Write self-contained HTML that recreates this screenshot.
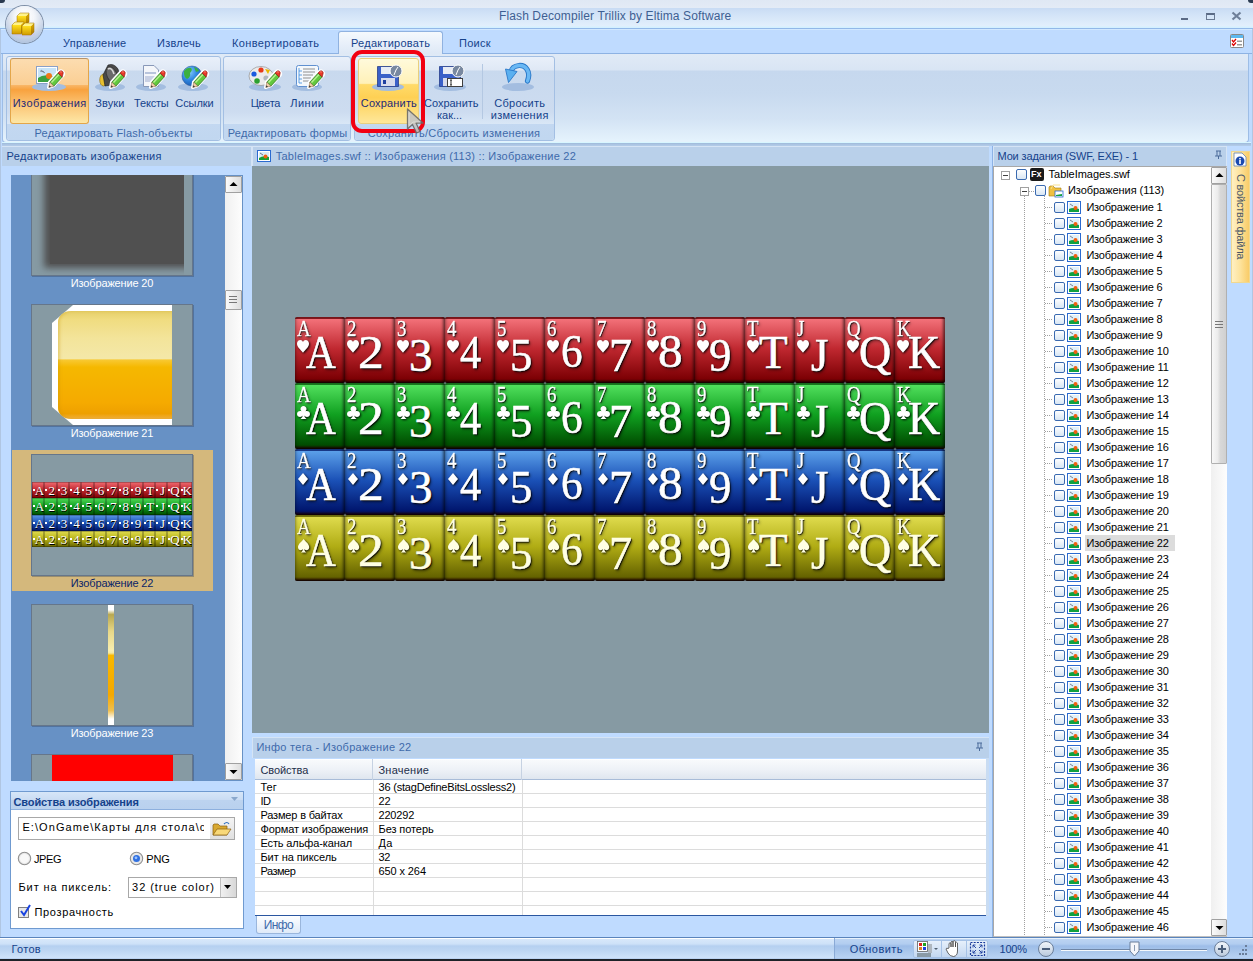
<!DOCTYPE html>
<html><head><meta charset="utf-8">
<style>
*{margin:0;padding:0;box-sizing:border-box}
html,body{width:1253px;height:961px;overflow:hidden;background:#bfdbff;font-family:"Liberation Sans",sans-serif;font-size:11px;color:#000}
.a{position:absolute}
.t{position:absolute;white-space:nowrap;line-height:13px}
.grp{position:absolute;top:56px;height:85px;border:1px solid #a3bfe3;border-radius:3px;background:linear-gradient(#e9f0fa 0,#dfe8f5 13px,#c8d9ee 14px,#cddcf0 55px,#dae8f7 68px)}
.glab{position:absolute;left:0;bottom:0;width:100%;height:16px;background:linear-gradient(#c3d8f1,#c1d7f0);color:#3e6aaa;text-align:center;line-height:15px;font-size:11px;border-radius:0 0 3px 3px}
.btxt{position:absolute;color:#15428b;text-align:center;white-space:nowrap;font-size:11px;line-height:13px}
.phead{position:absolute;height:20px;background:#bad1ec;color:#15428b;font-size:11.5px;line-height:20px;padding-left:6px;white-space:nowrap}
</style></head><body>


<div class="a" style="left:0;top:0;width:1253px;height:29px;background:linear-gradient(#dfe8f4 0,#e3ebf6 8px,#c9dcf4 8.5px,#d2e3f7 14px,#e2effc 26px,#d4f0ff 27px);border-bottom:1px solid #92b8e8"></div>
<div class="a" style="left:0;top:0;width:5px;height:3px;background:#2a3a50;border-radius:0 0 4px 0"></div>
<div class="a" style="left:1248px;top:0;width:5px;height:3px;background:#2a3a50;border-radius:0 0 0 4px"></div>
<div class="t" style="left:499px;top:10px;color:#3e5f92;font-size:12px;font-weight:normal;letter-spacing:0.116px;">Flash Decompiler Trillix by Eltima Software</div>
<!-- window controls -->
<div class="a" style="left:1181px;top:18px;width:7px;height:2px;background:#5b6b85"></div>
<div class="a" style="left:1206px;top:13px;width:9px;height:7px;border:1px solid #6a7a92;border-top:2px solid #5b6b85"></div>
<svg class="a" style="left:1231px;top:11px" width="11" height="10"><path d="M1.5 1.5 L9.5 8.5 M9.5 1.5 L1.5 8.5" stroke="#6e7f99" stroke-width="2.2"/></svg>
<!-- tabs row -->
<div class="a" style="left:0;top:29px;width:1253px;height:25px;background:#bfdbff;border-bottom:1px solid #8db2e3"></div><div class="a" style="left:0;top:29px;width:1253px;height:1px;background:#d2e8ff"></div>
<div class="a" style="left:0;top:29px;width:1px;height:932px;background:#b0c6e2"></div>
<div class="a" style="left:1252px;top:29px;width:1px;height:932px;background:#b0c6e2"></div>
<div class="t" style="left:63px;top:37px;color:#15428b;font-size:11px;font-weight:normal;letter-spacing:0.224px;">Управление</div>
<div class="t" style="left:157px;top:37px;color:#15428b;font-size:11px;font-weight:normal;letter-spacing:0.259px;">Извлечь</div>
<div class="t" style="left:232px;top:37px;color:#15428b;font-size:11px;font-weight:normal;letter-spacing:0.385px;">Конвертировать</div>
<div class="a" style="left:338px;top:31px;width:105px;height:24px;background:linear-gradient(#f5f9fd 0,#e6eef9 60%,#dde8f5 100%);border:1px solid #90b2e0;border-bottom:none;border-radius:3px 3px 0 0"></div>
<div class="t" style="left:351px;top:37px;color:#15428b;font-size:11px;font-weight:normal;letter-spacing:0.246px;">Редактировать</div>
<div class="t" style="left:459px;top:37px;color:#15428b;font-size:11px;font-weight:normal;letter-spacing:0.283px;">Поиск</div>
<!-- top right icon -->
<svg class="a" style="left:1230px;top:34px" width="14" height="14">
<rect x="0.5" y="0.5" width="13" height="13" rx="1" fill="#fff" stroke="#888"/>
<rect x="1" y="1" width="12" height="3" fill="#5cb8f0"/>
<path d="M2 6 L3.5 8 L6 5 M2 9.5 L3.5 11.5 L6 8.5" stroke="#d00" stroke-width="1.3" fill="none"/>
<rect x="7" y="6.5" width="5" height="1.5" fill="#999"/><rect x="7" y="10" width="5" height="1.5" fill="#999"/>
</svg>
<!-- orb -->
<div class="a" style="left:6px;top:6px;width:37px;height:37px;border-radius:50%;background:radial-gradient(circle at 50% 28%,#ffffff 0,#f4f6fa 30%,#dde3ec 55%,#c3cedd 80%,#a9b8cc 100%);box-shadow:0 0 0 1px #7d8ea6,inset 0 -6px 8px rgba(150,180,230,0.35)"></div>
<svg class="a" style="left:0;top:0" width="48" height="48">
<defs><linearGradient id="cf" x1="0" y1="0" x2="0" y2="1"><stop offset="0" stop-color="#ffe020"/><stop offset="1" stop-color="#d09a00"/></linearGradient>
<linearGradient id="cs" x1="0" y1="0" x2="0" y2="1"><stop offset="0" stop-color="#e0b000"/><stop offset="1" stop-color="#a87400"/></linearGradient></defs>
<ellipse cx="24" cy="34" rx="11" ry="3" fill="#c8c0e8" opacity="0.6"/>
<path d="M17 16 L26 16 L26 25 L17 25 Z" fill="url(#cf)"/><path d="M26 16 L29 13 L29 22 L26 25 Z" fill="url(#cs)"/><path d="M17 16 L20 13 L29 13 L26 16 Z" fill="#fff38a"/><path d="M17 16 L20 13 L29 13 L29 22 L26 25 L17 25 Z" fill="none" stroke="#a07000" stroke-width="0.5"/><path d="M12 25 L21 25 L21 34 L12 34 Z" fill="url(#cf)"/><path d="M21 25 L24 22 L24 31 L21 34 Z" fill="url(#cs)"/><path d="M12 25 L15 22 L24 22 L21 25 Z" fill="#fff38a"/><path d="M12 25 L15 22 L24 22 L24 31 L21 34 L12 34 Z" fill="none" stroke="#a07000" stroke-width="0.5"/><path d="M22 26 L31 26 L31 35 L22 35 Z" fill="url(#cf)"/><path d="M31 26 L34 23 L34 32 L31 35 Z" fill="url(#cs)"/><path d="M22 26 L25 23 L34 23 L31 26 Z" fill="#fff38a"/><path d="M22 26 L25 23 L34 23 L34 32 L31 35 L22 35 Z" fill="none" stroke="#a07000" stroke-width="0.5"/>
</svg>


<div class="a" style="left:2px;top:54px;width:1247px;height:89px;background:linear-gradient(#e0eaf6 0,#d9e5f4 16px,#c6d8ee 17px,#c8daef 40px,#d3e3f4 65px,#e4f2fc 86px);border:1px solid #9dbde6;border-top:none;border-radius:0 0 4px 4px"></div>
<div class="a" style="left:2px;top:142px;width:1249px;height:4px;background:linear-gradient(#d8f6ff 0,#d8f6ff 1px,#9cb8da 1px,#a8c2e0 2px,#b4cdea 4px)"></div>
<div class="grp" style="left:6px;width:215px"><div class="glab"></div></div>
<div class="grp" style="left:223px;width:128px"><div class="glab"></div></div>
<div class="grp" style="left:354px;width:201px"><div class="glab"></div></div>
<div class="t" style="left:34.5px;top:127px;color:#3e6aaa;font-size:11px;font-weight:normal;letter-spacing:0.203px;">Редактировать Flash-объекты</div><div class="t" style="left:227.8px;top:127px;color:#3e6aaa;font-size:11px;font-weight:normal;letter-spacing:0.200px;">Редактировать формы</div><div class="t" style="left:367.8px;top:127px;color:#3e6aaa;font-size:11px;font-weight:normal;letter-spacing:0.271px;">Сохранить/Сбросить изменения</div>
<!-- active button -->
<div class="a" style="left:10px;top:58px;width:79px;height:66px;border:1px solid #e3a64a;border-top-color:#b8946a;border-radius:3px;background:linear-gradient(#fcdcb0 0,#fbcf94 40%,#f9b86a 40.5%,#f8a23e 48%,#fbc373 70%,#fde7a6 100%)"></div>
<!-- save button hover -->
<div class="a" style="left:358px;top:58px;width:61px;height:66px;border:1px solid #e8cf7e;border-radius:3px;background:linear-gradient(#fffadc 0,#fff1b8 38%,#ffdb6a 40%,#fed054 60%,#fee79a 100%)"></div>
<div class="a" style="left:482px;top:64px;width:1px;height:55px;background:#b4c8e2"></div>
<div class="t" style="left:12.7px;top:97px;color:#1e2a78;font-size:11px;font-weight:normal;letter-spacing:0.451px;">Изображения</div>
<div class="t" style="left:95.2px;top:97px;color:#15428b;font-size:11px;font-weight:normal;letter-spacing:0.119px;">Звуки</div>
<div class="t" style="left:134px;top:97px;color:#15428b;font-size:11px;font-weight:normal;letter-spacing:-0.168px;">Тексты</div>
<div class="t" style="left:175.3px;top:97px;color:#15428b;font-size:11px;font-weight:normal;letter-spacing:-0.072px;">Ссылки</div>
<div class="t" style="left:250.7px;top:97px;color:#15428b;font-size:11px;font-weight:normal;letter-spacing:-0.211px;">Цвета</div>
<div class="t" style="left:290.2px;top:97px;color:#15428b;font-size:11px;font-weight:normal;letter-spacing:0.513px;">Линии</div>
<div class="t" style="left:360.8px;top:97px;color:#1e2a78;font-size:11px;font-weight:normal;letter-spacing:0.170px;">Сохранить</div>
<div class="t" style="left:424px;top:97px;color:#15428b;font-size:11px;font-weight:normal;letter-spacing:-0.019px;">Сохранить</div>
<div class="t" style="left:437px;top:109px;color:#15428b;font-size:11px;font-weight:normal;letter-spacing:0.000px;">как...</div>
<div class="t" style="left:494.3px;top:97px;color:#15428b;font-size:11px;font-weight:normal;letter-spacing:0.249px;">Сбросить</div>
<div class="t" style="left:490.7px;top:109px;color:#15428b;font-size:11px;font-weight:normal;letter-spacing:0.306px;">изменения</div>
<svg class="a" style="left:0;top:50px" width="560" height="80">
<ellipse cx="49" cy="37" rx="17" ry="4" fill="#a3bde0"/>
<rect x="36.5" y="16.5" width="21" height="17" fill="#fff" stroke="#8aa0c8"/><rect x="38" y="18" width="18" height="14" fill="#c8e4f8"/><path d="M38 28 Q44 23 56 27 L56 32 L38 32 Z" fill="#3aa040"/><circle cx="49" cy="26" r="3" fill="#f07818"/><path d="M40 21 L44 22 M41 20 L45 23" stroke="#556" stroke-width="0.6"/>
<g transform="translate(48,20)">
<path d="M0.5 17.5 L1.5 12 L10.5 2 Q12.5 0 14.5 1.5 Q16.5 3.5 15 5.5 L6 15.5 Z" fill="#fff" stroke="#fff" stroke-width="3" stroke-linejoin="round"/>
<path d="M1.8 12.2 L10.2 3 L14.2 7 L5.8 16.2 Z" fill="#62c83e" stroke="#2a6e1a" stroke-width="0.7"/>
<path d="M3.5 12.5 L11 4.5" stroke="#b8f090" stroke-width="1.3"/>
<path d="M10 3 L11.8 1.2 Q13 0.2 14.4 1.2 Q15.8 2.6 15 4 L14.2 7 Z" fill="#e83a28" stroke="#8a1010" stroke-width="0.6"/>
<path d="M12 2 Q13 1.5 13.8 2.2" stroke="#ff9a8a" stroke-width="0.8" fill="none"/>
<path d="M1.8 12.2 L5.8 16.2 L0.8 17.4 Z" fill="#f4d0a8" stroke="#806040" stroke-width="0.5"/>
<path d="M0.8 17.4 L1.4 15.2 L3 16.7 Z" fill="#333"/>
</g>
<ellipse cx="110" cy="37" rx="15" ry="4" fill="#a3bde0"/>
<ellipse cx="103.5" cy="30" rx="3.8" ry="6" fill="#e8c030" stroke="#8a6a10" stroke-width="0.6"/>
<path d="M103 25 L108 15 Q114 13 118 19 Q121 27 117 34 L105 36 Z" fill="#4a4a4a" stroke="#1a1a1a" stroke-width="0.6"/>
<ellipse cx="112" cy="25" rx="5" ry="9" transform="rotate(-25 112 25)" fill="#6a6a6a" stroke="#2a2a2a" stroke-width="0.6"/>
<path d="M108 19 Q112 17 114 24" stroke="#d8d8d8" stroke-width="1.6" fill="none"/>
<g transform="translate(110,20)">
<path d="M0.5 17.5 L1.5 12 L10.5 2 Q12.5 0 14.5 1.5 Q16.5 3.5 15 5.5 L6 15.5 Z" fill="#fff" stroke="#fff" stroke-width="3" stroke-linejoin="round"/>
<path d="M1.8 12.2 L10.2 3 L14.2 7 L5.8 16.2 Z" fill="#62c83e" stroke="#2a6e1a" stroke-width="0.7"/>
<path d="M3.5 12.5 L11 4.5" stroke="#b8f090" stroke-width="1.3"/>
<path d="M10 3 L11.8 1.2 Q13 0.2 14.4 1.2 Q15.8 2.6 15 4 L14.2 7 Z" fill="#e83a28" stroke="#8a1010" stroke-width="0.6"/>
<path d="M12 2 Q13 1.5 13.8 2.2" stroke="#ff9a8a" stroke-width="0.8" fill="none"/>
<path d="M1.8 12.2 L5.8 16.2 L0.8 17.4 Z" fill="#f4d0a8" stroke="#806040" stroke-width="0.5"/>
<path d="M0.8 17.4 L1.4 15.2 L3 16.7 Z" fill="#333"/>
</g>
<ellipse cx="151" cy="37" rx="15" ry="4" fill="#a3bde0"/>
<path d="M143.5 15.5 L154 15.5 L158.5 20 L158.5 36.5 L143.5 36.5 Z" fill="#f4f6fa" stroke="#8898b8"/><rect x="145" y="22" width="11" height="2" fill="#b8c4dc"/><rect x="145" y="26" width="11" height="6" fill="#c8d0e4"/>
<g transform="translate(150,20)">
<path d="M0.5 17.5 L1.5 12 L10.5 2 Q12.5 0 14.5 1.5 Q16.5 3.5 15 5.5 L6 15.5 Z" fill="#fff" stroke="#fff" stroke-width="3" stroke-linejoin="round"/>
<path d="M1.8 12.2 L10.2 3 L14.2 7 L5.8 16.2 Z" fill="#62c83e" stroke="#2a6e1a" stroke-width="0.7"/>
<path d="M3.5 12.5 L11 4.5" stroke="#b8f090" stroke-width="1.3"/>
<path d="M10 3 L11.8 1.2 Q13 0.2 14.4 1.2 Q15.8 2.6 15 4 L14.2 7 Z" fill="#e83a28" stroke="#8a1010" stroke-width="0.6"/>
<path d="M12 2 Q13 1.5 13.8 2.2" stroke="#ff9a8a" stroke-width="0.8" fill="none"/>
<path d="M1.8 12.2 L5.8 16.2 L0.8 17.4 Z" fill="#f4d0a8" stroke="#806040" stroke-width="0.5"/>
<path d="M0.8 17.4 L1.4 15.2 L3 16.7 Z" fill="#333"/>
</g>
<ellipse cx="193" cy="37" rx="15" ry="4" fill="#a3bde0"/>
<defs><radialGradient id="gl" cx="0.35" cy="0.3" r="0.8"><stop offset="0" stop-color="#8ad0ff"/><stop offset="0.5" stop-color="#2f86e0"/><stop offset="1" stop-color="#1450a8"/></radialGradient></defs>
<circle cx="192" cy="26" r="10" fill="url(#gl)" stroke="#1a4a90" stroke-width="0.5"/>
<path d="M184 21 Q187 17 191 18 Q193 20 190 23 Q191 27 187 29 Q184 27 184 24Z" fill="#3cb040"/><path d="M194 17 Q198 18 199 21 L196 22Z" fill="#3cb040"/><path d="M195 27 Q200 26 200 30 Q197 34 194 33Z" fill="#3cb040"/>
<g transform="translate(192,20)">
<path d="M0.5 17.5 L1.5 12 L10.5 2 Q12.5 0 14.5 1.5 Q16.5 3.5 15 5.5 L6 15.5 Z" fill="#fff" stroke="#fff" stroke-width="3" stroke-linejoin="round"/>
<path d="M1.8 12.2 L10.2 3 L14.2 7 L5.8 16.2 Z" fill="#62c83e" stroke="#2a6e1a" stroke-width="0.7"/>
<path d="M3.5 12.5 L11 4.5" stroke="#b8f090" stroke-width="1.3"/>
<path d="M10 3 L11.8 1.2 Q13 0.2 14.4 1.2 Q15.8 2.6 15 4 L14.2 7 Z" fill="#e83a28" stroke="#8a1010" stroke-width="0.6"/>
<path d="M12 2 Q13 1.5 13.8 2.2" stroke="#ff9a8a" stroke-width="0.8" fill="none"/>
<path d="M1.8 12.2 L5.8 16.2 L0.8 17.4 Z" fill="#f4d0a8" stroke="#806040" stroke-width="0.5"/>
<path d="M0.8 17.4 L1.4 15.2 L3 16.7 Z" fill="#333"/>
</g>
<ellipse cx="265" cy="37" rx="16" ry="4" fill="#a3bde0"/>
<ellipse cx="261" cy="26" rx="12" ry="9.5" fill="#ececec" stroke="#909090" stroke-width="0.7"/><circle cx="261" cy="20" r="2.6" fill="#e83a1a"/><circle cx="254" cy="24" r="2.6" fill="#1a5ae0"/><circle cx="257" cy="31" r="2.8" fill="#2ca030"/><path d="M265 19 L270 20 L268 24 Z" fill="#e8b800"/><circle cx="266" cy="28" r="2.6" fill="#b0b8c0"/>
<g transform="translate(265,20)">
<path d="M0.5 17.5 L1.5 12 L10.5 2 Q12.5 0 14.5 1.5 Q16.5 3.5 15 5.5 L6 15.5 Z" fill="#fff" stroke="#fff" stroke-width="3" stroke-linejoin="round"/>
<path d="M1.8 12.2 L10.2 3 L14.2 7 L5.8 16.2 Z" fill="#62c83e" stroke="#2a6e1a" stroke-width="0.7"/>
<path d="M3.5 12.5 L11 4.5" stroke="#b8f090" stroke-width="1.3"/>
<path d="M10 3 L11.8 1.2 Q13 0.2 14.4 1.2 Q15.8 2.6 15 4 L14.2 7 Z" fill="#e83a28" stroke="#8a1010" stroke-width="0.6"/>
<path d="M12 2 Q13 1.5 13.8 2.2" stroke="#ff9a8a" stroke-width="0.8" fill="none"/>
<path d="M1.8 12.2 L5.8 16.2 L0.8 17.4 Z" fill="#f4d0a8" stroke="#806040" stroke-width="0.5"/>
<path d="M0.8 17.4 L1.4 15.2 L3 16.7 Z" fill="#333"/>
</g>
<ellipse cx="307" cy="37" rx="15" ry="4" fill="#a3bde0"/>
<rect x="296.5" y="15.5" width="22" height="21" rx="2" fill="#f4f8fc" stroke="#6090d0"/><path d="M299 18 L299 33 M299 21 L302 21 M299 25 L302 25 M299 29 L302 29 M299 33 L302 33" stroke="#3a8ae0" stroke-width="0.8" fill="none"/><path d="M303 19 H315 M303 22 H315 M303 25 H313 M303 28 H311 M303 31 H310" stroke="#909090" stroke-width="1"/>
<g transform="translate(308,20)">
<path d="M0.5 17.5 L1.5 12 L10.5 2 Q12.5 0 14.5 1.5 Q16.5 3.5 15 5.5 L6 15.5 Z" fill="#fff" stroke="#fff" stroke-width="3" stroke-linejoin="round"/>
<path d="M1.8 12.2 L10.2 3 L14.2 7 L5.8 16.2 Z" fill="#62c83e" stroke="#2a6e1a" stroke-width="0.7"/>
<path d="M3.5 12.5 L11 4.5" stroke="#b8f090" stroke-width="1.3"/>
<path d="M10 3 L11.8 1.2 Q13 0.2 14.4 1.2 Q15.8 2.6 15 4 L14.2 7 Z" fill="#e83a28" stroke="#8a1010" stroke-width="0.6"/>
<path d="M12 2 Q13 1.5 13.8 2.2" stroke="#ff9a8a" stroke-width="0.8" fill="none"/>
<path d="M1.8 12.2 L5.8 16.2 L0.8 17.4 Z" fill="#f4d0a8" stroke="#806040" stroke-width="0.5"/>
<path d="M0.8 17.4 L1.4 15.2 L3 16.7 Z" fill="#333"/>
</g>
<ellipse cx="388" cy="37" rx="16" ry="4" fill="#a3bde0"/>
<path d="M377.5 16.5 L395.5 16.5 L398.5 19.5 L398.5 36.5 L377.5 36.5 Z" fill="#3a60c8" stroke="#1a3080" stroke-width="0.7"/><rect x="381" y="17" width="12" height="7" fill="#e8ecf4"/><rect x="381" y="28" width="14" height="8" fill="#d8dcec"/><rect x="383" y="30" width="3" height="4" fill="#2040a0"/>
<circle cx="396" cy="21" r="6" fill="#7888a0" stroke="#fff" stroke-width="1"/><path d="M394 25 Q396 19 398 17" stroke="#fff" stroke-width="1" fill="none"/>
<ellipse cx="450" cy="37" rx="16" ry="4" fill="#a3bde0"/>
<path d="M439.5 16.5 L457.5 16.5 L460.5 19.5 L460.5 36.5 L439.5 36.5 Z" fill="#3a60c8" stroke="#1a3080" stroke-width="0.7"/><rect x="443" y="17" width="12" height="7" fill="#e8ecf4"/><rect x="443" y="28" width="14" height="8" fill="#d8dcec"/>
<circle cx="458" cy="21" r="6" fill="#7888a0" stroke="#fff" stroke-width="1"/><path d="M456 25 Q458 19 460 17" stroke="#fff" stroke-width="1" fill="none"/>
<rect x="447.5" y="28.5" width="15" height="8" fill="#fff" stroke="#404040"/><path d="M450 30 H452 M451 30 V35 M450 35 H452" stroke="#000" stroke-width="0.8"/>
<ellipse cx="518" cy="37" rx="16" ry="4" fill="#a3bde0"/>
<path d="M527.5 31 C531 22 526 15 519 15.5 C514 16 511.5 19 511 22" fill="none" stroke="#2a78c8" stroke-width="5.2" stroke-linecap="round"/>
<path d="M527.5 31 C531 22 526 15 519 15.5 C514 16 511.5 19 511 22" fill="none" stroke="#6ab8f4" stroke-width="3.4" stroke-linecap="round"/>
<path d="M505.5 19 L517 21.5 L508.5 32.5 Z" fill="#5ab0f0" stroke="#2a78c8" stroke-width="0.9" stroke-linejoin="round"/>
</svg>
<div class="a" style="left:351px;top:50px;width:74px;height:83px;border:4px solid #f20012;border-radius:11px"></div>
<svg class="a" style="left:404px;top:107px" width="24" height="28"><path d="M3.5 2 L3.5 22 L8.5 17.5 L12.5 26 L16 24.5 L12 16 L19 16 Z" fill="#c4c4c4" stroke="#6a6a6a" stroke-width="1.3" stroke-linejoin="round" opacity="0.9"/><path d="M5 5.5 L5 18.5 L9 15 L16 15" fill="none" stroke="#e8e8e8" stroke-width="0.8" opacity="0.8"/></svg>


<div class="a" style="left:2px;top:146px;width:250px;height:20px;background:#b9d0ea;border-top:1px solid #d5e4f5;border-right:1px solid #d5e4f5"></div>
<div class="t" style="left:6.5px;top:150px;color:#15428b;font-size:11px;font-weight:normal;letter-spacing:0.359px;">Редактировать изображения</div>

<!-- thumbnails list -->
<div class="a" style="left:11px;top:175px;width:232px;height:606px;background:#6791c5;overflow:hidden">
<div class="a" style="left:20px;top:-21px;width:162px;height:122px;background:#869aa3;border:1px solid #66768a;overflow:hidden;box-shadow:1px 1px 0 rgba(40,60,90,0.35)"><div class="a" style="left:0;top:0;width:152px;height:120px;overflow:hidden"><div class="a" style="left:12px;top:-20px;width:150px;height:133px;background:#505050;filter:blur(3.5px)"></div><div class="a" style="left:18px;top:-10px;width:140px;height:119px;background:#505050"></div></div></div><div class="t" style="left:59.8px;top:102px;color:#ffffff;font-size:11px;font-weight:normal;letter-spacing:-0.150px;">Изображение 20</div><div class="a" style="left:20px;top:129px;width:162px;height:122px;background:#869aa3;border:1px solid #66768a;overflow:hidden;box-shadow:1px 1px 0 rgba(40,60,90,0.35)"><div class="a" style="left:20px;top:0;width:120px;height:120px;background:#fff;clip-path:polygon(21px 0,100% 0,100% 100%,21px 100%,0 calc(100% - 18px),0 18px);filter:blur(0.3px)"></div><div class="a" style="left:26px;top:6px;width:114px;height:108px;border-radius:13px 0 0 13px/11px 0 0 11px;box-shadow:inset 2px 0 3px rgba(200,150,0,0.3);background:linear-gradient(#e6cf6a 0,#f0dc80 8%,#f3e49a 25%,#f4e8a8 44%,#f8c830 45.5%,#f5b800 52%,#f5aa00 85%,#eea000 95%,#f0b040 100%)"></div></div><div class="t" style="left:59.8px;top:252px;color:#ffffff;font-size:11px;font-weight:normal;letter-spacing:-0.150px;">Изображение 21</div><div class="a" style="left:1px;top:275px;width:201px;height:141px;background:#d4b87c"></div><div class="a" style="left:20px;top:279px;width:162px;height:122px;background:#869aa3;border:1px solid #66768a;overflow:hidden;box-shadow:1px 1px 0 rgba(40,60,90,0.35)"><div class="a" style="left:0;top:27px;width:160px;height:65px"><div class="a" style="left:0.0px;top:0.0px;width:12.4px;height:16.25px;background:linear-gradient(#f06a70,#c02830 50%,#7a0000);box-shadow:inset 0 0 0 0.5px rgba(0,0,0,0.5)"></div><div class="a" style="left:2.5px;top:1.0px;width:10px;text-align:center;color:#fff;font-family:'Liberation Serif',serif;font-size:13px;line-height:16px;text-shadow:0.5px 0.5px 0.5px #000">A</div><div class="a" style="left:1.0px;top:7.0px;width:2px;height:2px;background:#fff"></div><div class="a" style="left:12.31px;top:0.0px;width:12.4px;height:16.25px;background:linear-gradient(#f06a70,#c02830 50%,#7a0000);box-shadow:inset 0 0 0 0.5px rgba(0,0,0,0.5)"></div><div class="a" style="left:14.81px;top:1.0px;width:10px;text-align:center;color:#fff;font-family:'Liberation Serif',serif;font-size:13px;line-height:16px;text-shadow:0.5px 0.5px 0.5px #000">2</div><div class="a" style="left:13.31px;top:7.0px;width:2px;height:2px;background:#fff"></div><div class="a" style="left:24.62px;top:0.0px;width:12.4px;height:16.25px;background:linear-gradient(#f06a70,#c02830 50%,#7a0000);box-shadow:inset 0 0 0 0.5px rgba(0,0,0,0.5)"></div><div class="a" style="left:27.12px;top:1.0px;width:10px;text-align:center;color:#fff;font-family:'Liberation Serif',serif;font-size:13px;line-height:16px;text-shadow:0.5px 0.5px 0.5px #000">3</div><div class="a" style="left:25.62px;top:7.0px;width:2px;height:2px;background:#fff"></div><div class="a" style="left:36.92px;top:0.0px;width:12.4px;height:16.25px;background:linear-gradient(#f06a70,#c02830 50%,#7a0000);box-shadow:inset 0 0 0 0.5px rgba(0,0,0,0.5)"></div><div class="a" style="left:39.42px;top:1.0px;width:10px;text-align:center;color:#fff;font-family:'Liberation Serif',serif;font-size:13px;line-height:16px;text-shadow:0.5px 0.5px 0.5px #000">4</div><div class="a" style="left:37.92px;top:7.0px;width:2px;height:2px;background:#fff"></div><div class="a" style="left:49.23px;top:0.0px;width:12.4px;height:16.25px;background:linear-gradient(#f06a70,#c02830 50%,#7a0000);box-shadow:inset 0 0 0 0.5px rgba(0,0,0,0.5)"></div><div class="a" style="left:51.73px;top:1.0px;width:10px;text-align:center;color:#fff;font-family:'Liberation Serif',serif;font-size:13px;line-height:16px;text-shadow:0.5px 0.5px 0.5px #000">5</div><div class="a" style="left:50.23px;top:7.0px;width:2px;height:2px;background:#fff"></div><div class="a" style="left:61.54px;top:0.0px;width:12.4px;height:16.25px;background:linear-gradient(#f06a70,#c02830 50%,#7a0000);box-shadow:inset 0 0 0 0.5px rgba(0,0,0,0.5)"></div><div class="a" style="left:64.03999999999999px;top:1.0px;width:10px;text-align:center;color:#fff;font-family:'Liberation Serif',serif;font-size:13px;line-height:16px;text-shadow:0.5px 0.5px 0.5px #000">6</div><div class="a" style="left:62.54px;top:7.0px;width:2px;height:2px;background:#fff"></div><div class="a" style="left:73.85px;top:0.0px;width:12.4px;height:16.25px;background:linear-gradient(#f06a70,#c02830 50%,#7a0000);box-shadow:inset 0 0 0 0.5px rgba(0,0,0,0.5)"></div><div class="a" style="left:76.35px;top:1.0px;width:10px;text-align:center;color:#fff;font-family:'Liberation Serif',serif;font-size:13px;line-height:16px;text-shadow:0.5px 0.5px 0.5px #000">7</div><div class="a" style="left:74.85px;top:7.0px;width:2px;height:2px;background:#fff"></div><div class="a" style="left:86.15px;top:0.0px;width:12.4px;height:16.25px;background:linear-gradient(#f06a70,#c02830 50%,#7a0000);box-shadow:inset 0 0 0 0.5px rgba(0,0,0,0.5)"></div><div class="a" style="left:88.65px;top:1.0px;width:10px;text-align:center;color:#fff;font-family:'Liberation Serif',serif;font-size:13px;line-height:16px;text-shadow:0.5px 0.5px 0.5px #000">8</div><div class="a" style="left:87.15px;top:7.0px;width:2px;height:2px;background:#fff"></div><div class="a" style="left:98.46px;top:0.0px;width:12.4px;height:16.25px;background:linear-gradient(#f06a70,#c02830 50%,#7a0000);box-shadow:inset 0 0 0 0.5px rgba(0,0,0,0.5)"></div><div class="a" style="left:100.96px;top:1.0px;width:10px;text-align:center;color:#fff;font-family:'Liberation Serif',serif;font-size:13px;line-height:16px;text-shadow:0.5px 0.5px 0.5px #000">9</div><div class="a" style="left:99.46px;top:7.0px;width:2px;height:2px;background:#fff"></div><div class="a" style="left:110.77px;top:0.0px;width:12.4px;height:16.25px;background:linear-gradient(#f06a70,#c02830 50%,#7a0000);box-shadow:inset 0 0 0 0.5px rgba(0,0,0,0.5)"></div><div class="a" style="left:113.27px;top:1.0px;width:10px;text-align:center;color:#fff;font-family:'Liberation Serif',serif;font-size:13px;line-height:16px;text-shadow:0.5px 0.5px 0.5px #000">T</div><div class="a" style="left:111.77px;top:7.0px;width:2px;height:2px;background:#fff"></div><div class="a" style="left:123.08px;top:0.0px;width:12.4px;height:16.25px;background:linear-gradient(#f06a70,#c02830 50%,#7a0000);box-shadow:inset 0 0 0 0.5px rgba(0,0,0,0.5)"></div><div class="a" style="left:125.58px;top:1.0px;width:10px;text-align:center;color:#fff;font-family:'Liberation Serif',serif;font-size:13px;line-height:16px;text-shadow:0.5px 0.5px 0.5px #000">J</div><div class="a" style="left:124.08px;top:7.0px;width:2px;height:2px;background:#fff"></div><div class="a" style="left:135.38px;top:0.0px;width:12.4px;height:16.25px;background:linear-gradient(#f06a70,#c02830 50%,#7a0000);box-shadow:inset 0 0 0 0.5px rgba(0,0,0,0.5)"></div><div class="a" style="left:137.88px;top:1.0px;width:10px;text-align:center;color:#fff;font-family:'Liberation Serif',serif;font-size:13px;line-height:16px;text-shadow:0.5px 0.5px 0.5px #000">Q</div><div class="a" style="left:136.38px;top:7.0px;width:2px;height:2px;background:#fff"></div><div class="a" style="left:147.69px;top:0.0px;width:12.4px;height:16.25px;background:linear-gradient(#f06a70,#c02830 50%,#7a0000);box-shadow:inset 0 0 0 0.5px rgba(0,0,0,0.5)"></div><div class="a" style="left:150.19px;top:1.0px;width:10px;text-align:center;color:#fff;font-family:'Liberation Serif',serif;font-size:13px;line-height:16px;text-shadow:0.5px 0.5px 0.5px #000">K</div><div class="a" style="left:148.69px;top:7.0px;width:2px;height:2px;background:#fff"></div><div class="a" style="left:0.0px;top:16.25px;width:12.4px;height:16.25px;background:linear-gradient(#50d858,#10a020 50%,#004c00);box-shadow:inset 0 0 0 0.5px rgba(0,0,0,0.5)"></div><div class="a" style="left:2.5px;top:17.25px;width:10px;text-align:center;color:#fff;font-family:'Liberation Serif',serif;font-size:13px;line-height:16px;text-shadow:0.5px 0.5px 0.5px #000">A</div><div class="a" style="left:1.0px;top:23.25px;width:2px;height:2px;background:#fff"></div><div class="a" style="left:12.31px;top:16.25px;width:12.4px;height:16.25px;background:linear-gradient(#50d858,#10a020 50%,#004c00);box-shadow:inset 0 0 0 0.5px rgba(0,0,0,0.5)"></div><div class="a" style="left:14.81px;top:17.25px;width:10px;text-align:center;color:#fff;font-family:'Liberation Serif',serif;font-size:13px;line-height:16px;text-shadow:0.5px 0.5px 0.5px #000">2</div><div class="a" style="left:13.31px;top:23.25px;width:2px;height:2px;background:#fff"></div><div class="a" style="left:24.62px;top:16.25px;width:12.4px;height:16.25px;background:linear-gradient(#50d858,#10a020 50%,#004c00);box-shadow:inset 0 0 0 0.5px rgba(0,0,0,0.5)"></div><div class="a" style="left:27.12px;top:17.25px;width:10px;text-align:center;color:#fff;font-family:'Liberation Serif',serif;font-size:13px;line-height:16px;text-shadow:0.5px 0.5px 0.5px #000">3</div><div class="a" style="left:25.62px;top:23.25px;width:2px;height:2px;background:#fff"></div><div class="a" style="left:36.92px;top:16.25px;width:12.4px;height:16.25px;background:linear-gradient(#50d858,#10a020 50%,#004c00);box-shadow:inset 0 0 0 0.5px rgba(0,0,0,0.5)"></div><div class="a" style="left:39.42px;top:17.25px;width:10px;text-align:center;color:#fff;font-family:'Liberation Serif',serif;font-size:13px;line-height:16px;text-shadow:0.5px 0.5px 0.5px #000">4</div><div class="a" style="left:37.92px;top:23.25px;width:2px;height:2px;background:#fff"></div><div class="a" style="left:49.23px;top:16.25px;width:12.4px;height:16.25px;background:linear-gradient(#50d858,#10a020 50%,#004c00);box-shadow:inset 0 0 0 0.5px rgba(0,0,0,0.5)"></div><div class="a" style="left:51.73px;top:17.25px;width:10px;text-align:center;color:#fff;font-family:'Liberation Serif',serif;font-size:13px;line-height:16px;text-shadow:0.5px 0.5px 0.5px #000">5</div><div class="a" style="left:50.23px;top:23.25px;width:2px;height:2px;background:#fff"></div><div class="a" style="left:61.54px;top:16.25px;width:12.4px;height:16.25px;background:linear-gradient(#50d858,#10a020 50%,#004c00);box-shadow:inset 0 0 0 0.5px rgba(0,0,0,0.5)"></div><div class="a" style="left:64.03999999999999px;top:17.25px;width:10px;text-align:center;color:#fff;font-family:'Liberation Serif',serif;font-size:13px;line-height:16px;text-shadow:0.5px 0.5px 0.5px #000">6</div><div class="a" style="left:62.54px;top:23.25px;width:2px;height:2px;background:#fff"></div><div class="a" style="left:73.85px;top:16.25px;width:12.4px;height:16.25px;background:linear-gradient(#50d858,#10a020 50%,#004c00);box-shadow:inset 0 0 0 0.5px rgba(0,0,0,0.5)"></div><div class="a" style="left:76.35px;top:17.25px;width:10px;text-align:center;color:#fff;font-family:'Liberation Serif',serif;font-size:13px;line-height:16px;text-shadow:0.5px 0.5px 0.5px #000">7</div><div class="a" style="left:74.85px;top:23.25px;width:2px;height:2px;background:#fff"></div><div class="a" style="left:86.15px;top:16.25px;width:12.4px;height:16.25px;background:linear-gradient(#50d858,#10a020 50%,#004c00);box-shadow:inset 0 0 0 0.5px rgba(0,0,0,0.5)"></div><div class="a" style="left:88.65px;top:17.25px;width:10px;text-align:center;color:#fff;font-family:'Liberation Serif',serif;font-size:13px;line-height:16px;text-shadow:0.5px 0.5px 0.5px #000">8</div><div class="a" style="left:87.15px;top:23.25px;width:2px;height:2px;background:#fff"></div><div class="a" style="left:98.46px;top:16.25px;width:12.4px;height:16.25px;background:linear-gradient(#50d858,#10a020 50%,#004c00);box-shadow:inset 0 0 0 0.5px rgba(0,0,0,0.5)"></div><div class="a" style="left:100.96px;top:17.25px;width:10px;text-align:center;color:#fff;font-family:'Liberation Serif',serif;font-size:13px;line-height:16px;text-shadow:0.5px 0.5px 0.5px #000">9</div><div class="a" style="left:99.46px;top:23.25px;width:2px;height:2px;background:#fff"></div><div class="a" style="left:110.77px;top:16.25px;width:12.4px;height:16.25px;background:linear-gradient(#50d858,#10a020 50%,#004c00);box-shadow:inset 0 0 0 0.5px rgba(0,0,0,0.5)"></div><div class="a" style="left:113.27px;top:17.25px;width:10px;text-align:center;color:#fff;font-family:'Liberation Serif',serif;font-size:13px;line-height:16px;text-shadow:0.5px 0.5px 0.5px #000">T</div><div class="a" style="left:111.77px;top:23.25px;width:2px;height:2px;background:#fff"></div><div class="a" style="left:123.08px;top:16.25px;width:12.4px;height:16.25px;background:linear-gradient(#50d858,#10a020 50%,#004c00);box-shadow:inset 0 0 0 0.5px rgba(0,0,0,0.5)"></div><div class="a" style="left:125.58px;top:17.25px;width:10px;text-align:center;color:#fff;font-family:'Liberation Serif',serif;font-size:13px;line-height:16px;text-shadow:0.5px 0.5px 0.5px #000">J</div><div class="a" style="left:124.08px;top:23.25px;width:2px;height:2px;background:#fff"></div><div class="a" style="left:135.38px;top:16.25px;width:12.4px;height:16.25px;background:linear-gradient(#50d858,#10a020 50%,#004c00);box-shadow:inset 0 0 0 0.5px rgba(0,0,0,0.5)"></div><div class="a" style="left:137.88px;top:17.25px;width:10px;text-align:center;color:#fff;font-family:'Liberation Serif',serif;font-size:13px;line-height:16px;text-shadow:0.5px 0.5px 0.5px #000">Q</div><div class="a" style="left:136.38px;top:23.25px;width:2px;height:2px;background:#fff"></div><div class="a" style="left:147.69px;top:16.25px;width:12.4px;height:16.25px;background:linear-gradient(#50d858,#10a020 50%,#004c00);box-shadow:inset 0 0 0 0.5px rgba(0,0,0,0.5)"></div><div class="a" style="left:150.19px;top:17.25px;width:10px;text-align:center;color:#fff;font-family:'Liberation Serif',serif;font-size:13px;line-height:16px;text-shadow:0.5px 0.5px 0.5px #000">K</div><div class="a" style="left:148.69px;top:23.25px;width:2px;height:2px;background:#fff"></div><div class="a" style="left:0.0px;top:32.5px;width:12.4px;height:16.25px;background:linear-gradient(#5a9ae8,#1a4eb4 50%,#001468);box-shadow:inset 0 0 0 0.5px rgba(0,0,0,0.5)"></div><div class="a" style="left:2.5px;top:33.5px;width:10px;text-align:center;color:#fff;font-family:'Liberation Serif',serif;font-size:13px;line-height:16px;text-shadow:0.5px 0.5px 0.5px #000">A</div><div class="a" style="left:1.0px;top:39.5px;width:2px;height:2px;background:#fff"></div><div class="a" style="left:12.31px;top:32.5px;width:12.4px;height:16.25px;background:linear-gradient(#5a9ae8,#1a4eb4 50%,#001468);box-shadow:inset 0 0 0 0.5px rgba(0,0,0,0.5)"></div><div class="a" style="left:14.81px;top:33.5px;width:10px;text-align:center;color:#fff;font-family:'Liberation Serif',serif;font-size:13px;line-height:16px;text-shadow:0.5px 0.5px 0.5px #000">2</div><div class="a" style="left:13.31px;top:39.5px;width:2px;height:2px;background:#fff"></div><div class="a" style="left:24.62px;top:32.5px;width:12.4px;height:16.25px;background:linear-gradient(#5a9ae8,#1a4eb4 50%,#001468);box-shadow:inset 0 0 0 0.5px rgba(0,0,0,0.5)"></div><div class="a" style="left:27.12px;top:33.5px;width:10px;text-align:center;color:#fff;font-family:'Liberation Serif',serif;font-size:13px;line-height:16px;text-shadow:0.5px 0.5px 0.5px #000">3</div><div class="a" style="left:25.62px;top:39.5px;width:2px;height:2px;background:#fff"></div><div class="a" style="left:36.92px;top:32.5px;width:12.4px;height:16.25px;background:linear-gradient(#5a9ae8,#1a4eb4 50%,#001468);box-shadow:inset 0 0 0 0.5px rgba(0,0,0,0.5)"></div><div class="a" style="left:39.42px;top:33.5px;width:10px;text-align:center;color:#fff;font-family:'Liberation Serif',serif;font-size:13px;line-height:16px;text-shadow:0.5px 0.5px 0.5px #000">4</div><div class="a" style="left:37.92px;top:39.5px;width:2px;height:2px;background:#fff"></div><div class="a" style="left:49.23px;top:32.5px;width:12.4px;height:16.25px;background:linear-gradient(#5a9ae8,#1a4eb4 50%,#001468);box-shadow:inset 0 0 0 0.5px rgba(0,0,0,0.5)"></div><div class="a" style="left:51.73px;top:33.5px;width:10px;text-align:center;color:#fff;font-family:'Liberation Serif',serif;font-size:13px;line-height:16px;text-shadow:0.5px 0.5px 0.5px #000">5</div><div class="a" style="left:50.23px;top:39.5px;width:2px;height:2px;background:#fff"></div><div class="a" style="left:61.54px;top:32.5px;width:12.4px;height:16.25px;background:linear-gradient(#5a9ae8,#1a4eb4 50%,#001468);box-shadow:inset 0 0 0 0.5px rgba(0,0,0,0.5)"></div><div class="a" style="left:64.03999999999999px;top:33.5px;width:10px;text-align:center;color:#fff;font-family:'Liberation Serif',serif;font-size:13px;line-height:16px;text-shadow:0.5px 0.5px 0.5px #000">6</div><div class="a" style="left:62.54px;top:39.5px;width:2px;height:2px;background:#fff"></div><div class="a" style="left:73.85px;top:32.5px;width:12.4px;height:16.25px;background:linear-gradient(#5a9ae8,#1a4eb4 50%,#001468);box-shadow:inset 0 0 0 0.5px rgba(0,0,0,0.5)"></div><div class="a" style="left:76.35px;top:33.5px;width:10px;text-align:center;color:#fff;font-family:'Liberation Serif',serif;font-size:13px;line-height:16px;text-shadow:0.5px 0.5px 0.5px #000">7</div><div class="a" style="left:74.85px;top:39.5px;width:2px;height:2px;background:#fff"></div><div class="a" style="left:86.15px;top:32.5px;width:12.4px;height:16.25px;background:linear-gradient(#5a9ae8,#1a4eb4 50%,#001468);box-shadow:inset 0 0 0 0.5px rgba(0,0,0,0.5)"></div><div class="a" style="left:88.65px;top:33.5px;width:10px;text-align:center;color:#fff;font-family:'Liberation Serif',serif;font-size:13px;line-height:16px;text-shadow:0.5px 0.5px 0.5px #000">8</div><div class="a" style="left:87.15px;top:39.5px;width:2px;height:2px;background:#fff"></div><div class="a" style="left:98.46px;top:32.5px;width:12.4px;height:16.25px;background:linear-gradient(#5a9ae8,#1a4eb4 50%,#001468);box-shadow:inset 0 0 0 0.5px rgba(0,0,0,0.5)"></div><div class="a" style="left:100.96px;top:33.5px;width:10px;text-align:center;color:#fff;font-family:'Liberation Serif',serif;font-size:13px;line-height:16px;text-shadow:0.5px 0.5px 0.5px #000">9</div><div class="a" style="left:99.46px;top:39.5px;width:2px;height:2px;background:#fff"></div><div class="a" style="left:110.77px;top:32.5px;width:12.4px;height:16.25px;background:linear-gradient(#5a9ae8,#1a4eb4 50%,#001468);box-shadow:inset 0 0 0 0.5px rgba(0,0,0,0.5)"></div><div class="a" style="left:113.27px;top:33.5px;width:10px;text-align:center;color:#fff;font-family:'Liberation Serif',serif;font-size:13px;line-height:16px;text-shadow:0.5px 0.5px 0.5px #000">T</div><div class="a" style="left:111.77px;top:39.5px;width:2px;height:2px;background:#fff"></div><div class="a" style="left:123.08px;top:32.5px;width:12.4px;height:16.25px;background:linear-gradient(#5a9ae8,#1a4eb4 50%,#001468);box-shadow:inset 0 0 0 0.5px rgba(0,0,0,0.5)"></div><div class="a" style="left:125.58px;top:33.5px;width:10px;text-align:center;color:#fff;font-family:'Liberation Serif',serif;font-size:13px;line-height:16px;text-shadow:0.5px 0.5px 0.5px #000">J</div><div class="a" style="left:124.08px;top:39.5px;width:2px;height:2px;background:#fff"></div><div class="a" style="left:135.38px;top:32.5px;width:12.4px;height:16.25px;background:linear-gradient(#5a9ae8,#1a4eb4 50%,#001468);box-shadow:inset 0 0 0 0.5px rgba(0,0,0,0.5)"></div><div class="a" style="left:137.88px;top:33.5px;width:10px;text-align:center;color:#fff;font-family:'Liberation Serif',serif;font-size:13px;line-height:16px;text-shadow:0.5px 0.5px 0.5px #000">Q</div><div class="a" style="left:136.38px;top:39.5px;width:2px;height:2px;background:#fff"></div><div class="a" style="left:147.69px;top:32.5px;width:12.4px;height:16.25px;background:linear-gradient(#5a9ae8,#1a4eb4 50%,#001468);box-shadow:inset 0 0 0 0.5px rgba(0,0,0,0.5)"></div><div class="a" style="left:150.19px;top:33.5px;width:10px;text-align:center;color:#fff;font-family:'Liberation Serif',serif;font-size:13px;line-height:16px;text-shadow:0.5px 0.5px 0.5px #000">K</div><div class="a" style="left:148.69px;top:39.5px;width:2px;height:2px;background:#fff"></div><div class="a" style="left:0.0px;top:48.75px;width:12.4px;height:16.25px;background:linear-gradient(#e0dc50,#b8b418 50%,#646200);box-shadow:inset 0 0 0 0.5px rgba(0,0,0,0.5)"></div><div class="a" style="left:2.5px;top:49.75px;width:10px;text-align:center;color:#fff;font-family:'Liberation Serif',serif;font-size:13px;line-height:16px;text-shadow:0.5px 0.5px 0.5px #000">A</div><div class="a" style="left:1.0px;top:55.75px;width:2px;height:2px;background:#fff"></div><div class="a" style="left:12.31px;top:48.75px;width:12.4px;height:16.25px;background:linear-gradient(#e0dc50,#b8b418 50%,#646200);box-shadow:inset 0 0 0 0.5px rgba(0,0,0,0.5)"></div><div class="a" style="left:14.81px;top:49.75px;width:10px;text-align:center;color:#fff;font-family:'Liberation Serif',serif;font-size:13px;line-height:16px;text-shadow:0.5px 0.5px 0.5px #000">2</div><div class="a" style="left:13.31px;top:55.75px;width:2px;height:2px;background:#fff"></div><div class="a" style="left:24.62px;top:48.75px;width:12.4px;height:16.25px;background:linear-gradient(#e0dc50,#b8b418 50%,#646200);box-shadow:inset 0 0 0 0.5px rgba(0,0,0,0.5)"></div><div class="a" style="left:27.12px;top:49.75px;width:10px;text-align:center;color:#fff;font-family:'Liberation Serif',serif;font-size:13px;line-height:16px;text-shadow:0.5px 0.5px 0.5px #000">3</div><div class="a" style="left:25.62px;top:55.75px;width:2px;height:2px;background:#fff"></div><div class="a" style="left:36.92px;top:48.75px;width:12.4px;height:16.25px;background:linear-gradient(#e0dc50,#b8b418 50%,#646200);box-shadow:inset 0 0 0 0.5px rgba(0,0,0,0.5)"></div><div class="a" style="left:39.42px;top:49.75px;width:10px;text-align:center;color:#fff;font-family:'Liberation Serif',serif;font-size:13px;line-height:16px;text-shadow:0.5px 0.5px 0.5px #000">4</div><div class="a" style="left:37.92px;top:55.75px;width:2px;height:2px;background:#fff"></div><div class="a" style="left:49.23px;top:48.75px;width:12.4px;height:16.25px;background:linear-gradient(#e0dc50,#b8b418 50%,#646200);box-shadow:inset 0 0 0 0.5px rgba(0,0,0,0.5)"></div><div class="a" style="left:51.73px;top:49.75px;width:10px;text-align:center;color:#fff;font-family:'Liberation Serif',serif;font-size:13px;line-height:16px;text-shadow:0.5px 0.5px 0.5px #000">5</div><div class="a" style="left:50.23px;top:55.75px;width:2px;height:2px;background:#fff"></div><div class="a" style="left:61.54px;top:48.75px;width:12.4px;height:16.25px;background:linear-gradient(#e0dc50,#b8b418 50%,#646200);box-shadow:inset 0 0 0 0.5px rgba(0,0,0,0.5)"></div><div class="a" style="left:64.03999999999999px;top:49.75px;width:10px;text-align:center;color:#fff;font-family:'Liberation Serif',serif;font-size:13px;line-height:16px;text-shadow:0.5px 0.5px 0.5px #000">6</div><div class="a" style="left:62.54px;top:55.75px;width:2px;height:2px;background:#fff"></div><div class="a" style="left:73.85px;top:48.75px;width:12.4px;height:16.25px;background:linear-gradient(#e0dc50,#b8b418 50%,#646200);box-shadow:inset 0 0 0 0.5px rgba(0,0,0,0.5)"></div><div class="a" style="left:76.35px;top:49.75px;width:10px;text-align:center;color:#fff;font-family:'Liberation Serif',serif;font-size:13px;line-height:16px;text-shadow:0.5px 0.5px 0.5px #000">7</div><div class="a" style="left:74.85px;top:55.75px;width:2px;height:2px;background:#fff"></div><div class="a" style="left:86.15px;top:48.75px;width:12.4px;height:16.25px;background:linear-gradient(#e0dc50,#b8b418 50%,#646200);box-shadow:inset 0 0 0 0.5px rgba(0,0,0,0.5)"></div><div class="a" style="left:88.65px;top:49.75px;width:10px;text-align:center;color:#fff;font-family:'Liberation Serif',serif;font-size:13px;line-height:16px;text-shadow:0.5px 0.5px 0.5px #000">8</div><div class="a" style="left:87.15px;top:55.75px;width:2px;height:2px;background:#fff"></div><div class="a" style="left:98.46px;top:48.75px;width:12.4px;height:16.25px;background:linear-gradient(#e0dc50,#b8b418 50%,#646200);box-shadow:inset 0 0 0 0.5px rgba(0,0,0,0.5)"></div><div class="a" style="left:100.96px;top:49.75px;width:10px;text-align:center;color:#fff;font-family:'Liberation Serif',serif;font-size:13px;line-height:16px;text-shadow:0.5px 0.5px 0.5px #000">9</div><div class="a" style="left:99.46px;top:55.75px;width:2px;height:2px;background:#fff"></div><div class="a" style="left:110.77px;top:48.75px;width:12.4px;height:16.25px;background:linear-gradient(#e0dc50,#b8b418 50%,#646200);box-shadow:inset 0 0 0 0.5px rgba(0,0,0,0.5)"></div><div class="a" style="left:113.27px;top:49.75px;width:10px;text-align:center;color:#fff;font-family:'Liberation Serif',serif;font-size:13px;line-height:16px;text-shadow:0.5px 0.5px 0.5px #000">T</div><div class="a" style="left:111.77px;top:55.75px;width:2px;height:2px;background:#fff"></div><div class="a" style="left:123.08px;top:48.75px;width:12.4px;height:16.25px;background:linear-gradient(#e0dc50,#b8b418 50%,#646200);box-shadow:inset 0 0 0 0.5px rgba(0,0,0,0.5)"></div><div class="a" style="left:125.58px;top:49.75px;width:10px;text-align:center;color:#fff;font-family:'Liberation Serif',serif;font-size:13px;line-height:16px;text-shadow:0.5px 0.5px 0.5px #000">J</div><div class="a" style="left:124.08px;top:55.75px;width:2px;height:2px;background:#fff"></div><div class="a" style="left:135.38px;top:48.75px;width:12.4px;height:16.25px;background:linear-gradient(#e0dc50,#b8b418 50%,#646200);box-shadow:inset 0 0 0 0.5px rgba(0,0,0,0.5)"></div><div class="a" style="left:137.88px;top:49.75px;width:10px;text-align:center;color:#fff;font-family:'Liberation Serif',serif;font-size:13px;line-height:16px;text-shadow:0.5px 0.5px 0.5px #000">Q</div><div class="a" style="left:136.38px;top:55.75px;width:2px;height:2px;background:#fff"></div><div class="a" style="left:147.69px;top:48.75px;width:12.4px;height:16.25px;background:linear-gradient(#e0dc50,#b8b418 50%,#646200);box-shadow:inset 0 0 0 0.5px rgba(0,0,0,0.5)"></div><div class="a" style="left:150.19px;top:49.75px;width:10px;text-align:center;color:#fff;font-family:'Liberation Serif',serif;font-size:13px;line-height:16px;text-shadow:0.5px 0.5px 0.5px #000">K</div><div class="a" style="left:148.69px;top:55.75px;width:2px;height:2px;background:#fff"></div></div></div><div class="t" style="left:59.8px;top:402px;color:#0a2468;font-size:11px;font-weight:normal;letter-spacing:-0.150px;">Изображение 22</div><div class="a" style="left:20px;top:429px;width:162px;height:122px;background:#869aa3;border:1px solid #66768a;overflow:hidden;box-shadow:1px 1px 0 rgba(40,60,90,0.35)"><div class="a" style="left:76px;top:0;width:6px;height:120px;background:linear-gradient(#ffffff 0,#ffffff 4%,#b8a850 8%,#e8d888 22%,#f8eeb0 38%,#f4e8a0 40%,#f8b800 42%,#f5a800 75%,#f0c050 88%,#ffffff 95%,#ffffff 100%)"></div></div><div class="t" style="left:59.8px;top:552px;color:#ffffff;font-size:11px;font-weight:normal;letter-spacing:-0.150px;">Изображение 23</div><div class="a" style="left:20px;top:579px;width:162px;height:122px;background:#869aa3;border:1px solid #66768a;overflow:hidden;box-shadow:1px 1px 0 rgba(40,60,90,0.35)"><div class="a" style="left:20px;top:0;width:121px;height:120px;background:#ff0000"></div></div></div>
<div class="a" style="left:225px;top:176px;width:17px;height:604px;background:linear-gradient(90deg,#f0f0f0,#fdfdfd)"></div>
<div class="a" style="left:225px;top:176px;width:17px;height:17px;background:linear-gradient(90deg,#fafafa,#dedede);border:1px solid #a0a0a0;border-radius:1px"></div>
<svg class="a" style="left:229px;top:181px" width="9" height="6"><path d="M0.5 5 L4.5 1 L8.5 5 Z" fill="#000"/></svg>
<div class="a" style="left:225px;top:290px;width:17px;height:20px;background:linear-gradient(90deg,#fafafa,#dedede);border:1px solid #a0a0a0;border-radius:1px"></div>
<div class="a" style="left:229px;top:296px;width:8px;height:7px;border-top:1px solid #777;border-bottom:1px solid #777"></div>
<div class="a" style="left:229px;top:299px;width:8px;height:1px;background:#777"></div>
<div class="a" style="left:225px;top:763px;width:17px;height:17px;background:linear-gradient(90deg,#fafafa,#dedede);border:1px solid #a0a0a0;border-radius:1px"></div>
<svg class="a" style="left:229px;top:769px" width="9" height="6"><path d="M0.5 1 L4.5 5 L8.5 1 Z" fill="#000"/></svg>
<!-- properties panel -->
<div class="a" style="left:10px;top:791px;width:234px;height:138px;background:#fff;border:1px solid #6f9ad0"></div>
<div class="a" style="left:11px;top:792px;width:232px;height:18px;background:linear-gradient(#d6e6f8 0,#cadcf3 45%,#bcd3ef 50%,#b9d1ee 100%);border-bottom:1px solid #8db0de"></div>
<div class="t" style="left:13.4px;top:795.5px;color:#15428b;font-size:11px;font-weight:bold;letter-spacing:-0.092px;">Свойства изображения</div>
<svg class="a" style="left:231px;top:797px" width="7" height="4"><path d="M0 0 L7 0 L3.5 4 Z" fill="#8aa8cc"/></svg>
<div class="a" style="left:18px;top:817px;width:217px;height:23px;background:#fff;border:1px solid #a8a8a8"></div>
<div class="t" style="left:22.4px;top:821px;color:#000;font-size:11px;font-weight:normal;letter-spacing:1.082px;">E:\OnGame\Карты для стола\c</div>
<div class="a" style="left:204px;top:818px;width:6px;height:21px;background:#fff"></div>
<div class="a" style="left:210px;top:818px;width:24px;height:21px;background:linear-gradient(#f4f4f4,#e0e0e0)"></div>
<svg class="a" style="left:212px;top:820px" width="20" height="17"><path d="M1 5 L1 15 L15 15 L15 6 L8 6 L6 4 L2 4Z" fill="#d8a830" stroke="#8a6010" stroke-width="0.7"/><path d="M1 15 L5 9 L19 9 L15 15Z" fill="#f8d878" stroke="#8a6010" stroke-width="0.7"/><path d="M12 4 Q15 1 17 4" stroke="#3070c0" stroke-width="1.2" fill="none"/></svg>
<!-- radios -->
<svg class="a" style="left:17px;top:851px" width="15" height="15"><circle cx="7.5" cy="7.5" r="6.2" fill="#e8e8e8" stroke="#909090" stroke-width="1.1"/><circle cx="7.5" cy="7.5" r="4.5" fill="#f8f8f8"/></svg>
<div class="t" style="left:33.9px;top:853px;color:#000;font-size:11px;font-weight:normal;letter-spacing:-0.334px;">JPEG</div>
<svg class="a" style="left:129px;top:851px" width="15" height="15"><circle cx="7.5" cy="7.5" r="6.2" fill="#e8e8e8" stroke="#909090" stroke-width="1.1"/><circle cx="7.5" cy="7.5" r="3.5" fill="#3070e0"/><circle cx="7" cy="6.8" r="1.4" fill="#9cc4ff"/></svg>
<div class="t" style="left:146.3px;top:853px;color:#000;font-size:11px;font-weight:normal;letter-spacing:-0.215px;">PNG</div>
<div class="t" style="left:18.5px;top:881.3px;color:#000;font-size:11px;font-weight:normal;letter-spacing:0.886px;">Бит на пиксель:</div>
<div class="a" style="left:128px;top:877px;width:109px;height:21px;background:#fff;border:1px solid #a8a8a8"></div>
<div class="t" style="left:132.1px;top:881.3px;color:#000;font-size:11px;font-weight:normal;letter-spacing:0.954px;">32 (true color)</div>
<div class="a" style="left:220px;top:878px;width:16px;height:19px;background:linear-gradient(90deg,#f0f0f0,#d8d8d8);border-left:1px solid #c0c0c0"></div>
<svg class="a" style="left:224px;top:885px" width="8" height="5"><path d="M0 0 L7 0 L3.5 4 Z" fill="#000"/></svg>
<div class="a" style="left:18px;top:907px;width:11px;height:11px;border:1px solid #808080;background:#e8e8e8"></div>
<svg class="a" style="left:19px;top:904px" width="12" height="13"><path d="M2 7 L5 11 L11 1" stroke="#1a44e0" stroke-width="2" fill="none"/></svg>
<div class="t" style="left:34.4px;top:906.2px;color:#000;font-size:11px;font-weight:normal;letter-spacing:0.696px;">Прозрачность</div>


<div class="a" style="left:252px;top:146px;width:737px;height:20px;background:#b9d0ea;border-top:1px solid #d5e4f5;border-left:1px solid #d5e4f5"></div>
<svg class="a" style="left:257px;top:150px" width="14" height="12"><rect x="0.5" y="0.5" width="13" height="11" fill="#fff" stroke="#2a6ad0"/><rect x="2" y="2" width="10" height="8" fill="#d8ecf8"/><path d="M2 8 Q6 5 12 7 L12 10 L2 10Z" fill="#18a030"/><circle cx="8.5" cy="6.5" r="2" fill="#f06010"/><path d="M3 3 L6 5" stroke="#445" stroke-width="0.7"/></svg>
<div class="t" style="left:275.8px;top:150px;color:#3e6aaa;font-size:11px;font-weight:normal;letter-spacing:0.226px;">TableImages.swf :: Изображения (113) :: Изображение 22</div>
<div class="a" style="left:252px;top:166px;width:737px;height:567px;background:#869aa3"></div>
<div class="a" style="left:992px;top:146px;width:1px;height:791px;background:#8db3e6"></div>

<div class="a" style="left:295px;top:317px;width:650px;height:264px;background:#869aa3"><div class="a" style="left:0px;top:0px;width:50px;height:66px;background:linear-gradient(#8a1a20 0,#8a1a20 1.5px,#f27078 2.5px,#c02830 48%,#7c0004 94%,#200000 100%);box-shadow:inset 2px 0 3px -1px rgba(0,0,0,0.35),inset -3px 0 3px -1px rgba(0,0,0,0.55),inset 0 -2px 2px -1px rgba(0,0,0,0.4);border-radius:2px"></div><div class="a" style="left:50px;top:0px;width:50px;height:66px;background:linear-gradient(#8a1a20 0,#8a1a20 1.5px,#f27078 2.5px,#c02830 48%,#7c0004 94%,#200000 100%);box-shadow:inset 2px 0 3px -1px rgba(0,0,0,0.35),inset -3px 0 3px -1px rgba(0,0,0,0.55),inset 0 -2px 2px -1px rgba(0,0,0,0.4);border-radius:2px"></div><div class="a" style="left:100px;top:0px;width:50px;height:66px;background:linear-gradient(#8a1a20 0,#8a1a20 1.5px,#f27078 2.5px,#c02830 48%,#7c0004 94%,#200000 100%);box-shadow:inset 2px 0 3px -1px rgba(0,0,0,0.35),inset -3px 0 3px -1px rgba(0,0,0,0.55),inset 0 -2px 2px -1px rgba(0,0,0,0.4);border-radius:2px"></div><div class="a" style="left:150px;top:0px;width:50px;height:66px;background:linear-gradient(#8a1a20 0,#8a1a20 1.5px,#f27078 2.5px,#c02830 48%,#7c0004 94%,#200000 100%);box-shadow:inset 2px 0 3px -1px rgba(0,0,0,0.35),inset -3px 0 3px -1px rgba(0,0,0,0.55),inset 0 -2px 2px -1px rgba(0,0,0,0.4);border-radius:2px"></div><div class="a" style="left:200px;top:0px;width:50px;height:66px;background:linear-gradient(#8a1a20 0,#8a1a20 1.5px,#f27078 2.5px,#c02830 48%,#7c0004 94%,#200000 100%);box-shadow:inset 2px 0 3px -1px rgba(0,0,0,0.35),inset -3px 0 3px -1px rgba(0,0,0,0.55),inset 0 -2px 2px -1px rgba(0,0,0,0.4);border-radius:2px"></div><div class="a" style="left:250px;top:0px;width:50px;height:66px;background:linear-gradient(#8a1a20 0,#8a1a20 1.5px,#f27078 2.5px,#c02830 48%,#7c0004 94%,#200000 100%);box-shadow:inset 2px 0 3px -1px rgba(0,0,0,0.35),inset -3px 0 3px -1px rgba(0,0,0,0.55),inset 0 -2px 2px -1px rgba(0,0,0,0.4);border-radius:2px"></div><div class="a" style="left:300px;top:0px;width:50px;height:66px;background:linear-gradient(#8a1a20 0,#8a1a20 1.5px,#f27078 2.5px,#c02830 48%,#7c0004 94%,#200000 100%);box-shadow:inset 2px 0 3px -1px rgba(0,0,0,0.35),inset -3px 0 3px -1px rgba(0,0,0,0.55),inset 0 -2px 2px -1px rgba(0,0,0,0.4);border-radius:2px"></div><div class="a" style="left:350px;top:0px;width:50px;height:66px;background:linear-gradient(#8a1a20 0,#8a1a20 1.5px,#f27078 2.5px,#c02830 48%,#7c0004 94%,#200000 100%);box-shadow:inset 2px 0 3px -1px rgba(0,0,0,0.35),inset -3px 0 3px -1px rgba(0,0,0,0.55),inset 0 -2px 2px -1px rgba(0,0,0,0.4);border-radius:2px"></div><div class="a" style="left:400px;top:0px;width:50px;height:66px;background:linear-gradient(#8a1a20 0,#8a1a20 1.5px,#f27078 2.5px,#c02830 48%,#7c0004 94%,#200000 100%);box-shadow:inset 2px 0 3px -1px rgba(0,0,0,0.35),inset -3px 0 3px -1px rgba(0,0,0,0.55),inset 0 -2px 2px -1px rgba(0,0,0,0.4);border-radius:2px"></div><div class="a" style="left:450px;top:0px;width:50px;height:66px;background:linear-gradient(#8a1a20 0,#8a1a20 1.5px,#f27078 2.5px,#c02830 48%,#7c0004 94%,#200000 100%);box-shadow:inset 2px 0 3px -1px rgba(0,0,0,0.35),inset -3px 0 3px -1px rgba(0,0,0,0.55),inset 0 -2px 2px -1px rgba(0,0,0,0.4);border-radius:2px"></div><div class="a" style="left:500px;top:0px;width:50px;height:66px;background:linear-gradient(#8a1a20 0,#8a1a20 1.5px,#f27078 2.5px,#c02830 48%,#7c0004 94%,#200000 100%);box-shadow:inset 2px 0 3px -1px rgba(0,0,0,0.35),inset -3px 0 3px -1px rgba(0,0,0,0.55),inset 0 -2px 2px -1px rgba(0,0,0,0.4);border-radius:2px"></div><div class="a" style="left:550px;top:0px;width:50px;height:66px;background:linear-gradient(#8a1a20 0,#8a1a20 1.5px,#f27078 2.5px,#c02830 48%,#7c0004 94%,#200000 100%);box-shadow:inset 2px 0 3px -1px rgba(0,0,0,0.35),inset -3px 0 3px -1px rgba(0,0,0,0.55),inset 0 -2px 2px -1px rgba(0,0,0,0.4);border-radius:2px"></div><div class="a" style="left:600px;top:0px;width:50px;height:66px;background:linear-gradient(#8a1a20 0,#8a1a20 1.5px,#f27078 2.5px,#c02830 48%,#7c0004 94%,#200000 100%);box-shadow:inset 2px 0 3px -1px rgba(0,0,0,0.35),inset -3px 0 3px -1px rgba(0,0,0,0.55),inset 0 -2px 2px -1px rgba(0,0,0,0.4);border-radius:2px"></div><div class="a" style="left:0px;top:66px;width:50px;height:66px;background:linear-gradient(#1a7a20 0,#1a7a20 1.5px,#50de5c 2.5px,#10a020 48%,#004c00 94%,#200000 100%);box-shadow:inset 2px 0 3px -1px rgba(0,0,0,0.35),inset -3px 0 3px -1px rgba(0,0,0,0.55),inset 0 -2px 2px -1px rgba(0,0,0,0.4);border-radius:2px"></div><div class="a" style="left:50px;top:66px;width:50px;height:66px;background:linear-gradient(#1a7a20 0,#1a7a20 1.5px,#50de5c 2.5px,#10a020 48%,#004c00 94%,#200000 100%);box-shadow:inset 2px 0 3px -1px rgba(0,0,0,0.35),inset -3px 0 3px -1px rgba(0,0,0,0.55),inset 0 -2px 2px -1px rgba(0,0,0,0.4);border-radius:2px"></div><div class="a" style="left:100px;top:66px;width:50px;height:66px;background:linear-gradient(#1a7a20 0,#1a7a20 1.5px,#50de5c 2.5px,#10a020 48%,#004c00 94%,#200000 100%);box-shadow:inset 2px 0 3px -1px rgba(0,0,0,0.35),inset -3px 0 3px -1px rgba(0,0,0,0.55),inset 0 -2px 2px -1px rgba(0,0,0,0.4);border-radius:2px"></div><div class="a" style="left:150px;top:66px;width:50px;height:66px;background:linear-gradient(#1a7a20 0,#1a7a20 1.5px,#50de5c 2.5px,#10a020 48%,#004c00 94%,#200000 100%);box-shadow:inset 2px 0 3px -1px rgba(0,0,0,0.35),inset -3px 0 3px -1px rgba(0,0,0,0.55),inset 0 -2px 2px -1px rgba(0,0,0,0.4);border-radius:2px"></div><div class="a" style="left:200px;top:66px;width:50px;height:66px;background:linear-gradient(#1a7a20 0,#1a7a20 1.5px,#50de5c 2.5px,#10a020 48%,#004c00 94%,#200000 100%);box-shadow:inset 2px 0 3px -1px rgba(0,0,0,0.35),inset -3px 0 3px -1px rgba(0,0,0,0.55),inset 0 -2px 2px -1px rgba(0,0,0,0.4);border-radius:2px"></div><div class="a" style="left:250px;top:66px;width:50px;height:66px;background:linear-gradient(#1a7a20 0,#1a7a20 1.5px,#50de5c 2.5px,#10a020 48%,#004c00 94%,#200000 100%);box-shadow:inset 2px 0 3px -1px rgba(0,0,0,0.35),inset -3px 0 3px -1px rgba(0,0,0,0.55),inset 0 -2px 2px -1px rgba(0,0,0,0.4);border-radius:2px"></div><div class="a" style="left:300px;top:66px;width:50px;height:66px;background:linear-gradient(#1a7a20 0,#1a7a20 1.5px,#50de5c 2.5px,#10a020 48%,#004c00 94%,#200000 100%);box-shadow:inset 2px 0 3px -1px rgba(0,0,0,0.35),inset -3px 0 3px -1px rgba(0,0,0,0.55),inset 0 -2px 2px -1px rgba(0,0,0,0.4);border-radius:2px"></div><div class="a" style="left:350px;top:66px;width:50px;height:66px;background:linear-gradient(#1a7a20 0,#1a7a20 1.5px,#50de5c 2.5px,#10a020 48%,#004c00 94%,#200000 100%);box-shadow:inset 2px 0 3px -1px rgba(0,0,0,0.35),inset -3px 0 3px -1px rgba(0,0,0,0.55),inset 0 -2px 2px -1px rgba(0,0,0,0.4);border-radius:2px"></div><div class="a" style="left:400px;top:66px;width:50px;height:66px;background:linear-gradient(#1a7a20 0,#1a7a20 1.5px,#50de5c 2.5px,#10a020 48%,#004c00 94%,#200000 100%);box-shadow:inset 2px 0 3px -1px rgba(0,0,0,0.35),inset -3px 0 3px -1px rgba(0,0,0,0.55),inset 0 -2px 2px -1px rgba(0,0,0,0.4);border-radius:2px"></div><div class="a" style="left:450px;top:66px;width:50px;height:66px;background:linear-gradient(#1a7a20 0,#1a7a20 1.5px,#50de5c 2.5px,#10a020 48%,#004c00 94%,#200000 100%);box-shadow:inset 2px 0 3px -1px rgba(0,0,0,0.35),inset -3px 0 3px -1px rgba(0,0,0,0.55),inset 0 -2px 2px -1px rgba(0,0,0,0.4);border-radius:2px"></div><div class="a" style="left:500px;top:66px;width:50px;height:66px;background:linear-gradient(#1a7a20 0,#1a7a20 1.5px,#50de5c 2.5px,#10a020 48%,#004c00 94%,#200000 100%);box-shadow:inset 2px 0 3px -1px rgba(0,0,0,0.35),inset -3px 0 3px -1px rgba(0,0,0,0.55),inset 0 -2px 2px -1px rgba(0,0,0,0.4);border-radius:2px"></div><div class="a" style="left:550px;top:66px;width:50px;height:66px;background:linear-gradient(#1a7a20 0,#1a7a20 1.5px,#50de5c 2.5px,#10a020 48%,#004c00 94%,#200000 100%);box-shadow:inset 2px 0 3px -1px rgba(0,0,0,0.35),inset -3px 0 3px -1px rgba(0,0,0,0.55),inset 0 -2px 2px -1px rgba(0,0,0,0.4);border-radius:2px"></div><div class="a" style="left:600px;top:66px;width:50px;height:66px;background:linear-gradient(#1a7a20 0,#1a7a20 1.5px,#50de5c 2.5px,#10a020 48%,#004c00 94%,#200000 100%);box-shadow:inset 2px 0 3px -1px rgba(0,0,0,0.35),inset -3px 0 3px -1px rgba(0,0,0,0.55),inset 0 -2px 2px -1px rgba(0,0,0,0.4);border-radius:2px"></div><div class="a" style="left:0px;top:132px;width:50px;height:66px;background:linear-gradient(#1a3a8a 0,#1a3a8a 1.5px,#5a9ee8 2.5px,#1a50b6 48%,#00156c 94%,#200000 100%);box-shadow:inset 2px 0 3px -1px rgba(0,0,0,0.35),inset -3px 0 3px -1px rgba(0,0,0,0.55),inset 0 -2px 2px -1px rgba(0,0,0,0.4);border-radius:2px"></div><div class="a" style="left:50px;top:132px;width:50px;height:66px;background:linear-gradient(#1a3a8a 0,#1a3a8a 1.5px,#5a9ee8 2.5px,#1a50b6 48%,#00156c 94%,#200000 100%);box-shadow:inset 2px 0 3px -1px rgba(0,0,0,0.35),inset -3px 0 3px -1px rgba(0,0,0,0.55),inset 0 -2px 2px -1px rgba(0,0,0,0.4);border-radius:2px"></div><div class="a" style="left:100px;top:132px;width:50px;height:66px;background:linear-gradient(#1a3a8a 0,#1a3a8a 1.5px,#5a9ee8 2.5px,#1a50b6 48%,#00156c 94%,#200000 100%);box-shadow:inset 2px 0 3px -1px rgba(0,0,0,0.35),inset -3px 0 3px -1px rgba(0,0,0,0.55),inset 0 -2px 2px -1px rgba(0,0,0,0.4);border-radius:2px"></div><div class="a" style="left:150px;top:132px;width:50px;height:66px;background:linear-gradient(#1a3a8a 0,#1a3a8a 1.5px,#5a9ee8 2.5px,#1a50b6 48%,#00156c 94%,#200000 100%);box-shadow:inset 2px 0 3px -1px rgba(0,0,0,0.35),inset -3px 0 3px -1px rgba(0,0,0,0.55),inset 0 -2px 2px -1px rgba(0,0,0,0.4);border-radius:2px"></div><div class="a" style="left:200px;top:132px;width:50px;height:66px;background:linear-gradient(#1a3a8a 0,#1a3a8a 1.5px,#5a9ee8 2.5px,#1a50b6 48%,#00156c 94%,#200000 100%);box-shadow:inset 2px 0 3px -1px rgba(0,0,0,0.35),inset -3px 0 3px -1px rgba(0,0,0,0.55),inset 0 -2px 2px -1px rgba(0,0,0,0.4);border-radius:2px"></div><div class="a" style="left:250px;top:132px;width:50px;height:66px;background:linear-gradient(#1a3a8a 0,#1a3a8a 1.5px,#5a9ee8 2.5px,#1a50b6 48%,#00156c 94%,#200000 100%);box-shadow:inset 2px 0 3px -1px rgba(0,0,0,0.35),inset -3px 0 3px -1px rgba(0,0,0,0.55),inset 0 -2px 2px -1px rgba(0,0,0,0.4);border-radius:2px"></div><div class="a" style="left:300px;top:132px;width:50px;height:66px;background:linear-gradient(#1a3a8a 0,#1a3a8a 1.5px,#5a9ee8 2.5px,#1a50b6 48%,#00156c 94%,#200000 100%);box-shadow:inset 2px 0 3px -1px rgba(0,0,0,0.35),inset -3px 0 3px -1px rgba(0,0,0,0.55),inset 0 -2px 2px -1px rgba(0,0,0,0.4);border-radius:2px"></div><div class="a" style="left:350px;top:132px;width:50px;height:66px;background:linear-gradient(#1a3a8a 0,#1a3a8a 1.5px,#5a9ee8 2.5px,#1a50b6 48%,#00156c 94%,#200000 100%);box-shadow:inset 2px 0 3px -1px rgba(0,0,0,0.35),inset -3px 0 3px -1px rgba(0,0,0,0.55),inset 0 -2px 2px -1px rgba(0,0,0,0.4);border-radius:2px"></div><div class="a" style="left:400px;top:132px;width:50px;height:66px;background:linear-gradient(#1a3a8a 0,#1a3a8a 1.5px,#5a9ee8 2.5px,#1a50b6 48%,#00156c 94%,#200000 100%);box-shadow:inset 2px 0 3px -1px rgba(0,0,0,0.35),inset -3px 0 3px -1px rgba(0,0,0,0.55),inset 0 -2px 2px -1px rgba(0,0,0,0.4);border-radius:2px"></div><div class="a" style="left:450px;top:132px;width:50px;height:66px;background:linear-gradient(#1a3a8a 0,#1a3a8a 1.5px,#5a9ee8 2.5px,#1a50b6 48%,#00156c 94%,#200000 100%);box-shadow:inset 2px 0 3px -1px rgba(0,0,0,0.35),inset -3px 0 3px -1px rgba(0,0,0,0.55),inset 0 -2px 2px -1px rgba(0,0,0,0.4);border-radius:2px"></div><div class="a" style="left:500px;top:132px;width:50px;height:66px;background:linear-gradient(#1a3a8a 0,#1a3a8a 1.5px,#5a9ee8 2.5px,#1a50b6 48%,#00156c 94%,#200000 100%);box-shadow:inset 2px 0 3px -1px rgba(0,0,0,0.35),inset -3px 0 3px -1px rgba(0,0,0,0.55),inset 0 -2px 2px -1px rgba(0,0,0,0.4);border-radius:2px"></div><div class="a" style="left:550px;top:132px;width:50px;height:66px;background:linear-gradient(#1a3a8a 0,#1a3a8a 1.5px,#5a9ee8 2.5px,#1a50b6 48%,#00156c 94%,#200000 100%);box-shadow:inset 2px 0 3px -1px rgba(0,0,0,0.35),inset -3px 0 3px -1px rgba(0,0,0,0.55),inset 0 -2px 2px -1px rgba(0,0,0,0.4);border-radius:2px"></div><div class="a" style="left:600px;top:132px;width:50px;height:66px;background:linear-gradient(#1a3a8a 0,#1a3a8a 1.5px,#5a9ee8 2.5px,#1a50b6 48%,#00156c 94%,#200000 100%);box-shadow:inset 2px 0 3px -1px rgba(0,0,0,0.35),inset -3px 0 3px -1px rgba(0,0,0,0.55),inset 0 -2px 2px -1px rgba(0,0,0,0.4);border-radius:2px"></div><div class="a" style="left:0px;top:198px;width:50px;height:66px;background:linear-gradient(#7a7810 0,#7a7810 1.5px,#dedA4c 2.5px,#b0ac14 48%,#646200 94%,#200000 100%);box-shadow:inset 2px 0 3px -1px rgba(0,0,0,0.35),inset -3px 0 3px -1px rgba(0,0,0,0.55),inset 0 -2px 2px -1px rgba(0,0,0,0.4);border-radius:2px"></div><div class="a" style="left:50px;top:198px;width:50px;height:66px;background:linear-gradient(#7a7810 0,#7a7810 1.5px,#dedA4c 2.5px,#b0ac14 48%,#646200 94%,#200000 100%);box-shadow:inset 2px 0 3px -1px rgba(0,0,0,0.35),inset -3px 0 3px -1px rgba(0,0,0,0.55),inset 0 -2px 2px -1px rgba(0,0,0,0.4);border-radius:2px"></div><div class="a" style="left:100px;top:198px;width:50px;height:66px;background:linear-gradient(#7a7810 0,#7a7810 1.5px,#dedA4c 2.5px,#b0ac14 48%,#646200 94%,#200000 100%);box-shadow:inset 2px 0 3px -1px rgba(0,0,0,0.35),inset -3px 0 3px -1px rgba(0,0,0,0.55),inset 0 -2px 2px -1px rgba(0,0,0,0.4);border-radius:2px"></div><div class="a" style="left:150px;top:198px;width:50px;height:66px;background:linear-gradient(#7a7810 0,#7a7810 1.5px,#dedA4c 2.5px,#b0ac14 48%,#646200 94%,#200000 100%);box-shadow:inset 2px 0 3px -1px rgba(0,0,0,0.35),inset -3px 0 3px -1px rgba(0,0,0,0.55),inset 0 -2px 2px -1px rgba(0,0,0,0.4);border-radius:2px"></div><div class="a" style="left:200px;top:198px;width:50px;height:66px;background:linear-gradient(#7a7810 0,#7a7810 1.5px,#dedA4c 2.5px,#b0ac14 48%,#646200 94%,#200000 100%);box-shadow:inset 2px 0 3px -1px rgba(0,0,0,0.35),inset -3px 0 3px -1px rgba(0,0,0,0.55),inset 0 -2px 2px -1px rgba(0,0,0,0.4);border-radius:2px"></div><div class="a" style="left:250px;top:198px;width:50px;height:66px;background:linear-gradient(#7a7810 0,#7a7810 1.5px,#dedA4c 2.5px,#b0ac14 48%,#646200 94%,#200000 100%);box-shadow:inset 2px 0 3px -1px rgba(0,0,0,0.35),inset -3px 0 3px -1px rgba(0,0,0,0.55),inset 0 -2px 2px -1px rgba(0,0,0,0.4);border-radius:2px"></div><div class="a" style="left:300px;top:198px;width:50px;height:66px;background:linear-gradient(#7a7810 0,#7a7810 1.5px,#dedA4c 2.5px,#b0ac14 48%,#646200 94%,#200000 100%);box-shadow:inset 2px 0 3px -1px rgba(0,0,0,0.35),inset -3px 0 3px -1px rgba(0,0,0,0.55),inset 0 -2px 2px -1px rgba(0,0,0,0.4);border-radius:2px"></div><div class="a" style="left:350px;top:198px;width:50px;height:66px;background:linear-gradient(#7a7810 0,#7a7810 1.5px,#dedA4c 2.5px,#b0ac14 48%,#646200 94%,#200000 100%);box-shadow:inset 2px 0 3px -1px rgba(0,0,0,0.35),inset -3px 0 3px -1px rgba(0,0,0,0.55),inset 0 -2px 2px -1px rgba(0,0,0,0.4);border-radius:2px"></div><div class="a" style="left:400px;top:198px;width:50px;height:66px;background:linear-gradient(#7a7810 0,#7a7810 1.5px,#dedA4c 2.5px,#b0ac14 48%,#646200 94%,#200000 100%);box-shadow:inset 2px 0 3px -1px rgba(0,0,0,0.35),inset -3px 0 3px -1px rgba(0,0,0,0.55),inset 0 -2px 2px -1px rgba(0,0,0,0.4);border-radius:2px"></div><div class="a" style="left:450px;top:198px;width:50px;height:66px;background:linear-gradient(#7a7810 0,#7a7810 1.5px,#dedA4c 2.5px,#b0ac14 48%,#646200 94%,#200000 100%);box-shadow:inset 2px 0 3px -1px rgba(0,0,0,0.35),inset -3px 0 3px -1px rgba(0,0,0,0.55),inset 0 -2px 2px -1px rgba(0,0,0,0.4);border-radius:2px"></div><div class="a" style="left:500px;top:198px;width:50px;height:66px;background:linear-gradient(#7a7810 0,#7a7810 1.5px,#dedA4c 2.5px,#b0ac14 48%,#646200 94%,#200000 100%);box-shadow:inset 2px 0 3px -1px rgba(0,0,0,0.35),inset -3px 0 3px -1px rgba(0,0,0,0.55),inset 0 -2px 2px -1px rgba(0,0,0,0.4);border-radius:2px"></div><div class="a" style="left:550px;top:198px;width:50px;height:66px;background:linear-gradient(#7a7810 0,#7a7810 1.5px,#dedA4c 2.5px,#b0ac14 48%,#646200 94%,#200000 100%);box-shadow:inset 2px 0 3px -1px rgba(0,0,0,0.35),inset -3px 0 3px -1px rgba(0,0,0,0.55),inset 0 -2px 2px -1px rgba(0,0,0,0.4);border-radius:2px"></div><div class="a" style="left:600px;top:198px;width:50px;height:66px;background:linear-gradient(#7a7810 0,#7a7810 1.5px,#dedA4c 2.5px,#b0ac14 48%,#646200 94%,#200000 100%);box-shadow:inset 2px 0 3px -1px rgba(0,0,0,0.35),inset -3px 0 3px -1px rgba(0,0,0,0.55),inset 0 -2px 2px -1px rgba(0,0,0,0.4);border-radius:2px"></div></div><div class="a" style="left:295px;top:317px;width:650px;height:264px;font-family:'Liberation Serif',serif;overflow:hidden"><div class="a" style="left:2px;top:1px;transform-origin:0 0;color:#ffffff;font-size:22.5px;line-height:22px;transform:scaleX(0.84);-webkit-text-stroke:0.3px #ffffff;text-shadow:1px 1px 1px rgba(0,0,0,0.95),1.5px 1.5px 3px rgba(0,0,0,0.55)">A</div><svg class="a" style="left:2.0px;top:22.5px;overflow:visible;filter:drop-shadow(1px 1px 1px rgba(0,0,0,0.9))" width="12" height="13"><path d="M6 12.8 C3.5 9.5 0 7.5 0 3.6 C0 1.5 1.5 0 3.3 0 C4.7 0 5.6 0.9 6 2 C6.4 0.9 7.3 0 8.7 0 C10.5 0 12 1.5 12 3.6 C12 7.5 8.5 9.5 6 12.8 Z" fill="#ffffff"/></svg><div class="a" style="left:11.3px;top:12px;transform-origin:0 0;color:#ffffff;font-size:47px;line-height:47px;transform:scaleX(0.88);-webkit-text-stroke:0.6px #ffffff;text-shadow:1px 1px 1px rgba(0,0,0,0.95),1.5px 1.5px 3px rgba(0,0,0,0.55)">A</div><div class="a" style="left:52px;top:1px;transform-origin:0 0;color:#ffffff;font-size:22.5px;line-height:22px;transform:scaleX(0.84);-webkit-text-stroke:0.3px #ffffff;text-shadow:1px 1px 1px rgba(0,0,0,0.95),1.5px 1.5px 3px rgba(0,0,0,0.55)">2</div><svg class="a" style="left:52.0px;top:22.5px;overflow:visible;filter:drop-shadow(1px 1px 1px rgba(0,0,0,0.9))" width="12" height="13"><path d="M6 12.8 C3.5 9.5 0 7.5 0 3.6 C0 1.5 1.5 0 3.3 0 C4.7 0 5.6 0.9 6 2 C6.4 0.9 7.3 0 8.7 0 C10.5 0 12 1.5 12 3.6 C12 7.5 8.5 9.5 6 12.8 Z" fill="#ffffff"/></svg><div class="a" style="left:63.4px;top:12px;transform-origin:0 0;color:#ffffff;font-size:47px;line-height:47px;transform:scaleX(1.1);-webkit-text-stroke:0.6px #ffffff;text-shadow:1px 1px 1px rgba(0,0,0,0.95),1.5px 1.5px 3px rgba(0,0,0,0.55)">2</div><div class="a" style="left:102px;top:1px;transform-origin:0 0;color:#ffffff;font-size:22.5px;line-height:22px;transform:scaleX(0.84);-webkit-text-stroke:0.3px #ffffff;text-shadow:1px 1px 1px rgba(0,0,0,0.95),1.5px 1.5px 3px rgba(0,0,0,0.55)">3</div><svg class="a" style="left:102.0px;top:22.5px;overflow:visible;filter:drop-shadow(1px 1px 1px rgba(0,0,0,0.9))" width="12" height="13"><path d="M6 12.8 C3.5 9.5 0 7.5 0 3.6 C0 1.5 1.5 0 3.3 0 C4.7 0 5.6 0.9 6 2 C6.4 0.9 7.3 0 8.7 0 C10.5 0 12 1.5 12 3.6 C12 7.5 8.5 9.5 6 12.8 Z" fill="#ffffff"/></svg><div class="a" style="left:114.0px;top:15px;transform-origin:0 0;color:#ffffff;font-size:47px;line-height:47px;transform:scaleX(1.0);-webkit-text-stroke:0.6px #ffffff;text-shadow:1px 1px 1px rgba(0,0,0,0.95),1.5px 1.5px 3px rgba(0,0,0,0.55)">3</div><div class="a" style="left:152px;top:1px;transform-origin:0 0;color:#ffffff;font-size:22.5px;line-height:22px;transform:scaleX(0.84);-webkit-text-stroke:0.3px #ffffff;text-shadow:1px 1px 1px rgba(0,0,0,0.95),1.5px 1.5px 3px rgba(0,0,0,0.55)">4</div><svg class="a" style="left:152.0px;top:22.5px;overflow:visible;filter:drop-shadow(1px 1px 1px rgba(0,0,0,0.9))" width="12" height="13"><path d="M6 12.8 C3.5 9.5 0 7.5 0 3.6 C0 1.5 1.5 0 3.3 0 C4.7 0 5.6 0.9 6 2 C6.4 0.9 7.3 0 8.7 0 C10.5 0 12 1.5 12 3.6 C12 7.5 8.5 9.5 6 12.8 Z" fill="#ffffff"/></svg><div class="a" style="left:164.7px;top:12px;transform-origin:0 0;color:#ffffff;font-size:47px;line-height:47px;transform:scaleX(0.9);-webkit-text-stroke:0.6px #ffffff;text-shadow:1px 1px 1px rgba(0,0,0,0.95),1.5px 1.5px 3px rgba(0,0,0,0.55)">4</div><div class="a" style="left:202px;top:1px;transform-origin:0 0;color:#ffffff;font-size:22.5px;line-height:22px;transform:scaleX(0.84);-webkit-text-stroke:0.3px #ffffff;text-shadow:1px 1px 1px rgba(0,0,0,0.95),1.5px 1.5px 3px rgba(0,0,0,0.55)">5</div><svg class="a" style="left:202.0px;top:22.5px;overflow:visible;filter:drop-shadow(1px 1px 1px rgba(0,0,0,0.9))" width="12" height="13"><path d="M6 12.8 C3.5 9.5 0 7.5 0 3.6 C0 1.5 1.5 0 3.3 0 C4.7 0 5.6 0.9 6 2 C6.4 0.9 7.3 0 8.7 0 C10.5 0 12 1.5 12 3.6 C12 7.5 8.5 9.5 6 12.8 Z" fill="#ffffff"/></svg><div class="a" style="left:214.7px;top:15px;transform-origin:0 0;color:#ffffff;font-size:47px;line-height:47px;transform:scaleX(0.95);-webkit-text-stroke:0.6px #ffffff;text-shadow:1px 1px 1px rgba(0,0,0,0.95),1.5px 1.5px 3px rgba(0,0,0,0.55)">5</div><div class="a" style="left:252px;top:1px;transform-origin:0 0;color:#ffffff;font-size:22.5px;line-height:22px;transform:scaleX(0.84);-webkit-text-stroke:0.3px #ffffff;text-shadow:1px 1px 1px rgba(0,0,0,0.95),1.5px 1.5px 3px rgba(0,0,0,0.55)">6</div><svg class="a" style="left:252.0px;top:22.5px;overflow:visible;filter:drop-shadow(1px 1px 1px rgba(0,0,0,0.9))" width="12" height="13"><path d="M6 12.8 C3.5 9.5 0 7.5 0 3.6 C0 1.5 1.5 0 3.3 0 C4.7 0 5.6 0.9 6 2 C6.4 0.9 7.3 0 8.7 0 C10.5 0 12 1.5 12 3.6 C12 7.5 8.5 9.5 6 12.8 Z" fill="#ffffff"/></svg><div class="a" style="left:265.7px;top:11px;transform-origin:0 0;color:#ffffff;font-size:47px;line-height:47px;transform:scaleX(0.92);-webkit-text-stroke:0.6px #ffffff;text-shadow:1px 1px 1px rgba(0,0,0,0.95),1.5px 1.5px 3px rgba(0,0,0,0.55)">6</div><div class="a" style="left:302px;top:1px;transform-origin:0 0;color:#ffffff;font-size:22.5px;line-height:22px;transform:scaleX(0.84);-webkit-text-stroke:0.3px #ffffff;text-shadow:1px 1px 1px rgba(0,0,0,0.95),1.5px 1.5px 3px rgba(0,0,0,0.55)">7</div><svg class="a" style="left:302.0px;top:22.5px;overflow:visible;filter:drop-shadow(1px 1px 1px rgba(0,0,0,0.9))" width="12" height="13"><path d="M6 12.8 C3.5 9.5 0 7.5 0 3.6 C0 1.5 1.5 0 3.3 0 C4.7 0 5.6 0.9 6 2 C6.4 0.9 7.3 0 8.7 0 C10.5 0 12 1.5 12 3.6 C12 7.5 8.5 9.5 6 12.8 Z" fill="#ffffff"/></svg><div class="a" style="left:314.1px;top:15px;transform-origin:0 0;color:#ffffff;font-size:47px;line-height:47px;transform:scaleX(0.98);-webkit-text-stroke:0.6px #ffffff;text-shadow:1px 1px 1px rgba(0,0,0,0.95),1.5px 1.5px 3px rgba(0,0,0,0.55)">7</div><div class="a" style="left:352px;top:1px;transform-origin:0 0;color:#ffffff;font-size:22.5px;line-height:22px;transform:scaleX(0.84);-webkit-text-stroke:0.3px #ffffff;text-shadow:1px 1px 1px rgba(0,0,0,0.95),1.5px 1.5px 3px rgba(0,0,0,0.55)">8</div><svg class="a" style="left:352.0px;top:22.5px;overflow:visible;filter:drop-shadow(1px 1px 1px rgba(0,0,0,0.9))" width="12" height="13"><path d="M6 12.8 C3.5 9.5 0 7.5 0 3.6 C0 1.5 1.5 0 3.3 0 C4.7 0 5.6 0.9 6 2 C6.4 0.9 7.3 0 8.7 0 C10.5 0 12 1.5 12 3.6 C12 7.5 8.5 9.5 6 12.8 Z" fill="#ffffff"/></svg><div class="a" style="left:363.4px;top:11px;transform-origin:0 0;color:#ffffff;font-size:47px;line-height:47px;transform:scaleX(1.05);-webkit-text-stroke:0.6px #ffffff;text-shadow:1px 1px 1px rgba(0,0,0,0.95),1.5px 1.5px 3px rgba(0,0,0,0.55)">8</div><div class="a" style="left:402px;top:1px;transform-origin:0 0;color:#ffffff;font-size:22.5px;line-height:22px;transform:scaleX(0.84);-webkit-text-stroke:0.3px #ffffff;text-shadow:1px 1px 1px rgba(0,0,0,0.95),1.5px 1.5px 3px rgba(0,0,0,0.55)">9</div><svg class="a" style="left:402.0px;top:22.5px;overflow:visible;filter:drop-shadow(1px 1px 1px rgba(0,0,0,0.9))" width="12" height="13"><path d="M6 12.8 C3.5 9.5 0 7.5 0 3.6 C0 1.5 1.5 0 3.3 0 C4.7 0 5.6 0.9 6 2 C6.4 0.9 7.3 0 8.7 0 C10.5 0 12 1.5 12 3.6 C12 7.5 8.5 9.5 6 12.8 Z" fill="#ffffff"/></svg><div class="a" style="left:413.9px;top:15px;transform-origin:0 0;color:#ffffff;font-size:47px;line-height:47px;transform:scaleX(0.95);-webkit-text-stroke:0.6px #ffffff;text-shadow:1px 1px 1px rgba(0,0,0,0.95),1.5px 1.5px 3px rgba(0,0,0,0.55)">9</div><div class="a" style="left:452px;top:1px;transform-origin:0 0;color:#ffffff;font-size:22.5px;line-height:22px;transform:scaleX(0.84);-webkit-text-stroke:0.3px #ffffff;text-shadow:1px 1px 1px rgba(0,0,0,0.95),1.5px 1.5px 3px rgba(0,0,0,0.55)">T</div><svg class="a" style="left:452.0px;top:22.5px;overflow:visible;filter:drop-shadow(1px 1px 1px rgba(0,0,0,0.9))" width="12" height="13"><path d="M6 12.8 C3.5 9.5 0 7.5 0 3.6 C0 1.5 1.5 0 3.3 0 C4.7 0 5.6 0.9 6 2 C6.4 0.9 7.3 0 8.7 0 C10.5 0 12 1.5 12 3.6 C12 7.5 8.5 9.5 6 12.8 Z" fill="#ffffff"/></svg><div class="a" style="left:464.0px;top:12px;transform-origin:0 0;color:#ffffff;font-size:47px;line-height:47px;transform:scaleX(1.0);-webkit-text-stroke:0.6px #ffffff;text-shadow:1px 1px 1px rgba(0,0,0,0.95),1.5px 1.5px 3px rgba(0,0,0,0.55)">T</div><div class="a" style="left:502px;top:1px;transform-origin:0 0;color:#ffffff;font-size:22.5px;line-height:22px;transform:scaleX(0.84);-webkit-text-stroke:0.3px #ffffff;text-shadow:1px 1px 1px rgba(0,0,0,0.95),1.5px 1.5px 3px rgba(0,0,0,0.55)">J</div><svg class="a" style="left:502.0px;top:22.5px;overflow:visible;filter:drop-shadow(1px 1px 1px rgba(0,0,0,0.9))" width="12" height="13"><path d="M6 12.8 C3.5 9.5 0 7.5 0 3.6 C0 1.5 1.5 0 3.3 0 C4.7 0 5.6 0.9 6 2 C6.4 0.9 7.3 0 8.7 0 C10.5 0 12 1.5 12 3.6 C12 7.5 8.5 9.5 6 12.8 Z" fill="#ffffff"/></svg><div class="a" style="left:516.0px;top:15px;transform-origin:0 0;color:#ffffff;font-size:47px;line-height:47px;transform:scaleX(0.95);-webkit-text-stroke:0.6px #ffffff;text-shadow:1px 1px 1px rgba(0,0,0,0.95),1.5px 1.5px 3px rgba(0,0,0,0.55)">J</div><div class="a" style="left:552px;top:1px;transform-origin:0 0;color:#ffffff;font-size:22.5px;line-height:22px;transform:scaleX(0.84);-webkit-text-stroke:0.3px #ffffff;text-shadow:1px 1px 1px rgba(0,0,0,0.95),1.5px 1.5px 3px rgba(0,0,0,0.55)">Q</div><svg class="a" style="left:552.0px;top:22.5px;overflow:visible;filter:drop-shadow(1px 1px 1px rgba(0,0,0,0.9))" width="12" height="13"><path d="M6 12.8 C3.5 9.5 0 7.5 0 3.6 C0 1.5 1.5 0 3.3 0 C4.7 0 5.6 0.9 6 2 C6.4 0.9 7.3 0 8.7 0 C10.5 0 12 1.5 12 3.6 C12 7.5 8.5 9.5 6 12.8 Z" fill="#ffffff"/></svg><div class="a" style="left:564.0px;top:12px;transform-origin:0 0;color:#ffffff;font-size:47px;line-height:47px;transform:scaleX(0.95);-webkit-text-stroke:0.6px #ffffff;text-shadow:1px 1px 1px rgba(0,0,0,0.95),1.5px 1.5px 3px rgba(0,0,0,0.55)">Q</div><div class="a" style="left:602px;top:1px;transform-origin:0 0;color:#ffffff;font-size:22.5px;line-height:22px;transform:scaleX(0.84);-webkit-text-stroke:0.3px #ffffff;text-shadow:1px 1px 1px rgba(0,0,0,0.95),1.5px 1.5px 3px rgba(0,0,0,0.55)">K</div><svg class="a" style="left:602.0px;top:22.5px;overflow:visible;filter:drop-shadow(1px 1px 1px rgba(0,0,0,0.9))" width="12" height="13"><path d="M6 12.8 C3.5 9.5 0 7.5 0 3.6 C0 1.5 1.5 0 3.3 0 C4.7 0 5.6 0.9 6 2 C6.4 0.9 7.3 0 8.7 0 C10.5 0 12 1.5 12 3.6 C12 7.5 8.5 9.5 6 12.8 Z" fill="#ffffff"/></svg><div class="a" style="left:613.0px;top:12px;transform-origin:0 0;color:#ffffff;font-size:47px;line-height:47px;transform:scaleX(0.95);-webkit-text-stroke:0.6px #ffffff;text-shadow:1px 1px 1px rgba(0,0,0,0.95),1.5px 1.5px 3px rgba(0,0,0,0.55)">K</div><div class="a" style="left:2px;top:67px;transform-origin:0 0;color:#ffffff;font-size:22.5px;line-height:22px;transform:scaleX(0.84);-webkit-text-stroke:0.3px #ffffff;text-shadow:1px 1px 1px rgba(0,0,0,0.95),1.5px 1.5px 3px rgba(0,0,0,0.55)">A</div><svg class="a" style="left:1.8px;top:88.7px;overflow:visible;filter:drop-shadow(1px 1px 1px rgba(0,0,0,0.9))" width="13" height="13"><path d="M6.5 0 C8.3 0 9.5 1.4 9.5 3 C9.5 4 9 4.8 8.4 5.3 C8.9 5.1 9.3 5 9.8 5 C11.6 5 13 6.3 13 8 C13 9.8 11.6 11 9.9 11 C8.7 11 7.8 10.4 7.3 9.6 C7.4 10.8 8 11.8 9.5 13 L3.5 13 C5 11.8 5.6 10.8 5.7 9.6 C5.2 10.4 4.3 11 3.1 11 C1.4 11 0 9.8 0 8 C0 6.3 1.4 5 3.2 5 C3.7 5 4.1 5.1 4.6 5.3 C4 4.8 3.5 4 3.5 3 C3.5 1.4 4.7 0 6.5 0 Z" fill="#ffffff"/></svg><div class="a" style="left:11.3px;top:78px;transform-origin:0 0;color:#ffffff;font-size:47px;line-height:47px;transform:scaleX(0.88);-webkit-text-stroke:0.6px #ffffff;text-shadow:1px 1px 1px rgba(0,0,0,0.95),1.5px 1.5px 3px rgba(0,0,0,0.55)">A</div><div class="a" style="left:52px;top:67px;transform-origin:0 0;color:#ffffff;font-size:22.5px;line-height:22px;transform:scaleX(0.84);-webkit-text-stroke:0.3px #ffffff;text-shadow:1px 1px 1px rgba(0,0,0,0.95),1.5px 1.5px 3px rgba(0,0,0,0.55)">2</div><svg class="a" style="left:51.8px;top:88.7px;overflow:visible;filter:drop-shadow(1px 1px 1px rgba(0,0,0,0.9))" width="13" height="13"><path d="M6.5 0 C8.3 0 9.5 1.4 9.5 3 C9.5 4 9 4.8 8.4 5.3 C8.9 5.1 9.3 5 9.8 5 C11.6 5 13 6.3 13 8 C13 9.8 11.6 11 9.9 11 C8.7 11 7.8 10.4 7.3 9.6 C7.4 10.8 8 11.8 9.5 13 L3.5 13 C5 11.8 5.6 10.8 5.7 9.6 C5.2 10.4 4.3 11 3.1 11 C1.4 11 0 9.8 0 8 C0 6.3 1.4 5 3.2 5 C3.7 5 4.1 5.1 4.6 5.3 C4 4.8 3.5 4 3.5 3 C3.5 1.4 4.7 0 6.5 0 Z" fill="#ffffff"/></svg><div class="a" style="left:63.4px;top:78px;transform-origin:0 0;color:#ffffff;font-size:47px;line-height:47px;transform:scaleX(1.1);-webkit-text-stroke:0.6px #ffffff;text-shadow:1px 1px 1px rgba(0,0,0,0.95),1.5px 1.5px 3px rgba(0,0,0,0.55)">2</div><div class="a" style="left:102px;top:67px;transform-origin:0 0;color:#ffffff;font-size:22.5px;line-height:22px;transform:scaleX(0.84);-webkit-text-stroke:0.3px #ffffff;text-shadow:1px 1px 1px rgba(0,0,0,0.95),1.5px 1.5px 3px rgba(0,0,0,0.55)">3</div><svg class="a" style="left:101.8px;top:88.7px;overflow:visible;filter:drop-shadow(1px 1px 1px rgba(0,0,0,0.9))" width="13" height="13"><path d="M6.5 0 C8.3 0 9.5 1.4 9.5 3 C9.5 4 9 4.8 8.4 5.3 C8.9 5.1 9.3 5 9.8 5 C11.6 5 13 6.3 13 8 C13 9.8 11.6 11 9.9 11 C8.7 11 7.8 10.4 7.3 9.6 C7.4 10.8 8 11.8 9.5 13 L3.5 13 C5 11.8 5.6 10.8 5.7 9.6 C5.2 10.4 4.3 11 3.1 11 C1.4 11 0 9.8 0 8 C0 6.3 1.4 5 3.2 5 C3.7 5 4.1 5.1 4.6 5.3 C4 4.8 3.5 4 3.5 3 C3.5 1.4 4.7 0 6.5 0 Z" fill="#ffffff"/></svg><div class="a" style="left:114.0px;top:81px;transform-origin:0 0;color:#ffffff;font-size:47px;line-height:47px;transform:scaleX(1.0);-webkit-text-stroke:0.6px #ffffff;text-shadow:1px 1px 1px rgba(0,0,0,0.95),1.5px 1.5px 3px rgba(0,0,0,0.55)">3</div><div class="a" style="left:152px;top:67px;transform-origin:0 0;color:#ffffff;font-size:22.5px;line-height:22px;transform:scaleX(0.84);-webkit-text-stroke:0.3px #ffffff;text-shadow:1px 1px 1px rgba(0,0,0,0.95),1.5px 1.5px 3px rgba(0,0,0,0.55)">4</div><svg class="a" style="left:151.8px;top:88.7px;overflow:visible;filter:drop-shadow(1px 1px 1px rgba(0,0,0,0.9))" width="13" height="13"><path d="M6.5 0 C8.3 0 9.5 1.4 9.5 3 C9.5 4 9 4.8 8.4 5.3 C8.9 5.1 9.3 5 9.8 5 C11.6 5 13 6.3 13 8 C13 9.8 11.6 11 9.9 11 C8.7 11 7.8 10.4 7.3 9.6 C7.4 10.8 8 11.8 9.5 13 L3.5 13 C5 11.8 5.6 10.8 5.7 9.6 C5.2 10.4 4.3 11 3.1 11 C1.4 11 0 9.8 0 8 C0 6.3 1.4 5 3.2 5 C3.7 5 4.1 5.1 4.6 5.3 C4 4.8 3.5 4 3.5 3 C3.5 1.4 4.7 0 6.5 0 Z" fill="#ffffff"/></svg><div class="a" style="left:164.7px;top:78px;transform-origin:0 0;color:#ffffff;font-size:47px;line-height:47px;transform:scaleX(0.9);-webkit-text-stroke:0.6px #ffffff;text-shadow:1px 1px 1px rgba(0,0,0,0.95),1.5px 1.5px 3px rgba(0,0,0,0.55)">4</div><div class="a" style="left:202px;top:67px;transform-origin:0 0;color:#ffffff;font-size:22.5px;line-height:22px;transform:scaleX(0.84);-webkit-text-stroke:0.3px #ffffff;text-shadow:1px 1px 1px rgba(0,0,0,0.95),1.5px 1.5px 3px rgba(0,0,0,0.55)">5</div><svg class="a" style="left:201.8px;top:88.7px;overflow:visible;filter:drop-shadow(1px 1px 1px rgba(0,0,0,0.9))" width="13" height="13"><path d="M6.5 0 C8.3 0 9.5 1.4 9.5 3 C9.5 4 9 4.8 8.4 5.3 C8.9 5.1 9.3 5 9.8 5 C11.6 5 13 6.3 13 8 C13 9.8 11.6 11 9.9 11 C8.7 11 7.8 10.4 7.3 9.6 C7.4 10.8 8 11.8 9.5 13 L3.5 13 C5 11.8 5.6 10.8 5.7 9.6 C5.2 10.4 4.3 11 3.1 11 C1.4 11 0 9.8 0 8 C0 6.3 1.4 5 3.2 5 C3.7 5 4.1 5.1 4.6 5.3 C4 4.8 3.5 4 3.5 3 C3.5 1.4 4.7 0 6.5 0 Z" fill="#ffffff"/></svg><div class="a" style="left:214.7px;top:81px;transform-origin:0 0;color:#ffffff;font-size:47px;line-height:47px;transform:scaleX(0.95);-webkit-text-stroke:0.6px #ffffff;text-shadow:1px 1px 1px rgba(0,0,0,0.95),1.5px 1.5px 3px rgba(0,0,0,0.55)">5</div><div class="a" style="left:252px;top:67px;transform-origin:0 0;color:#ffffff;font-size:22.5px;line-height:22px;transform:scaleX(0.84);-webkit-text-stroke:0.3px #ffffff;text-shadow:1px 1px 1px rgba(0,0,0,0.95),1.5px 1.5px 3px rgba(0,0,0,0.55)">6</div><svg class="a" style="left:251.8px;top:88.7px;overflow:visible;filter:drop-shadow(1px 1px 1px rgba(0,0,0,0.9))" width="13" height="13"><path d="M6.5 0 C8.3 0 9.5 1.4 9.5 3 C9.5 4 9 4.8 8.4 5.3 C8.9 5.1 9.3 5 9.8 5 C11.6 5 13 6.3 13 8 C13 9.8 11.6 11 9.9 11 C8.7 11 7.8 10.4 7.3 9.6 C7.4 10.8 8 11.8 9.5 13 L3.5 13 C5 11.8 5.6 10.8 5.7 9.6 C5.2 10.4 4.3 11 3.1 11 C1.4 11 0 9.8 0 8 C0 6.3 1.4 5 3.2 5 C3.7 5 4.1 5.1 4.6 5.3 C4 4.8 3.5 4 3.5 3 C3.5 1.4 4.7 0 6.5 0 Z" fill="#ffffff"/></svg><div class="a" style="left:265.7px;top:77px;transform-origin:0 0;color:#ffffff;font-size:47px;line-height:47px;transform:scaleX(0.92);-webkit-text-stroke:0.6px #ffffff;text-shadow:1px 1px 1px rgba(0,0,0,0.95),1.5px 1.5px 3px rgba(0,0,0,0.55)">6</div><div class="a" style="left:302px;top:67px;transform-origin:0 0;color:#ffffff;font-size:22.5px;line-height:22px;transform:scaleX(0.84);-webkit-text-stroke:0.3px #ffffff;text-shadow:1px 1px 1px rgba(0,0,0,0.95),1.5px 1.5px 3px rgba(0,0,0,0.55)">7</div><svg class="a" style="left:301.8px;top:88.7px;overflow:visible;filter:drop-shadow(1px 1px 1px rgba(0,0,0,0.9))" width="13" height="13"><path d="M6.5 0 C8.3 0 9.5 1.4 9.5 3 C9.5 4 9 4.8 8.4 5.3 C8.9 5.1 9.3 5 9.8 5 C11.6 5 13 6.3 13 8 C13 9.8 11.6 11 9.9 11 C8.7 11 7.8 10.4 7.3 9.6 C7.4 10.8 8 11.8 9.5 13 L3.5 13 C5 11.8 5.6 10.8 5.7 9.6 C5.2 10.4 4.3 11 3.1 11 C1.4 11 0 9.8 0 8 C0 6.3 1.4 5 3.2 5 C3.7 5 4.1 5.1 4.6 5.3 C4 4.8 3.5 4 3.5 3 C3.5 1.4 4.7 0 6.5 0 Z" fill="#ffffff"/></svg><div class="a" style="left:314.1px;top:81px;transform-origin:0 0;color:#ffffff;font-size:47px;line-height:47px;transform:scaleX(0.98);-webkit-text-stroke:0.6px #ffffff;text-shadow:1px 1px 1px rgba(0,0,0,0.95),1.5px 1.5px 3px rgba(0,0,0,0.55)">7</div><div class="a" style="left:352px;top:67px;transform-origin:0 0;color:#ffffff;font-size:22.5px;line-height:22px;transform:scaleX(0.84);-webkit-text-stroke:0.3px #ffffff;text-shadow:1px 1px 1px rgba(0,0,0,0.95),1.5px 1.5px 3px rgba(0,0,0,0.55)">8</div><svg class="a" style="left:351.8px;top:88.7px;overflow:visible;filter:drop-shadow(1px 1px 1px rgba(0,0,0,0.9))" width="13" height="13"><path d="M6.5 0 C8.3 0 9.5 1.4 9.5 3 C9.5 4 9 4.8 8.4 5.3 C8.9 5.1 9.3 5 9.8 5 C11.6 5 13 6.3 13 8 C13 9.8 11.6 11 9.9 11 C8.7 11 7.8 10.4 7.3 9.6 C7.4 10.8 8 11.8 9.5 13 L3.5 13 C5 11.8 5.6 10.8 5.7 9.6 C5.2 10.4 4.3 11 3.1 11 C1.4 11 0 9.8 0 8 C0 6.3 1.4 5 3.2 5 C3.7 5 4.1 5.1 4.6 5.3 C4 4.8 3.5 4 3.5 3 C3.5 1.4 4.7 0 6.5 0 Z" fill="#ffffff"/></svg><div class="a" style="left:363.4px;top:77px;transform-origin:0 0;color:#ffffff;font-size:47px;line-height:47px;transform:scaleX(1.05);-webkit-text-stroke:0.6px #ffffff;text-shadow:1px 1px 1px rgba(0,0,0,0.95),1.5px 1.5px 3px rgba(0,0,0,0.55)">8</div><div class="a" style="left:402px;top:67px;transform-origin:0 0;color:#ffffff;font-size:22.5px;line-height:22px;transform:scaleX(0.84);-webkit-text-stroke:0.3px #ffffff;text-shadow:1px 1px 1px rgba(0,0,0,0.95),1.5px 1.5px 3px rgba(0,0,0,0.55)">9</div><svg class="a" style="left:401.8px;top:88.7px;overflow:visible;filter:drop-shadow(1px 1px 1px rgba(0,0,0,0.9))" width="13" height="13"><path d="M6.5 0 C8.3 0 9.5 1.4 9.5 3 C9.5 4 9 4.8 8.4 5.3 C8.9 5.1 9.3 5 9.8 5 C11.6 5 13 6.3 13 8 C13 9.8 11.6 11 9.9 11 C8.7 11 7.8 10.4 7.3 9.6 C7.4 10.8 8 11.8 9.5 13 L3.5 13 C5 11.8 5.6 10.8 5.7 9.6 C5.2 10.4 4.3 11 3.1 11 C1.4 11 0 9.8 0 8 C0 6.3 1.4 5 3.2 5 C3.7 5 4.1 5.1 4.6 5.3 C4 4.8 3.5 4 3.5 3 C3.5 1.4 4.7 0 6.5 0 Z" fill="#ffffff"/></svg><div class="a" style="left:413.9px;top:81px;transform-origin:0 0;color:#ffffff;font-size:47px;line-height:47px;transform:scaleX(0.95);-webkit-text-stroke:0.6px #ffffff;text-shadow:1px 1px 1px rgba(0,0,0,0.95),1.5px 1.5px 3px rgba(0,0,0,0.55)">9</div><div class="a" style="left:452px;top:67px;transform-origin:0 0;color:#ffffff;font-size:22.5px;line-height:22px;transform:scaleX(0.84);-webkit-text-stroke:0.3px #ffffff;text-shadow:1px 1px 1px rgba(0,0,0,0.95),1.5px 1.5px 3px rgba(0,0,0,0.55)">T</div><svg class="a" style="left:451.8px;top:88.7px;overflow:visible;filter:drop-shadow(1px 1px 1px rgba(0,0,0,0.9))" width="13" height="13"><path d="M6.5 0 C8.3 0 9.5 1.4 9.5 3 C9.5 4 9 4.8 8.4 5.3 C8.9 5.1 9.3 5 9.8 5 C11.6 5 13 6.3 13 8 C13 9.8 11.6 11 9.9 11 C8.7 11 7.8 10.4 7.3 9.6 C7.4 10.8 8 11.8 9.5 13 L3.5 13 C5 11.8 5.6 10.8 5.7 9.6 C5.2 10.4 4.3 11 3.1 11 C1.4 11 0 9.8 0 8 C0 6.3 1.4 5 3.2 5 C3.7 5 4.1 5.1 4.6 5.3 C4 4.8 3.5 4 3.5 3 C3.5 1.4 4.7 0 6.5 0 Z" fill="#ffffff"/></svg><div class="a" style="left:464.0px;top:78px;transform-origin:0 0;color:#ffffff;font-size:47px;line-height:47px;transform:scaleX(1.0);-webkit-text-stroke:0.6px #ffffff;text-shadow:1px 1px 1px rgba(0,0,0,0.95),1.5px 1.5px 3px rgba(0,0,0,0.55)">T</div><div class="a" style="left:502px;top:67px;transform-origin:0 0;color:#ffffff;font-size:22.5px;line-height:22px;transform:scaleX(0.84);-webkit-text-stroke:0.3px #ffffff;text-shadow:1px 1px 1px rgba(0,0,0,0.95),1.5px 1.5px 3px rgba(0,0,0,0.55)">J</div><svg class="a" style="left:501.8px;top:88.7px;overflow:visible;filter:drop-shadow(1px 1px 1px rgba(0,0,0,0.9))" width="13" height="13"><path d="M6.5 0 C8.3 0 9.5 1.4 9.5 3 C9.5 4 9 4.8 8.4 5.3 C8.9 5.1 9.3 5 9.8 5 C11.6 5 13 6.3 13 8 C13 9.8 11.6 11 9.9 11 C8.7 11 7.8 10.4 7.3 9.6 C7.4 10.8 8 11.8 9.5 13 L3.5 13 C5 11.8 5.6 10.8 5.7 9.6 C5.2 10.4 4.3 11 3.1 11 C1.4 11 0 9.8 0 8 C0 6.3 1.4 5 3.2 5 C3.7 5 4.1 5.1 4.6 5.3 C4 4.8 3.5 4 3.5 3 C3.5 1.4 4.7 0 6.5 0 Z" fill="#ffffff"/></svg><div class="a" style="left:516.0px;top:81px;transform-origin:0 0;color:#ffffff;font-size:47px;line-height:47px;transform:scaleX(0.95);-webkit-text-stroke:0.6px #ffffff;text-shadow:1px 1px 1px rgba(0,0,0,0.95),1.5px 1.5px 3px rgba(0,0,0,0.55)">J</div><div class="a" style="left:552px;top:67px;transform-origin:0 0;color:#ffffff;font-size:22.5px;line-height:22px;transform:scaleX(0.84);-webkit-text-stroke:0.3px #ffffff;text-shadow:1px 1px 1px rgba(0,0,0,0.95),1.5px 1.5px 3px rgba(0,0,0,0.55)">Q</div><svg class="a" style="left:551.8px;top:88.7px;overflow:visible;filter:drop-shadow(1px 1px 1px rgba(0,0,0,0.9))" width="13" height="13"><path d="M6.5 0 C8.3 0 9.5 1.4 9.5 3 C9.5 4 9 4.8 8.4 5.3 C8.9 5.1 9.3 5 9.8 5 C11.6 5 13 6.3 13 8 C13 9.8 11.6 11 9.9 11 C8.7 11 7.8 10.4 7.3 9.6 C7.4 10.8 8 11.8 9.5 13 L3.5 13 C5 11.8 5.6 10.8 5.7 9.6 C5.2 10.4 4.3 11 3.1 11 C1.4 11 0 9.8 0 8 C0 6.3 1.4 5 3.2 5 C3.7 5 4.1 5.1 4.6 5.3 C4 4.8 3.5 4 3.5 3 C3.5 1.4 4.7 0 6.5 0 Z" fill="#ffffff"/></svg><div class="a" style="left:564.0px;top:78px;transform-origin:0 0;color:#ffffff;font-size:47px;line-height:47px;transform:scaleX(0.95);-webkit-text-stroke:0.6px #ffffff;text-shadow:1px 1px 1px rgba(0,0,0,0.95),1.5px 1.5px 3px rgba(0,0,0,0.55)">Q</div><div class="a" style="left:602px;top:67px;transform-origin:0 0;color:#ffffff;font-size:22.5px;line-height:22px;transform:scaleX(0.84);-webkit-text-stroke:0.3px #ffffff;text-shadow:1px 1px 1px rgba(0,0,0,0.95),1.5px 1.5px 3px rgba(0,0,0,0.55)">K</div><svg class="a" style="left:601.8px;top:88.7px;overflow:visible;filter:drop-shadow(1px 1px 1px rgba(0,0,0,0.9))" width="13" height="13"><path d="M6.5 0 C8.3 0 9.5 1.4 9.5 3 C9.5 4 9 4.8 8.4 5.3 C8.9 5.1 9.3 5 9.8 5 C11.6 5 13 6.3 13 8 C13 9.8 11.6 11 9.9 11 C8.7 11 7.8 10.4 7.3 9.6 C7.4 10.8 8 11.8 9.5 13 L3.5 13 C5 11.8 5.6 10.8 5.7 9.6 C5.2 10.4 4.3 11 3.1 11 C1.4 11 0 9.8 0 8 C0 6.3 1.4 5 3.2 5 C3.7 5 4.1 5.1 4.6 5.3 C4 4.8 3.5 4 3.5 3 C3.5 1.4 4.7 0 6.5 0 Z" fill="#ffffff"/></svg><div class="a" style="left:613.0px;top:78px;transform-origin:0 0;color:#ffffff;font-size:47px;line-height:47px;transform:scaleX(0.95);-webkit-text-stroke:0.6px #ffffff;text-shadow:1px 1px 1px rgba(0,0,0,0.95),1.5px 1.5px 3px rgba(0,0,0,0.55)">K</div><div class="a" style="left:2px;top:133px;transform-origin:0 0;color:#ffffff;font-size:22.5px;line-height:22px;transform:scaleX(0.84);-webkit-text-stroke:0.3px #ffffff;text-shadow:1px 1px 1px rgba(0,0,0,0.95),1.5px 1.5px 3px rgba(0,0,0,0.55)">A</div><svg class="a" style="left:3.4px;top:155.6px;overflow:visible;filter:drop-shadow(1px 1px 1px rgba(0,0,0,0.9))" width="10" height="12"><path d="M5 0 L10 6 L5 12 L0 6 Z" fill="#ffffff"/></svg><div class="a" style="left:11.3px;top:144px;transform-origin:0 0;color:#ffffff;font-size:47px;line-height:47px;transform:scaleX(0.88);-webkit-text-stroke:0.6px #ffffff;text-shadow:1px 1px 1px rgba(0,0,0,0.95),1.5px 1.5px 3px rgba(0,0,0,0.55)">A</div><div class="a" style="left:52px;top:133px;transform-origin:0 0;color:#ffffff;font-size:22.5px;line-height:22px;transform:scaleX(0.84);-webkit-text-stroke:0.3px #ffffff;text-shadow:1px 1px 1px rgba(0,0,0,0.95),1.5px 1.5px 3px rgba(0,0,0,0.55)">2</div><svg class="a" style="left:53.4px;top:155.6px;overflow:visible;filter:drop-shadow(1px 1px 1px rgba(0,0,0,0.9))" width="10" height="12"><path d="M5 0 L10 6 L5 12 L0 6 Z" fill="#ffffff"/></svg><div class="a" style="left:63.4px;top:144px;transform-origin:0 0;color:#ffffff;font-size:47px;line-height:47px;transform:scaleX(1.1);-webkit-text-stroke:0.6px #ffffff;text-shadow:1px 1px 1px rgba(0,0,0,0.95),1.5px 1.5px 3px rgba(0,0,0,0.55)">2</div><div class="a" style="left:102px;top:133px;transform-origin:0 0;color:#ffffff;font-size:22.5px;line-height:22px;transform:scaleX(0.84);-webkit-text-stroke:0.3px #ffffff;text-shadow:1px 1px 1px rgba(0,0,0,0.95),1.5px 1.5px 3px rgba(0,0,0,0.55)">3</div><svg class="a" style="left:103.4px;top:155.6px;overflow:visible;filter:drop-shadow(1px 1px 1px rgba(0,0,0,0.9))" width="10" height="12"><path d="M5 0 L10 6 L5 12 L0 6 Z" fill="#ffffff"/></svg><div class="a" style="left:114.0px;top:147px;transform-origin:0 0;color:#ffffff;font-size:47px;line-height:47px;transform:scaleX(1.0);-webkit-text-stroke:0.6px #ffffff;text-shadow:1px 1px 1px rgba(0,0,0,0.95),1.5px 1.5px 3px rgba(0,0,0,0.55)">3</div><div class="a" style="left:152px;top:133px;transform-origin:0 0;color:#ffffff;font-size:22.5px;line-height:22px;transform:scaleX(0.84);-webkit-text-stroke:0.3px #ffffff;text-shadow:1px 1px 1px rgba(0,0,0,0.95),1.5px 1.5px 3px rgba(0,0,0,0.55)">4</div><svg class="a" style="left:153.4px;top:155.6px;overflow:visible;filter:drop-shadow(1px 1px 1px rgba(0,0,0,0.9))" width="10" height="12"><path d="M5 0 L10 6 L5 12 L0 6 Z" fill="#ffffff"/></svg><div class="a" style="left:164.7px;top:144px;transform-origin:0 0;color:#ffffff;font-size:47px;line-height:47px;transform:scaleX(0.9);-webkit-text-stroke:0.6px #ffffff;text-shadow:1px 1px 1px rgba(0,0,0,0.95),1.5px 1.5px 3px rgba(0,0,0,0.55)">4</div><div class="a" style="left:202px;top:133px;transform-origin:0 0;color:#ffffff;font-size:22.5px;line-height:22px;transform:scaleX(0.84);-webkit-text-stroke:0.3px #ffffff;text-shadow:1px 1px 1px rgba(0,0,0,0.95),1.5px 1.5px 3px rgba(0,0,0,0.55)">5</div><svg class="a" style="left:203.4px;top:155.6px;overflow:visible;filter:drop-shadow(1px 1px 1px rgba(0,0,0,0.9))" width="10" height="12"><path d="M5 0 L10 6 L5 12 L0 6 Z" fill="#ffffff"/></svg><div class="a" style="left:214.7px;top:147px;transform-origin:0 0;color:#ffffff;font-size:47px;line-height:47px;transform:scaleX(0.95);-webkit-text-stroke:0.6px #ffffff;text-shadow:1px 1px 1px rgba(0,0,0,0.95),1.5px 1.5px 3px rgba(0,0,0,0.55)">5</div><div class="a" style="left:252px;top:133px;transform-origin:0 0;color:#ffffff;font-size:22.5px;line-height:22px;transform:scaleX(0.84);-webkit-text-stroke:0.3px #ffffff;text-shadow:1px 1px 1px rgba(0,0,0,0.95),1.5px 1.5px 3px rgba(0,0,0,0.55)">6</div><svg class="a" style="left:253.4px;top:155.6px;overflow:visible;filter:drop-shadow(1px 1px 1px rgba(0,0,0,0.9))" width="10" height="12"><path d="M5 0 L10 6 L5 12 L0 6 Z" fill="#ffffff"/></svg><div class="a" style="left:265.7px;top:143px;transform-origin:0 0;color:#ffffff;font-size:47px;line-height:47px;transform:scaleX(0.92);-webkit-text-stroke:0.6px #ffffff;text-shadow:1px 1px 1px rgba(0,0,0,0.95),1.5px 1.5px 3px rgba(0,0,0,0.55)">6</div><div class="a" style="left:302px;top:133px;transform-origin:0 0;color:#ffffff;font-size:22.5px;line-height:22px;transform:scaleX(0.84);-webkit-text-stroke:0.3px #ffffff;text-shadow:1px 1px 1px rgba(0,0,0,0.95),1.5px 1.5px 3px rgba(0,0,0,0.55)">7</div><svg class="a" style="left:303.4px;top:155.6px;overflow:visible;filter:drop-shadow(1px 1px 1px rgba(0,0,0,0.9))" width="10" height="12"><path d="M5 0 L10 6 L5 12 L0 6 Z" fill="#ffffff"/></svg><div class="a" style="left:314.1px;top:147px;transform-origin:0 0;color:#ffffff;font-size:47px;line-height:47px;transform:scaleX(0.98);-webkit-text-stroke:0.6px #ffffff;text-shadow:1px 1px 1px rgba(0,0,0,0.95),1.5px 1.5px 3px rgba(0,0,0,0.55)">7</div><div class="a" style="left:352px;top:133px;transform-origin:0 0;color:#ffffff;font-size:22.5px;line-height:22px;transform:scaleX(0.84);-webkit-text-stroke:0.3px #ffffff;text-shadow:1px 1px 1px rgba(0,0,0,0.95),1.5px 1.5px 3px rgba(0,0,0,0.55)">8</div><svg class="a" style="left:353.4px;top:155.6px;overflow:visible;filter:drop-shadow(1px 1px 1px rgba(0,0,0,0.9))" width="10" height="12"><path d="M5 0 L10 6 L5 12 L0 6 Z" fill="#ffffff"/></svg><div class="a" style="left:363.4px;top:143px;transform-origin:0 0;color:#ffffff;font-size:47px;line-height:47px;transform:scaleX(1.05);-webkit-text-stroke:0.6px #ffffff;text-shadow:1px 1px 1px rgba(0,0,0,0.95),1.5px 1.5px 3px rgba(0,0,0,0.55)">8</div><div class="a" style="left:402px;top:133px;transform-origin:0 0;color:#ffffff;font-size:22.5px;line-height:22px;transform:scaleX(0.84);-webkit-text-stroke:0.3px #ffffff;text-shadow:1px 1px 1px rgba(0,0,0,0.95),1.5px 1.5px 3px rgba(0,0,0,0.55)">9</div><svg class="a" style="left:403.4px;top:155.6px;overflow:visible;filter:drop-shadow(1px 1px 1px rgba(0,0,0,0.9))" width="10" height="12"><path d="M5 0 L10 6 L5 12 L0 6 Z" fill="#ffffff"/></svg><div class="a" style="left:413.9px;top:147px;transform-origin:0 0;color:#ffffff;font-size:47px;line-height:47px;transform:scaleX(0.95);-webkit-text-stroke:0.6px #ffffff;text-shadow:1px 1px 1px rgba(0,0,0,0.95),1.5px 1.5px 3px rgba(0,0,0,0.55)">9</div><div class="a" style="left:452px;top:133px;transform-origin:0 0;color:#ffffff;font-size:22.5px;line-height:22px;transform:scaleX(0.84);-webkit-text-stroke:0.3px #ffffff;text-shadow:1px 1px 1px rgba(0,0,0,0.95),1.5px 1.5px 3px rgba(0,0,0,0.55)">T</div><svg class="a" style="left:453.4px;top:155.6px;overflow:visible;filter:drop-shadow(1px 1px 1px rgba(0,0,0,0.9))" width="10" height="12"><path d="M5 0 L10 6 L5 12 L0 6 Z" fill="#ffffff"/></svg><div class="a" style="left:464.0px;top:144px;transform-origin:0 0;color:#ffffff;font-size:47px;line-height:47px;transform:scaleX(1.0);-webkit-text-stroke:0.6px #ffffff;text-shadow:1px 1px 1px rgba(0,0,0,0.95),1.5px 1.5px 3px rgba(0,0,0,0.55)">T</div><div class="a" style="left:502px;top:133px;transform-origin:0 0;color:#ffffff;font-size:22.5px;line-height:22px;transform:scaleX(0.84);-webkit-text-stroke:0.3px #ffffff;text-shadow:1px 1px 1px rgba(0,0,0,0.95),1.5px 1.5px 3px rgba(0,0,0,0.55)">J</div><svg class="a" style="left:503.4px;top:155.6px;overflow:visible;filter:drop-shadow(1px 1px 1px rgba(0,0,0,0.9))" width="10" height="12"><path d="M5 0 L10 6 L5 12 L0 6 Z" fill="#ffffff"/></svg><div class="a" style="left:516.0px;top:147px;transform-origin:0 0;color:#ffffff;font-size:47px;line-height:47px;transform:scaleX(0.95);-webkit-text-stroke:0.6px #ffffff;text-shadow:1px 1px 1px rgba(0,0,0,0.95),1.5px 1.5px 3px rgba(0,0,0,0.55)">J</div><div class="a" style="left:552px;top:133px;transform-origin:0 0;color:#ffffff;font-size:22.5px;line-height:22px;transform:scaleX(0.84);-webkit-text-stroke:0.3px #ffffff;text-shadow:1px 1px 1px rgba(0,0,0,0.95),1.5px 1.5px 3px rgba(0,0,0,0.55)">Q</div><svg class="a" style="left:553.4px;top:155.6px;overflow:visible;filter:drop-shadow(1px 1px 1px rgba(0,0,0,0.9))" width="10" height="12"><path d="M5 0 L10 6 L5 12 L0 6 Z" fill="#ffffff"/></svg><div class="a" style="left:564.0px;top:144px;transform-origin:0 0;color:#ffffff;font-size:47px;line-height:47px;transform:scaleX(0.95);-webkit-text-stroke:0.6px #ffffff;text-shadow:1px 1px 1px rgba(0,0,0,0.95),1.5px 1.5px 3px rgba(0,0,0,0.55)">Q</div><div class="a" style="left:602px;top:133px;transform-origin:0 0;color:#ffffff;font-size:22.5px;line-height:22px;transform:scaleX(0.84);-webkit-text-stroke:0.3px #ffffff;text-shadow:1px 1px 1px rgba(0,0,0,0.95),1.5px 1.5px 3px rgba(0,0,0,0.55)">K</div><svg class="a" style="left:603.4px;top:155.6px;overflow:visible;filter:drop-shadow(1px 1px 1px rgba(0,0,0,0.9))" width="10" height="12"><path d="M5 0 L10 6 L5 12 L0 6 Z" fill="#ffffff"/></svg><div class="a" style="left:613.0px;top:144px;transform-origin:0 0;color:#ffffff;font-size:47px;line-height:47px;transform:scaleX(0.95);-webkit-text-stroke:0.6px #ffffff;text-shadow:1px 1px 1px rgba(0,0,0,0.95),1.5px 1.5px 3px rgba(0,0,0,0.55)">K</div><div class="a" style="left:2px;top:199px;transform-origin:0 0;color:#ffffe4;font-size:22.5px;line-height:22px;transform:scaleX(0.84);-webkit-text-stroke:0.3px #ffffe4;text-shadow:1px 1px 1px rgba(0,0,0,0.95),1.5px 1.5px 3px rgba(0,0,0,0.55)">A</div><svg class="a" style="left:3.0px;top:221.6px;overflow:visible;filter:drop-shadow(1px 1px 1px rgba(0,0,0,0.9))" width="11.2" height="13.6"><path d="M5.6 0 C7.5 2.8 11.2 4.8 11.2 8.2 C11.2 10 9.9 11.2 8.4 11.2 C7.4 11.2 6.6 10.7 6.2 10 C6.3 11.3 6.9 12.5 8.4 13.6 L2.8 13.6 C4.3 12.5 4.9 11.3 5 10 C4.6 10.7 3.8 11.2 2.8 11.2 C1.3 11.2 0 10 0 8.2 C0 4.8 3.7 2.8 5.6 0 Z" fill="#ffffe4"/></svg><div class="a" style="left:11.3px;top:210px;transform-origin:0 0;color:#ffffe4;font-size:47px;line-height:47px;transform:scaleX(0.88);-webkit-text-stroke:0.6px #ffffe4;text-shadow:1px 1px 1px rgba(0,0,0,0.95),1.5px 1.5px 3px rgba(0,0,0,0.55)">A</div><div class="a" style="left:52px;top:199px;transform-origin:0 0;color:#ffffe4;font-size:22.5px;line-height:22px;transform:scaleX(0.84);-webkit-text-stroke:0.3px #ffffe4;text-shadow:1px 1px 1px rgba(0,0,0,0.95),1.5px 1.5px 3px rgba(0,0,0,0.55)">2</div><svg class="a" style="left:53.0px;top:221.6px;overflow:visible;filter:drop-shadow(1px 1px 1px rgba(0,0,0,0.9))" width="11.2" height="13.6"><path d="M5.6 0 C7.5 2.8 11.2 4.8 11.2 8.2 C11.2 10 9.9 11.2 8.4 11.2 C7.4 11.2 6.6 10.7 6.2 10 C6.3 11.3 6.9 12.5 8.4 13.6 L2.8 13.6 C4.3 12.5 4.9 11.3 5 10 C4.6 10.7 3.8 11.2 2.8 11.2 C1.3 11.2 0 10 0 8.2 C0 4.8 3.7 2.8 5.6 0 Z" fill="#ffffe4"/></svg><div class="a" style="left:63.4px;top:210px;transform-origin:0 0;color:#ffffe4;font-size:47px;line-height:47px;transform:scaleX(1.1);-webkit-text-stroke:0.6px #ffffe4;text-shadow:1px 1px 1px rgba(0,0,0,0.95),1.5px 1.5px 3px rgba(0,0,0,0.55)">2</div><div class="a" style="left:102px;top:199px;transform-origin:0 0;color:#ffffe4;font-size:22.5px;line-height:22px;transform:scaleX(0.84);-webkit-text-stroke:0.3px #ffffe4;text-shadow:1px 1px 1px rgba(0,0,0,0.95),1.5px 1.5px 3px rgba(0,0,0,0.55)">3</div><svg class="a" style="left:103.0px;top:221.6px;overflow:visible;filter:drop-shadow(1px 1px 1px rgba(0,0,0,0.9))" width="11.2" height="13.6"><path d="M5.6 0 C7.5 2.8 11.2 4.8 11.2 8.2 C11.2 10 9.9 11.2 8.4 11.2 C7.4 11.2 6.6 10.7 6.2 10 C6.3 11.3 6.9 12.5 8.4 13.6 L2.8 13.6 C4.3 12.5 4.9 11.3 5 10 C4.6 10.7 3.8 11.2 2.8 11.2 C1.3 11.2 0 10 0 8.2 C0 4.8 3.7 2.8 5.6 0 Z" fill="#ffffe4"/></svg><div class="a" style="left:114.0px;top:213px;transform-origin:0 0;color:#ffffe4;font-size:47px;line-height:47px;transform:scaleX(1.0);-webkit-text-stroke:0.6px #ffffe4;text-shadow:1px 1px 1px rgba(0,0,0,0.95),1.5px 1.5px 3px rgba(0,0,0,0.55)">3</div><div class="a" style="left:152px;top:199px;transform-origin:0 0;color:#ffffe4;font-size:22.5px;line-height:22px;transform:scaleX(0.84);-webkit-text-stroke:0.3px #ffffe4;text-shadow:1px 1px 1px rgba(0,0,0,0.95),1.5px 1.5px 3px rgba(0,0,0,0.55)">4</div><svg class="a" style="left:153.0px;top:221.6px;overflow:visible;filter:drop-shadow(1px 1px 1px rgba(0,0,0,0.9))" width="11.2" height="13.6"><path d="M5.6 0 C7.5 2.8 11.2 4.8 11.2 8.2 C11.2 10 9.9 11.2 8.4 11.2 C7.4 11.2 6.6 10.7 6.2 10 C6.3 11.3 6.9 12.5 8.4 13.6 L2.8 13.6 C4.3 12.5 4.9 11.3 5 10 C4.6 10.7 3.8 11.2 2.8 11.2 C1.3 11.2 0 10 0 8.2 C0 4.8 3.7 2.8 5.6 0 Z" fill="#ffffe4"/></svg><div class="a" style="left:164.7px;top:210px;transform-origin:0 0;color:#ffffe4;font-size:47px;line-height:47px;transform:scaleX(0.9);-webkit-text-stroke:0.6px #ffffe4;text-shadow:1px 1px 1px rgba(0,0,0,0.95),1.5px 1.5px 3px rgba(0,0,0,0.55)">4</div><div class="a" style="left:202px;top:199px;transform-origin:0 0;color:#ffffe4;font-size:22.5px;line-height:22px;transform:scaleX(0.84);-webkit-text-stroke:0.3px #ffffe4;text-shadow:1px 1px 1px rgba(0,0,0,0.95),1.5px 1.5px 3px rgba(0,0,0,0.55)">5</div><svg class="a" style="left:203.0px;top:221.6px;overflow:visible;filter:drop-shadow(1px 1px 1px rgba(0,0,0,0.9))" width="11.2" height="13.6"><path d="M5.6 0 C7.5 2.8 11.2 4.8 11.2 8.2 C11.2 10 9.9 11.2 8.4 11.2 C7.4 11.2 6.6 10.7 6.2 10 C6.3 11.3 6.9 12.5 8.4 13.6 L2.8 13.6 C4.3 12.5 4.9 11.3 5 10 C4.6 10.7 3.8 11.2 2.8 11.2 C1.3 11.2 0 10 0 8.2 C0 4.8 3.7 2.8 5.6 0 Z" fill="#ffffe4"/></svg><div class="a" style="left:214.7px;top:213px;transform-origin:0 0;color:#ffffe4;font-size:47px;line-height:47px;transform:scaleX(0.95);-webkit-text-stroke:0.6px #ffffe4;text-shadow:1px 1px 1px rgba(0,0,0,0.95),1.5px 1.5px 3px rgba(0,0,0,0.55)">5</div><div class="a" style="left:252px;top:199px;transform-origin:0 0;color:#ffffe4;font-size:22.5px;line-height:22px;transform:scaleX(0.84);-webkit-text-stroke:0.3px #ffffe4;text-shadow:1px 1px 1px rgba(0,0,0,0.95),1.5px 1.5px 3px rgba(0,0,0,0.55)">6</div><svg class="a" style="left:253.0px;top:221.6px;overflow:visible;filter:drop-shadow(1px 1px 1px rgba(0,0,0,0.9))" width="11.2" height="13.6"><path d="M5.6 0 C7.5 2.8 11.2 4.8 11.2 8.2 C11.2 10 9.9 11.2 8.4 11.2 C7.4 11.2 6.6 10.7 6.2 10 C6.3 11.3 6.9 12.5 8.4 13.6 L2.8 13.6 C4.3 12.5 4.9 11.3 5 10 C4.6 10.7 3.8 11.2 2.8 11.2 C1.3 11.2 0 10 0 8.2 C0 4.8 3.7 2.8 5.6 0 Z" fill="#ffffe4"/></svg><div class="a" style="left:265.7px;top:209px;transform-origin:0 0;color:#ffffe4;font-size:47px;line-height:47px;transform:scaleX(0.92);-webkit-text-stroke:0.6px #ffffe4;text-shadow:1px 1px 1px rgba(0,0,0,0.95),1.5px 1.5px 3px rgba(0,0,0,0.55)">6</div><div class="a" style="left:302px;top:199px;transform-origin:0 0;color:#ffffe4;font-size:22.5px;line-height:22px;transform:scaleX(0.84);-webkit-text-stroke:0.3px #ffffe4;text-shadow:1px 1px 1px rgba(0,0,0,0.95),1.5px 1.5px 3px rgba(0,0,0,0.55)">7</div><svg class="a" style="left:303.0px;top:221.6px;overflow:visible;filter:drop-shadow(1px 1px 1px rgba(0,0,0,0.9))" width="11.2" height="13.6"><path d="M5.6 0 C7.5 2.8 11.2 4.8 11.2 8.2 C11.2 10 9.9 11.2 8.4 11.2 C7.4 11.2 6.6 10.7 6.2 10 C6.3 11.3 6.9 12.5 8.4 13.6 L2.8 13.6 C4.3 12.5 4.9 11.3 5 10 C4.6 10.7 3.8 11.2 2.8 11.2 C1.3 11.2 0 10 0 8.2 C0 4.8 3.7 2.8 5.6 0 Z" fill="#ffffe4"/></svg><div class="a" style="left:314.1px;top:213px;transform-origin:0 0;color:#ffffe4;font-size:47px;line-height:47px;transform:scaleX(0.98);-webkit-text-stroke:0.6px #ffffe4;text-shadow:1px 1px 1px rgba(0,0,0,0.95),1.5px 1.5px 3px rgba(0,0,0,0.55)">7</div><div class="a" style="left:352px;top:199px;transform-origin:0 0;color:#ffffe4;font-size:22.5px;line-height:22px;transform:scaleX(0.84);-webkit-text-stroke:0.3px #ffffe4;text-shadow:1px 1px 1px rgba(0,0,0,0.95),1.5px 1.5px 3px rgba(0,0,0,0.55)">8</div><svg class="a" style="left:353.0px;top:221.6px;overflow:visible;filter:drop-shadow(1px 1px 1px rgba(0,0,0,0.9))" width="11.2" height="13.6"><path d="M5.6 0 C7.5 2.8 11.2 4.8 11.2 8.2 C11.2 10 9.9 11.2 8.4 11.2 C7.4 11.2 6.6 10.7 6.2 10 C6.3 11.3 6.9 12.5 8.4 13.6 L2.8 13.6 C4.3 12.5 4.9 11.3 5 10 C4.6 10.7 3.8 11.2 2.8 11.2 C1.3 11.2 0 10 0 8.2 C0 4.8 3.7 2.8 5.6 0 Z" fill="#ffffe4"/></svg><div class="a" style="left:363.4px;top:209px;transform-origin:0 0;color:#ffffe4;font-size:47px;line-height:47px;transform:scaleX(1.05);-webkit-text-stroke:0.6px #ffffe4;text-shadow:1px 1px 1px rgba(0,0,0,0.95),1.5px 1.5px 3px rgba(0,0,0,0.55)">8</div><div class="a" style="left:402px;top:199px;transform-origin:0 0;color:#ffffe4;font-size:22.5px;line-height:22px;transform:scaleX(0.84);-webkit-text-stroke:0.3px #ffffe4;text-shadow:1px 1px 1px rgba(0,0,0,0.95),1.5px 1.5px 3px rgba(0,0,0,0.55)">9</div><svg class="a" style="left:403.0px;top:221.6px;overflow:visible;filter:drop-shadow(1px 1px 1px rgba(0,0,0,0.9))" width="11.2" height="13.6"><path d="M5.6 0 C7.5 2.8 11.2 4.8 11.2 8.2 C11.2 10 9.9 11.2 8.4 11.2 C7.4 11.2 6.6 10.7 6.2 10 C6.3 11.3 6.9 12.5 8.4 13.6 L2.8 13.6 C4.3 12.5 4.9 11.3 5 10 C4.6 10.7 3.8 11.2 2.8 11.2 C1.3 11.2 0 10 0 8.2 C0 4.8 3.7 2.8 5.6 0 Z" fill="#ffffe4"/></svg><div class="a" style="left:413.9px;top:213px;transform-origin:0 0;color:#ffffe4;font-size:47px;line-height:47px;transform:scaleX(0.95);-webkit-text-stroke:0.6px #ffffe4;text-shadow:1px 1px 1px rgba(0,0,0,0.95),1.5px 1.5px 3px rgba(0,0,0,0.55)">9</div><div class="a" style="left:452px;top:199px;transform-origin:0 0;color:#ffffe4;font-size:22.5px;line-height:22px;transform:scaleX(0.84);-webkit-text-stroke:0.3px #ffffe4;text-shadow:1px 1px 1px rgba(0,0,0,0.95),1.5px 1.5px 3px rgba(0,0,0,0.55)">T</div><svg class="a" style="left:453.0px;top:221.6px;overflow:visible;filter:drop-shadow(1px 1px 1px rgba(0,0,0,0.9))" width="11.2" height="13.6"><path d="M5.6 0 C7.5 2.8 11.2 4.8 11.2 8.2 C11.2 10 9.9 11.2 8.4 11.2 C7.4 11.2 6.6 10.7 6.2 10 C6.3 11.3 6.9 12.5 8.4 13.6 L2.8 13.6 C4.3 12.5 4.9 11.3 5 10 C4.6 10.7 3.8 11.2 2.8 11.2 C1.3 11.2 0 10 0 8.2 C0 4.8 3.7 2.8 5.6 0 Z" fill="#ffffe4"/></svg><div class="a" style="left:464.0px;top:210px;transform-origin:0 0;color:#ffffe4;font-size:47px;line-height:47px;transform:scaleX(1.0);-webkit-text-stroke:0.6px #ffffe4;text-shadow:1px 1px 1px rgba(0,0,0,0.95),1.5px 1.5px 3px rgba(0,0,0,0.55)">T</div><div class="a" style="left:502px;top:199px;transform-origin:0 0;color:#ffffe4;font-size:22.5px;line-height:22px;transform:scaleX(0.84);-webkit-text-stroke:0.3px #ffffe4;text-shadow:1px 1px 1px rgba(0,0,0,0.95),1.5px 1.5px 3px rgba(0,0,0,0.55)">J</div><svg class="a" style="left:503.0px;top:221.6px;overflow:visible;filter:drop-shadow(1px 1px 1px rgba(0,0,0,0.9))" width="11.2" height="13.6"><path d="M5.6 0 C7.5 2.8 11.2 4.8 11.2 8.2 C11.2 10 9.9 11.2 8.4 11.2 C7.4 11.2 6.6 10.7 6.2 10 C6.3 11.3 6.9 12.5 8.4 13.6 L2.8 13.6 C4.3 12.5 4.9 11.3 5 10 C4.6 10.7 3.8 11.2 2.8 11.2 C1.3 11.2 0 10 0 8.2 C0 4.8 3.7 2.8 5.6 0 Z" fill="#ffffe4"/></svg><div class="a" style="left:516.0px;top:213px;transform-origin:0 0;color:#ffffe4;font-size:47px;line-height:47px;transform:scaleX(0.95);-webkit-text-stroke:0.6px #ffffe4;text-shadow:1px 1px 1px rgba(0,0,0,0.95),1.5px 1.5px 3px rgba(0,0,0,0.55)">J</div><div class="a" style="left:552px;top:199px;transform-origin:0 0;color:#ffffe4;font-size:22.5px;line-height:22px;transform:scaleX(0.84);-webkit-text-stroke:0.3px #ffffe4;text-shadow:1px 1px 1px rgba(0,0,0,0.95),1.5px 1.5px 3px rgba(0,0,0,0.55)">Q</div><svg class="a" style="left:553.0px;top:221.6px;overflow:visible;filter:drop-shadow(1px 1px 1px rgba(0,0,0,0.9))" width="11.2" height="13.6"><path d="M5.6 0 C7.5 2.8 11.2 4.8 11.2 8.2 C11.2 10 9.9 11.2 8.4 11.2 C7.4 11.2 6.6 10.7 6.2 10 C6.3 11.3 6.9 12.5 8.4 13.6 L2.8 13.6 C4.3 12.5 4.9 11.3 5 10 C4.6 10.7 3.8 11.2 2.8 11.2 C1.3 11.2 0 10 0 8.2 C0 4.8 3.7 2.8 5.6 0 Z" fill="#ffffe4"/></svg><div class="a" style="left:564.0px;top:210px;transform-origin:0 0;color:#ffffe4;font-size:47px;line-height:47px;transform:scaleX(0.95);-webkit-text-stroke:0.6px #ffffe4;text-shadow:1px 1px 1px rgba(0,0,0,0.95),1.5px 1.5px 3px rgba(0,0,0,0.55)">Q</div><div class="a" style="left:602px;top:199px;transform-origin:0 0;color:#ffffe4;font-size:22.5px;line-height:22px;transform:scaleX(0.84);-webkit-text-stroke:0.3px #ffffe4;text-shadow:1px 1px 1px rgba(0,0,0,0.95),1.5px 1.5px 3px rgba(0,0,0,0.55)">K</div><svg class="a" style="left:603.0px;top:221.6px;overflow:visible;filter:drop-shadow(1px 1px 1px rgba(0,0,0,0.9))" width="11.2" height="13.6"><path d="M5.6 0 C7.5 2.8 11.2 4.8 11.2 8.2 C11.2 10 9.9 11.2 8.4 11.2 C7.4 11.2 6.6 10.7 6.2 10 C6.3 11.3 6.9 12.5 8.4 13.6 L2.8 13.6 C4.3 12.5 4.9 11.3 5 10 C4.6 10.7 3.8 11.2 2.8 11.2 C1.3 11.2 0 10 0 8.2 C0 4.8 3.7 2.8 5.6 0 Z" fill="#ffffe4"/></svg><div class="a" style="left:613.0px;top:210px;transform-origin:0 0;color:#ffffe4;font-size:47px;line-height:47px;transform:scaleX(0.95);-webkit-text-stroke:0.6px #ffffe4;text-shadow:1px 1px 1px rgba(0,0,0,0.95),1.5px 1.5px 3px rgba(0,0,0,0.55)">K</div></div>

<div class="a" style="left:252px;top:737px;width:737px;height:21px;background:#b9d0ea;border-top:1px solid #d5e4f5;border-left:1px solid #d5e4f5"></div>
<div class="t" style="left:256.4px;top:741px;color:#3e6aaa;font-size:11px;font-weight:normal;letter-spacing:0.292px;">Инфо тега - Изображение 22</div>
<svg class="a" style="left:975px;top:742px" width="9" height="10"><path d="M2 1 H7 M3 1 V6 M6 1 V6 M1 6 H8 M4.5 6 V9" stroke="#4a6a9a" stroke-width="1" fill="none"/></svg>
<div class="a" style="left:255px;top:759px;width:732px;height:157px;background:#fff;border-bottom:1px solid #2a56a0"></div>
<div class="a" style="left:255px;top:760px;width:732px;height:20px;background:linear-gradient(#f8fafc 0,#eef2f7 50%,#dfe6ef 100%);border-bottom:1px solid #a8bcd8"></div>
<div class="a" style="left:372px;top:759px;width:1px;height:21px;background:#c6d2e2"></div>
<div class="a" style="left:521px;top:759px;width:1px;height:21px;background:#c6d2e2"></div>
<div class="t" style="left:260.4px;top:763.7px;color:#1e2e4a;font-size:11px;font-weight:normal;letter-spacing:-0.052px;">Свойства</div>
<div class="t" style="left:378.5px;top:763.7px;color:#1e2e4a;font-size:11px;font-weight:normal;letter-spacing:0.227px;">Значение</div>
<div class="t" style="left:260.4px;top:781px;color:#000;font-size:11px;font-weight:normal;letter-spacing:0.122px;">Тег</div><div class="t" style="left:378.5px;top:781px;color:#000;font-size:11px;font-weight:normal;letter-spacing:-0.199px;">36 (stagDefineBitsLossless2)</div><div class="a" style="left:255px;top:793px;width:732px;height:1px;background:#dcdcdc"></div><div class="t" style="left:260.4px;top:795px;color:#000;font-size:11px;font-weight:normal;letter-spacing:-0.350px;">ID</div><div class="t" style="left:378.5px;top:795px;color:#000;font-size:11px;font-weight:normal;letter-spacing:-0.125px;">22</div><div class="a" style="left:255px;top:807px;width:732px;height:1px;background:#dcdcdc"></div><div class="t" style="left:260.4px;top:809px;color:#000;font-size:11px;font-weight:normal;letter-spacing:-0.161px;">Размер в байтах</div><div class="t" style="left:378.5px;top:809px;color:#000;font-size:11px;font-weight:normal;letter-spacing:-0.186px;">220292</div><div class="a" style="left:255px;top:821px;width:732px;height:1px;background:#dcdcdc"></div><div class="t" style="left:260.4px;top:823px;color:#000;font-size:11px;font-weight:normal;letter-spacing:-0.101px;">Формат изображения</div><div class="t" style="left:378.5px;top:823px;color:#000;font-size:11px;font-weight:normal;letter-spacing:-0.082px;">Без потерь</div><div class="a" style="left:255px;top:835px;width:732px;height:1px;background:#dcdcdc"></div><div class="t" style="left:260.4px;top:837px;color:#000;font-size:11px;font-weight:normal;letter-spacing:-0.114px;">Есть альфа-канал</div><div class="t" style="left:378.5px;top:837px;color:#000;font-size:11px;font-weight:normal;letter-spacing:0.261px;">Да</div><div class="a" style="left:255px;top:849px;width:732px;height:1px;background:#dcdcdc"></div><div class="t" style="left:260.4px;top:851px;color:#000;font-size:11px;font-weight:normal;letter-spacing:-0.054px;">Бит на пиксель</div><div class="t" style="left:378.5px;top:851px;color:#000;font-size:11px;font-weight:normal;letter-spacing:-0.325px;">32</div><div class="a" style="left:255px;top:863px;width:732px;height:1px;background:#dcdcdc"></div><div class="t" style="left:260.4px;top:865px;color:#000;font-size:11px;font-weight:normal;letter-spacing:-0.485px;">Размер</div><div class="t" style="left:378.5px;top:865px;color:#000;font-size:11px;font-weight:normal;letter-spacing:-0.103px;">650 x 264</div><div class="a" style="left:255px;top:877px;width:732px;height:1px;background:#dcdcdc"></div><div class="a" style="left:255px;top:891px;width:732px;height:1px;background:#dcdcdc"></div><div class="a" style="left:255px;top:905px;width:732px;height:1px;background:#dcdcdc"></div><div class="a" style="left:373px;top:780px;width:1px;height:135px;background:#dcdcdc"></div><div class="a" style="left:522px;top:780px;width:1px;height:135px;background:#dcdcdc"></div>
<div class="a" style="left:986px;top:758px;width:3px;height:158px;background:#c9dcf2"></div>
<div class="a" style="left:256px;top:916px;width:45px;height:18px;background:linear-gradient(#fdfeff,#dfeaf8);border:1px solid #9ab6dc;border-top:none;border-radius:0 0 3px 3px"></div>
<div class="t" style="left:263.7px;top:919px;color:#3e6aaa;font-size:12px;font-weight:normal;letter-spacing:-0.628px;">Инфо</div>


<div class="a" style="left:993px;top:146px;width:234px;height:20px;background:#b9d0ea;border-top:1px solid #d5e4f5;border-left:1px solid #d5e4f5;border-right:1px solid #d5e4f5"></div>
<div class="t" style="left:997.5px;top:149.6px;color:#15428b;font-size:11px;font-weight:normal;letter-spacing:-0.143px;">Мои задания (SWF, EXE) - 1</div>
<svg class="a" style="left:1214px;top:150px" width="9" height="10"><path d="M2 1 H7 M3 1 V6 M6 1 V6 M1 6 H8 M4.5 6 V9" stroke="#4a6a9a" stroke-width="1" fill="none"/></svg>
<div class="a" style="left:993px;top:166px;width:234px;height:771px;background:#fff;border:1px solid #a8a8a8;border-right-color:#c0c0c0;border-bottom-color:#c0c0c0"></div>

<div class="a" style="left:1211px;top:167px;width:16px;height:769px;background:linear-gradient(90deg,#f0f0f0,#fdfdfd)"></div>
<div class="a" style="left:1211px;top:167px;width:16px;height:17px;background:linear-gradient(90deg,#fafafa,#dedede);border:1px solid #a0a0a0;border-radius:1px"></div>
<svg class="a" style="left:1215px;top:172px" width="9" height="6"><path d="M0.5 5 L4.5 1 L8.5 5 Z" fill="#000"/></svg>
<div class="a" style="left:1211px;top:184px;width:16px;height:280px;background:linear-gradient(90deg,#f8f8f8 0,#ececec 40%,#d8d8d8 60%,#d0d0d0 100%);border:1px solid #b0b0b0;border-radius:1px"></div>
<div class="a" style="left:1215px;top:321px;width:8px;height:7px;border-top:1px solid #777;border-bottom:1px solid #777"></div>
<div class="a" style="left:1215px;top:324px;width:8px;height:1px;background:#777"></div>
<div class="a" style="left:1211px;top:919px;width:16px;height:17px;background:linear-gradient(90deg,#fafafa,#dedede);border:1px solid #a0a0a0;border-radius:1px"></div>
<svg class="a" style="left:1215px;top:925px" width="9" height="6"><path d="M0.5 1 L4.5 5 L8.5 1 Z" fill="#000"/></svg>
<div class="a" style="left:1001px;top:171px;width:9px;height:9px;border:1px solid #a0a0a0;background:#fff"></div><div class="a" style="left:1003px;top:175px;width:5px;height:1px;background:#404040"></div><div class="a" style="left:1016px;top:169px;width:11px;height:11px;border:1px solid #3a6ab0;border-radius:2px;background:linear-gradient(#fdfeff,#d8e6f4)"></div><div class="a" style="left:1030px;top:168px;width:14px;height:13px;background:#1a1a1a;border-radius:2px"></div><div class="t" style="left:1031px;top:168px;color:#fff;font-size:9px;font-weight:bold">Fx</div><div class="t" style="left:1048.6px;top:168px;color:#000;font-size:11px;font-weight:normal;letter-spacing:-0.043px;">TableImages.swf</div><div class="a" style="left:1020px;top:187px;width:9px;height:9px;border:1px solid #a0a0a0;background:#fff"></div><div class="a" style="left:1022px;top:191px;width:5px;height:1px;background:#404040"></div><div class="a" style="left:1035px;top:185px;width:11px;height:11px;border:1px solid #3a6ab0;border-radius:2px;background:linear-gradient(#fdfeff,#d8e6f4)"></div><svg class="a" style="left:1048px;top:183px" width="16" height="15"><path d="M1 4 L1 13 L13 13 L13 5 L7 5 L5 3 L2 3Z" fill="#f0c040" stroke="#a07810" stroke-width="0.6"/><path d="M3 6 L5 2 L12 2" stroke="#f8e090" stroke-width="1" fill="none"/><rect x="7" y="8" width="8" height="6" fill="#fff" stroke="#2a6ad0" stroke-width="0.8"/><path d="M8 12 L14 11 L14 13 L8 13Z" fill="#10a040"/></svg><div class="t" style="left:1068px;top:184px;color:#000;font-size:11px;font-weight:normal;letter-spacing:-0.051px;">Изображения (113)</div><div class="a" style="left:1024px;top:196px;width:1px;height:740px;background:repeating-linear-gradient(#a0a0a0 0 1px,transparent 1px 2px)"></div><div class="a" style="left:1044px;top:196px;width:1px;height:740px;background:repeating-linear-gradient(#a0a0a0 0 1px,transparent 1px 2px)"></div><div class="a" style="left:1029px;top:191px;width:6px;height:1px;background:repeating-linear-gradient(90deg,#a0a0a0 0 1px,transparent 1px 2px)"></div><div class="a" style="left:1045px;top:207px;width:8px;height:1px;background:repeating-linear-gradient(90deg,#a0a0a0 0 1px,transparent 1px 2px)"></div><div class="a" style="left:1054px;top:202px;width:11px;height:11px;border:1px solid #3a6ab0;border-radius:2px;background:linear-gradient(#fdfeff,#d8e6f4)"></div><svg class="a" style="left:1067px;top:201px" width="14" height="13"><rect x="0.5" y="0.5" width="13" height="12" fill="#fff" stroke="#2a6ad0"/><rect x="2" y="2" width="10" height="9" fill="#dff0fa"/><path d="M2 8 Q6 6 12 8 L12 11 L2 11Z" fill="#10a040"/><circle cx="8.5" cy="7" r="2" fill="#f06010"/><path d="M3 3 L6 5" stroke="#556" stroke-width="0.7"/></svg><div class="t" style="left:1086.4px;top:201.3px;color:#000;font-size:11px;font-weight:normal;letter-spacing:-0.190px;">Изображение 1</div><div class="a" style="left:1045px;top:223px;width:8px;height:1px;background:repeating-linear-gradient(90deg,#a0a0a0 0 1px,transparent 1px 2px)"></div><div class="a" style="left:1054px;top:218px;width:11px;height:11px;border:1px solid #3a6ab0;border-radius:2px;background:linear-gradient(#fdfeff,#d8e6f4)"></div><svg class="a" style="left:1067px;top:217px" width="14" height="13"><rect x="0.5" y="0.5" width="13" height="12" fill="#fff" stroke="#2a6ad0"/><rect x="2" y="2" width="10" height="9" fill="#dff0fa"/><path d="M2 8 Q6 6 12 8 L12 11 L2 11Z" fill="#10a040"/><circle cx="8.5" cy="7" r="2" fill="#f06010"/><path d="M3 3 L6 5" stroke="#556" stroke-width="0.7"/></svg><div class="t" style="left:1086.4px;top:217.3px;color:#000;font-size:11px;font-weight:normal;letter-spacing:-0.190px;">Изображение 2</div><div class="a" style="left:1045px;top:239px;width:8px;height:1px;background:repeating-linear-gradient(90deg,#a0a0a0 0 1px,transparent 1px 2px)"></div><div class="a" style="left:1054px;top:234px;width:11px;height:11px;border:1px solid #3a6ab0;border-radius:2px;background:linear-gradient(#fdfeff,#d8e6f4)"></div><svg class="a" style="left:1067px;top:233px" width="14" height="13"><rect x="0.5" y="0.5" width="13" height="12" fill="#fff" stroke="#2a6ad0"/><rect x="2" y="2" width="10" height="9" fill="#dff0fa"/><path d="M2 8 Q6 6 12 8 L12 11 L2 11Z" fill="#10a040"/><circle cx="8.5" cy="7" r="2" fill="#f06010"/><path d="M3 3 L6 5" stroke="#556" stroke-width="0.7"/></svg><div class="t" style="left:1086.4px;top:233.3px;color:#000;font-size:11px;font-weight:normal;letter-spacing:-0.190px;">Изображение 3</div><div class="a" style="left:1045px;top:255px;width:8px;height:1px;background:repeating-linear-gradient(90deg,#a0a0a0 0 1px,transparent 1px 2px)"></div><div class="a" style="left:1054px;top:250px;width:11px;height:11px;border:1px solid #3a6ab0;border-radius:2px;background:linear-gradient(#fdfeff,#d8e6f4)"></div><svg class="a" style="left:1067px;top:249px" width="14" height="13"><rect x="0.5" y="0.5" width="13" height="12" fill="#fff" stroke="#2a6ad0"/><rect x="2" y="2" width="10" height="9" fill="#dff0fa"/><path d="M2 8 Q6 6 12 8 L12 11 L2 11Z" fill="#10a040"/><circle cx="8.5" cy="7" r="2" fill="#f06010"/><path d="M3 3 L6 5" stroke="#556" stroke-width="0.7"/></svg><div class="t" style="left:1086.4px;top:249.3px;color:#000;font-size:11px;font-weight:normal;letter-spacing:-0.190px;">Изображение 4</div><div class="a" style="left:1045px;top:271px;width:8px;height:1px;background:repeating-linear-gradient(90deg,#a0a0a0 0 1px,transparent 1px 2px)"></div><div class="a" style="left:1054px;top:266px;width:11px;height:11px;border:1px solid #3a6ab0;border-radius:2px;background:linear-gradient(#fdfeff,#d8e6f4)"></div><svg class="a" style="left:1067px;top:265px" width="14" height="13"><rect x="0.5" y="0.5" width="13" height="12" fill="#fff" stroke="#2a6ad0"/><rect x="2" y="2" width="10" height="9" fill="#dff0fa"/><path d="M2 8 Q6 6 12 8 L12 11 L2 11Z" fill="#10a040"/><circle cx="8.5" cy="7" r="2" fill="#f06010"/><path d="M3 3 L6 5" stroke="#556" stroke-width="0.7"/></svg><div class="t" style="left:1086.4px;top:265.3px;color:#000;font-size:11px;font-weight:normal;letter-spacing:-0.190px;">Изображение 5</div><div class="a" style="left:1045px;top:287px;width:8px;height:1px;background:repeating-linear-gradient(90deg,#a0a0a0 0 1px,transparent 1px 2px)"></div><div class="a" style="left:1054px;top:282px;width:11px;height:11px;border:1px solid #3a6ab0;border-radius:2px;background:linear-gradient(#fdfeff,#d8e6f4)"></div><svg class="a" style="left:1067px;top:281px" width="14" height="13"><rect x="0.5" y="0.5" width="13" height="12" fill="#fff" stroke="#2a6ad0"/><rect x="2" y="2" width="10" height="9" fill="#dff0fa"/><path d="M2 8 Q6 6 12 8 L12 11 L2 11Z" fill="#10a040"/><circle cx="8.5" cy="7" r="2" fill="#f06010"/><path d="M3 3 L6 5" stroke="#556" stroke-width="0.7"/></svg><div class="t" style="left:1086.4px;top:281.3px;color:#000;font-size:11px;font-weight:normal;letter-spacing:-0.190px;">Изображение 6</div><div class="a" style="left:1045px;top:303px;width:8px;height:1px;background:repeating-linear-gradient(90deg,#a0a0a0 0 1px,transparent 1px 2px)"></div><div class="a" style="left:1054px;top:298px;width:11px;height:11px;border:1px solid #3a6ab0;border-radius:2px;background:linear-gradient(#fdfeff,#d8e6f4)"></div><svg class="a" style="left:1067px;top:297px" width="14" height="13"><rect x="0.5" y="0.5" width="13" height="12" fill="#fff" stroke="#2a6ad0"/><rect x="2" y="2" width="10" height="9" fill="#dff0fa"/><path d="M2 8 Q6 6 12 8 L12 11 L2 11Z" fill="#10a040"/><circle cx="8.5" cy="7" r="2" fill="#f06010"/><path d="M3 3 L6 5" stroke="#556" stroke-width="0.7"/></svg><div class="t" style="left:1086.4px;top:297.3px;color:#000;font-size:11px;font-weight:normal;letter-spacing:-0.190px;">Изображение 7</div><div class="a" style="left:1045px;top:319px;width:8px;height:1px;background:repeating-linear-gradient(90deg,#a0a0a0 0 1px,transparent 1px 2px)"></div><div class="a" style="left:1054px;top:314px;width:11px;height:11px;border:1px solid #3a6ab0;border-radius:2px;background:linear-gradient(#fdfeff,#d8e6f4)"></div><svg class="a" style="left:1067px;top:313px" width="14" height="13"><rect x="0.5" y="0.5" width="13" height="12" fill="#fff" stroke="#2a6ad0"/><rect x="2" y="2" width="10" height="9" fill="#dff0fa"/><path d="M2 8 Q6 6 12 8 L12 11 L2 11Z" fill="#10a040"/><circle cx="8.5" cy="7" r="2" fill="#f06010"/><path d="M3 3 L6 5" stroke="#556" stroke-width="0.7"/></svg><div class="t" style="left:1086.4px;top:313.3px;color:#000;font-size:11px;font-weight:normal;letter-spacing:-0.190px;">Изображение 8</div><div class="a" style="left:1045px;top:335px;width:8px;height:1px;background:repeating-linear-gradient(90deg,#a0a0a0 0 1px,transparent 1px 2px)"></div><div class="a" style="left:1054px;top:330px;width:11px;height:11px;border:1px solid #3a6ab0;border-radius:2px;background:linear-gradient(#fdfeff,#d8e6f4)"></div><svg class="a" style="left:1067px;top:329px" width="14" height="13"><rect x="0.5" y="0.5" width="13" height="12" fill="#fff" stroke="#2a6ad0"/><rect x="2" y="2" width="10" height="9" fill="#dff0fa"/><path d="M2 8 Q6 6 12 8 L12 11 L2 11Z" fill="#10a040"/><circle cx="8.5" cy="7" r="2" fill="#f06010"/><path d="M3 3 L6 5" stroke="#556" stroke-width="0.7"/></svg><div class="t" style="left:1086.4px;top:329.3px;color:#000;font-size:11px;font-weight:normal;letter-spacing:-0.190px;">Изображение 9</div><div class="a" style="left:1045px;top:351px;width:8px;height:1px;background:repeating-linear-gradient(90deg,#a0a0a0 0 1px,transparent 1px 2px)"></div><div class="a" style="left:1054px;top:346px;width:11px;height:11px;border:1px solid #3a6ab0;border-radius:2px;background:linear-gradient(#fdfeff,#d8e6f4)"></div><svg class="a" style="left:1067px;top:345px" width="14" height="13"><rect x="0.5" y="0.5" width="13" height="12" fill="#fff" stroke="#2a6ad0"/><rect x="2" y="2" width="10" height="9" fill="#dff0fa"/><path d="M2 8 Q6 6 12 8 L12 11 L2 11Z" fill="#10a040"/><circle cx="8.5" cy="7" r="2" fill="#f06010"/><path d="M3 3 L6 5" stroke="#556" stroke-width="0.7"/></svg><div class="t" style="left:1086.4px;top:345.3px;color:#000;font-size:11px;font-weight:normal;letter-spacing:-0.157px;">Изображение 10</div><div class="a" style="left:1045px;top:367px;width:8px;height:1px;background:repeating-linear-gradient(90deg,#a0a0a0 0 1px,transparent 1px 2px)"></div><div class="a" style="left:1054px;top:362px;width:11px;height:11px;border:1px solid #3a6ab0;border-radius:2px;background:linear-gradient(#fdfeff,#d8e6f4)"></div><svg class="a" style="left:1067px;top:361px" width="14" height="13"><rect x="0.5" y="0.5" width="13" height="12" fill="#fff" stroke="#2a6ad0"/><rect x="2" y="2" width="10" height="9" fill="#dff0fa"/><path d="M2 8 Q6 6 12 8 L12 11 L2 11Z" fill="#10a040"/><circle cx="8.5" cy="7" r="2" fill="#f06010"/><path d="M3 3 L6 5" stroke="#556" stroke-width="0.7"/></svg><div class="t" style="left:1086.4px;top:361.3px;color:#000;font-size:11px;font-weight:normal;letter-spacing:-0.099px;">Изображение 11</div><div class="a" style="left:1045px;top:383px;width:8px;height:1px;background:repeating-linear-gradient(90deg,#a0a0a0 0 1px,transparent 1px 2px)"></div><div class="a" style="left:1054px;top:378px;width:11px;height:11px;border:1px solid #3a6ab0;border-radius:2px;background:linear-gradient(#fdfeff,#d8e6f4)"></div><svg class="a" style="left:1067px;top:377px" width="14" height="13"><rect x="0.5" y="0.5" width="13" height="12" fill="#fff" stroke="#2a6ad0"/><rect x="2" y="2" width="10" height="9" fill="#dff0fa"/><path d="M2 8 Q6 6 12 8 L12 11 L2 11Z" fill="#10a040"/><circle cx="8.5" cy="7" r="2" fill="#f06010"/><path d="M3 3 L6 5" stroke="#556" stroke-width="0.7"/></svg><div class="t" style="left:1086.4px;top:377.3px;color:#000;font-size:11px;font-weight:normal;letter-spacing:-0.157px;">Изображение 12</div><div class="a" style="left:1045px;top:399px;width:8px;height:1px;background:repeating-linear-gradient(90deg,#a0a0a0 0 1px,transparent 1px 2px)"></div><div class="a" style="left:1054px;top:394px;width:11px;height:11px;border:1px solid #3a6ab0;border-radius:2px;background:linear-gradient(#fdfeff,#d8e6f4)"></div><svg class="a" style="left:1067px;top:393px" width="14" height="13"><rect x="0.5" y="0.5" width="13" height="12" fill="#fff" stroke="#2a6ad0"/><rect x="2" y="2" width="10" height="9" fill="#dff0fa"/><path d="M2 8 Q6 6 12 8 L12 11 L2 11Z" fill="#10a040"/><circle cx="8.5" cy="7" r="2" fill="#f06010"/><path d="M3 3 L6 5" stroke="#556" stroke-width="0.7"/></svg><div class="t" style="left:1086.4px;top:393.3px;color:#000;font-size:11px;font-weight:normal;letter-spacing:-0.157px;">Изображение 13</div><div class="a" style="left:1045px;top:415px;width:8px;height:1px;background:repeating-linear-gradient(90deg,#a0a0a0 0 1px,transparent 1px 2px)"></div><div class="a" style="left:1054px;top:410px;width:11px;height:11px;border:1px solid #3a6ab0;border-radius:2px;background:linear-gradient(#fdfeff,#d8e6f4)"></div><svg class="a" style="left:1067px;top:409px" width="14" height="13"><rect x="0.5" y="0.5" width="13" height="12" fill="#fff" stroke="#2a6ad0"/><rect x="2" y="2" width="10" height="9" fill="#dff0fa"/><path d="M2 8 Q6 6 12 8 L12 11 L2 11Z" fill="#10a040"/><circle cx="8.5" cy="7" r="2" fill="#f06010"/><path d="M3 3 L6 5" stroke="#556" stroke-width="0.7"/></svg><div class="t" style="left:1086.4px;top:409.3px;color:#000;font-size:11px;font-weight:normal;letter-spacing:-0.157px;">Изображение 14</div><div class="a" style="left:1045px;top:431px;width:8px;height:1px;background:repeating-linear-gradient(90deg,#a0a0a0 0 1px,transparent 1px 2px)"></div><div class="a" style="left:1054px;top:426px;width:11px;height:11px;border:1px solid #3a6ab0;border-radius:2px;background:linear-gradient(#fdfeff,#d8e6f4)"></div><svg class="a" style="left:1067px;top:425px" width="14" height="13"><rect x="0.5" y="0.5" width="13" height="12" fill="#fff" stroke="#2a6ad0"/><rect x="2" y="2" width="10" height="9" fill="#dff0fa"/><path d="M2 8 Q6 6 12 8 L12 11 L2 11Z" fill="#10a040"/><circle cx="8.5" cy="7" r="2" fill="#f06010"/><path d="M3 3 L6 5" stroke="#556" stroke-width="0.7"/></svg><div class="t" style="left:1086.4px;top:425.3px;color:#000;font-size:11px;font-weight:normal;letter-spacing:-0.157px;">Изображение 15</div><div class="a" style="left:1045px;top:447px;width:8px;height:1px;background:repeating-linear-gradient(90deg,#a0a0a0 0 1px,transparent 1px 2px)"></div><div class="a" style="left:1054px;top:442px;width:11px;height:11px;border:1px solid #3a6ab0;border-radius:2px;background:linear-gradient(#fdfeff,#d8e6f4)"></div><svg class="a" style="left:1067px;top:441px" width="14" height="13"><rect x="0.5" y="0.5" width="13" height="12" fill="#fff" stroke="#2a6ad0"/><rect x="2" y="2" width="10" height="9" fill="#dff0fa"/><path d="M2 8 Q6 6 12 8 L12 11 L2 11Z" fill="#10a040"/><circle cx="8.5" cy="7" r="2" fill="#f06010"/><path d="M3 3 L6 5" stroke="#556" stroke-width="0.7"/></svg><div class="t" style="left:1086.4px;top:441.3px;color:#000;font-size:11px;font-weight:normal;letter-spacing:-0.157px;">Изображение 16</div><div class="a" style="left:1045px;top:463px;width:8px;height:1px;background:repeating-linear-gradient(90deg,#a0a0a0 0 1px,transparent 1px 2px)"></div><div class="a" style="left:1054px;top:458px;width:11px;height:11px;border:1px solid #3a6ab0;border-radius:2px;background:linear-gradient(#fdfeff,#d8e6f4)"></div><svg class="a" style="left:1067px;top:457px" width="14" height="13"><rect x="0.5" y="0.5" width="13" height="12" fill="#fff" stroke="#2a6ad0"/><rect x="2" y="2" width="10" height="9" fill="#dff0fa"/><path d="M2 8 Q6 6 12 8 L12 11 L2 11Z" fill="#10a040"/><circle cx="8.5" cy="7" r="2" fill="#f06010"/><path d="M3 3 L6 5" stroke="#556" stroke-width="0.7"/></svg><div class="t" style="left:1086.4px;top:457.3px;color:#000;font-size:11px;font-weight:normal;letter-spacing:-0.157px;">Изображение 17</div><div class="a" style="left:1045px;top:479px;width:8px;height:1px;background:repeating-linear-gradient(90deg,#a0a0a0 0 1px,transparent 1px 2px)"></div><div class="a" style="left:1054px;top:474px;width:11px;height:11px;border:1px solid #3a6ab0;border-radius:2px;background:linear-gradient(#fdfeff,#d8e6f4)"></div><svg class="a" style="left:1067px;top:473px" width="14" height="13"><rect x="0.5" y="0.5" width="13" height="12" fill="#fff" stroke="#2a6ad0"/><rect x="2" y="2" width="10" height="9" fill="#dff0fa"/><path d="M2 8 Q6 6 12 8 L12 11 L2 11Z" fill="#10a040"/><circle cx="8.5" cy="7" r="2" fill="#f06010"/><path d="M3 3 L6 5" stroke="#556" stroke-width="0.7"/></svg><div class="t" style="left:1086.4px;top:473.3px;color:#000;font-size:11px;font-weight:normal;letter-spacing:-0.157px;">Изображение 18</div><div class="a" style="left:1045px;top:495px;width:8px;height:1px;background:repeating-linear-gradient(90deg,#a0a0a0 0 1px,transparent 1px 2px)"></div><div class="a" style="left:1054px;top:490px;width:11px;height:11px;border:1px solid #3a6ab0;border-radius:2px;background:linear-gradient(#fdfeff,#d8e6f4)"></div><svg class="a" style="left:1067px;top:489px" width="14" height="13"><rect x="0.5" y="0.5" width="13" height="12" fill="#fff" stroke="#2a6ad0"/><rect x="2" y="2" width="10" height="9" fill="#dff0fa"/><path d="M2 8 Q6 6 12 8 L12 11 L2 11Z" fill="#10a040"/><circle cx="8.5" cy="7" r="2" fill="#f06010"/><path d="M3 3 L6 5" stroke="#556" stroke-width="0.7"/></svg><div class="t" style="left:1086.4px;top:489.3px;color:#000;font-size:11px;font-weight:normal;letter-spacing:-0.157px;">Изображение 19</div><div class="a" style="left:1045px;top:511px;width:8px;height:1px;background:repeating-linear-gradient(90deg,#a0a0a0 0 1px,transparent 1px 2px)"></div><div class="a" style="left:1054px;top:506px;width:11px;height:11px;border:1px solid #3a6ab0;border-radius:2px;background:linear-gradient(#fdfeff,#d8e6f4)"></div><svg class="a" style="left:1067px;top:505px" width="14" height="13"><rect x="0.5" y="0.5" width="13" height="12" fill="#fff" stroke="#2a6ad0"/><rect x="2" y="2" width="10" height="9" fill="#dff0fa"/><path d="M2 8 Q6 6 12 8 L12 11 L2 11Z" fill="#10a040"/><circle cx="8.5" cy="7" r="2" fill="#f06010"/><path d="M3 3 L6 5" stroke="#556" stroke-width="0.7"/></svg><div class="t" style="left:1086.4px;top:505.3px;color:#000;font-size:11px;font-weight:normal;letter-spacing:-0.157px;">Изображение 20</div><div class="a" style="left:1045px;top:527px;width:8px;height:1px;background:repeating-linear-gradient(90deg,#a0a0a0 0 1px,transparent 1px 2px)"></div><div class="a" style="left:1054px;top:522px;width:11px;height:11px;border:1px solid #3a6ab0;border-radius:2px;background:linear-gradient(#fdfeff,#d8e6f4)"></div><svg class="a" style="left:1067px;top:521px" width="14" height="13"><rect x="0.5" y="0.5" width="13" height="12" fill="#fff" stroke="#2a6ad0"/><rect x="2" y="2" width="10" height="9" fill="#dff0fa"/><path d="M2 8 Q6 6 12 8 L12 11 L2 11Z" fill="#10a040"/><circle cx="8.5" cy="7" r="2" fill="#f06010"/><path d="M3 3 L6 5" stroke="#556" stroke-width="0.7"/></svg><div class="t" style="left:1086.4px;top:521.3px;color:#000;font-size:11px;font-weight:normal;letter-spacing:-0.157px;">Изображение 21</div><div class="a" style="left:1045px;top:543px;width:8px;height:1px;background:repeating-linear-gradient(90deg,#a0a0a0 0 1px,transparent 1px 2px)"></div><div class="a" style="left:1054px;top:538px;width:11px;height:11px;border:1px solid #3a6ab0;border-radius:2px;background:linear-gradient(#fdfeff,#d8e6f4)"></div><svg class="a" style="left:1067px;top:537px" width="14" height="13"><rect x="0.5" y="0.5" width="13" height="12" fill="#fff" stroke="#2a6ad0"/><rect x="2" y="2" width="10" height="9" fill="#dff0fa"/><path d="M2 8 Q6 6 12 8 L12 11 L2 11Z" fill="#10a040"/><circle cx="8.5" cy="7" r="2" fill="#f06010"/><path d="M3 3 L6 5" stroke="#556" stroke-width="0.7"/></svg><div class="a" style="left:1085px;top:535px;width:90px;height:16px;background:#dcdcdc"></div><div class="t" style="left:1086.4px;top:537.3px;color:#000;font-size:11px;font-weight:normal;letter-spacing:-0.157px;">Изображение 22</div><div class="a" style="left:1045px;top:559px;width:8px;height:1px;background:repeating-linear-gradient(90deg,#a0a0a0 0 1px,transparent 1px 2px)"></div><div class="a" style="left:1054px;top:554px;width:11px;height:11px;border:1px solid #3a6ab0;border-radius:2px;background:linear-gradient(#fdfeff,#d8e6f4)"></div><svg class="a" style="left:1067px;top:553px" width="14" height="13"><rect x="0.5" y="0.5" width="13" height="12" fill="#fff" stroke="#2a6ad0"/><rect x="2" y="2" width="10" height="9" fill="#dff0fa"/><path d="M2 8 Q6 6 12 8 L12 11 L2 11Z" fill="#10a040"/><circle cx="8.5" cy="7" r="2" fill="#f06010"/><path d="M3 3 L6 5" stroke="#556" stroke-width="0.7"/></svg><div class="t" style="left:1086.4px;top:553.3px;color:#000;font-size:11px;font-weight:normal;letter-spacing:-0.157px;">Изображение 23</div><div class="a" style="left:1045px;top:575px;width:8px;height:1px;background:repeating-linear-gradient(90deg,#a0a0a0 0 1px,transparent 1px 2px)"></div><div class="a" style="left:1054px;top:570px;width:11px;height:11px;border:1px solid #3a6ab0;border-radius:2px;background:linear-gradient(#fdfeff,#d8e6f4)"></div><svg class="a" style="left:1067px;top:569px" width="14" height="13"><rect x="0.5" y="0.5" width="13" height="12" fill="#fff" stroke="#2a6ad0"/><rect x="2" y="2" width="10" height="9" fill="#dff0fa"/><path d="M2 8 Q6 6 12 8 L12 11 L2 11Z" fill="#10a040"/><circle cx="8.5" cy="7" r="2" fill="#f06010"/><path d="M3 3 L6 5" stroke="#556" stroke-width="0.7"/></svg><div class="t" style="left:1086.4px;top:569.3px;color:#000;font-size:11px;font-weight:normal;letter-spacing:-0.157px;">Изображение 24</div><div class="a" style="left:1045px;top:591px;width:8px;height:1px;background:repeating-linear-gradient(90deg,#a0a0a0 0 1px,transparent 1px 2px)"></div><div class="a" style="left:1054px;top:586px;width:11px;height:11px;border:1px solid #3a6ab0;border-radius:2px;background:linear-gradient(#fdfeff,#d8e6f4)"></div><svg class="a" style="left:1067px;top:585px" width="14" height="13"><rect x="0.5" y="0.5" width="13" height="12" fill="#fff" stroke="#2a6ad0"/><rect x="2" y="2" width="10" height="9" fill="#dff0fa"/><path d="M2 8 Q6 6 12 8 L12 11 L2 11Z" fill="#10a040"/><circle cx="8.5" cy="7" r="2" fill="#f06010"/><path d="M3 3 L6 5" stroke="#556" stroke-width="0.7"/></svg><div class="t" style="left:1086.4px;top:585.3px;color:#000;font-size:11px;font-weight:normal;letter-spacing:-0.157px;">Изображение 25</div><div class="a" style="left:1045px;top:607px;width:8px;height:1px;background:repeating-linear-gradient(90deg,#a0a0a0 0 1px,transparent 1px 2px)"></div><div class="a" style="left:1054px;top:602px;width:11px;height:11px;border:1px solid #3a6ab0;border-radius:2px;background:linear-gradient(#fdfeff,#d8e6f4)"></div><svg class="a" style="left:1067px;top:601px" width="14" height="13"><rect x="0.5" y="0.5" width="13" height="12" fill="#fff" stroke="#2a6ad0"/><rect x="2" y="2" width="10" height="9" fill="#dff0fa"/><path d="M2 8 Q6 6 12 8 L12 11 L2 11Z" fill="#10a040"/><circle cx="8.5" cy="7" r="2" fill="#f06010"/><path d="M3 3 L6 5" stroke="#556" stroke-width="0.7"/></svg><div class="t" style="left:1086.4px;top:601.3px;color:#000;font-size:11px;font-weight:normal;letter-spacing:-0.157px;">Изображение 26</div><div class="a" style="left:1045px;top:623px;width:8px;height:1px;background:repeating-linear-gradient(90deg,#a0a0a0 0 1px,transparent 1px 2px)"></div><div class="a" style="left:1054px;top:618px;width:11px;height:11px;border:1px solid #3a6ab0;border-radius:2px;background:linear-gradient(#fdfeff,#d8e6f4)"></div><svg class="a" style="left:1067px;top:617px" width="14" height="13"><rect x="0.5" y="0.5" width="13" height="12" fill="#fff" stroke="#2a6ad0"/><rect x="2" y="2" width="10" height="9" fill="#dff0fa"/><path d="M2 8 Q6 6 12 8 L12 11 L2 11Z" fill="#10a040"/><circle cx="8.5" cy="7" r="2" fill="#f06010"/><path d="M3 3 L6 5" stroke="#556" stroke-width="0.7"/></svg><div class="t" style="left:1086.4px;top:617.3px;color:#000;font-size:11px;font-weight:normal;letter-spacing:-0.157px;">Изображение 27</div><div class="a" style="left:1045px;top:639px;width:8px;height:1px;background:repeating-linear-gradient(90deg,#a0a0a0 0 1px,transparent 1px 2px)"></div><div class="a" style="left:1054px;top:634px;width:11px;height:11px;border:1px solid #3a6ab0;border-radius:2px;background:linear-gradient(#fdfeff,#d8e6f4)"></div><svg class="a" style="left:1067px;top:633px" width="14" height="13"><rect x="0.5" y="0.5" width="13" height="12" fill="#fff" stroke="#2a6ad0"/><rect x="2" y="2" width="10" height="9" fill="#dff0fa"/><path d="M2 8 Q6 6 12 8 L12 11 L2 11Z" fill="#10a040"/><circle cx="8.5" cy="7" r="2" fill="#f06010"/><path d="M3 3 L6 5" stroke="#556" stroke-width="0.7"/></svg><div class="t" style="left:1086.4px;top:633.3px;color:#000;font-size:11px;font-weight:normal;letter-spacing:-0.157px;">Изображение 28</div><div class="a" style="left:1045px;top:655px;width:8px;height:1px;background:repeating-linear-gradient(90deg,#a0a0a0 0 1px,transparent 1px 2px)"></div><div class="a" style="left:1054px;top:650px;width:11px;height:11px;border:1px solid #3a6ab0;border-radius:2px;background:linear-gradient(#fdfeff,#d8e6f4)"></div><svg class="a" style="left:1067px;top:649px" width="14" height="13"><rect x="0.5" y="0.5" width="13" height="12" fill="#fff" stroke="#2a6ad0"/><rect x="2" y="2" width="10" height="9" fill="#dff0fa"/><path d="M2 8 Q6 6 12 8 L12 11 L2 11Z" fill="#10a040"/><circle cx="8.5" cy="7" r="2" fill="#f06010"/><path d="M3 3 L6 5" stroke="#556" stroke-width="0.7"/></svg><div class="t" style="left:1086.4px;top:649.3px;color:#000;font-size:11px;font-weight:normal;letter-spacing:-0.157px;">Изображение 29</div><div class="a" style="left:1045px;top:671px;width:8px;height:1px;background:repeating-linear-gradient(90deg,#a0a0a0 0 1px,transparent 1px 2px)"></div><div class="a" style="left:1054px;top:666px;width:11px;height:11px;border:1px solid #3a6ab0;border-radius:2px;background:linear-gradient(#fdfeff,#d8e6f4)"></div><svg class="a" style="left:1067px;top:665px" width="14" height="13"><rect x="0.5" y="0.5" width="13" height="12" fill="#fff" stroke="#2a6ad0"/><rect x="2" y="2" width="10" height="9" fill="#dff0fa"/><path d="M2 8 Q6 6 12 8 L12 11 L2 11Z" fill="#10a040"/><circle cx="8.5" cy="7" r="2" fill="#f06010"/><path d="M3 3 L6 5" stroke="#556" stroke-width="0.7"/></svg><div class="t" style="left:1086.4px;top:665.3px;color:#000;font-size:11px;font-weight:normal;letter-spacing:-0.157px;">Изображение 30</div><div class="a" style="left:1045px;top:687px;width:8px;height:1px;background:repeating-linear-gradient(90deg,#a0a0a0 0 1px,transparent 1px 2px)"></div><div class="a" style="left:1054px;top:682px;width:11px;height:11px;border:1px solid #3a6ab0;border-radius:2px;background:linear-gradient(#fdfeff,#d8e6f4)"></div><svg class="a" style="left:1067px;top:681px" width="14" height="13"><rect x="0.5" y="0.5" width="13" height="12" fill="#fff" stroke="#2a6ad0"/><rect x="2" y="2" width="10" height="9" fill="#dff0fa"/><path d="M2 8 Q6 6 12 8 L12 11 L2 11Z" fill="#10a040"/><circle cx="8.5" cy="7" r="2" fill="#f06010"/><path d="M3 3 L6 5" stroke="#556" stroke-width="0.7"/></svg><div class="t" style="left:1086.4px;top:681.3px;color:#000;font-size:11px;font-weight:normal;letter-spacing:-0.157px;">Изображение 31</div><div class="a" style="left:1045px;top:703px;width:8px;height:1px;background:repeating-linear-gradient(90deg,#a0a0a0 0 1px,transparent 1px 2px)"></div><div class="a" style="left:1054px;top:698px;width:11px;height:11px;border:1px solid #3a6ab0;border-radius:2px;background:linear-gradient(#fdfeff,#d8e6f4)"></div><svg class="a" style="left:1067px;top:697px" width="14" height="13"><rect x="0.5" y="0.5" width="13" height="12" fill="#fff" stroke="#2a6ad0"/><rect x="2" y="2" width="10" height="9" fill="#dff0fa"/><path d="M2 8 Q6 6 12 8 L12 11 L2 11Z" fill="#10a040"/><circle cx="8.5" cy="7" r="2" fill="#f06010"/><path d="M3 3 L6 5" stroke="#556" stroke-width="0.7"/></svg><div class="t" style="left:1086.4px;top:697.3px;color:#000;font-size:11px;font-weight:normal;letter-spacing:-0.157px;">Изображение 32</div><div class="a" style="left:1045px;top:719px;width:8px;height:1px;background:repeating-linear-gradient(90deg,#a0a0a0 0 1px,transparent 1px 2px)"></div><div class="a" style="left:1054px;top:714px;width:11px;height:11px;border:1px solid #3a6ab0;border-radius:2px;background:linear-gradient(#fdfeff,#d8e6f4)"></div><svg class="a" style="left:1067px;top:713px" width="14" height="13"><rect x="0.5" y="0.5" width="13" height="12" fill="#fff" stroke="#2a6ad0"/><rect x="2" y="2" width="10" height="9" fill="#dff0fa"/><path d="M2 8 Q6 6 12 8 L12 11 L2 11Z" fill="#10a040"/><circle cx="8.5" cy="7" r="2" fill="#f06010"/><path d="M3 3 L6 5" stroke="#556" stroke-width="0.7"/></svg><div class="t" style="left:1086.4px;top:713.3px;color:#000;font-size:11px;font-weight:normal;letter-spacing:-0.157px;">Изображение 33</div><div class="a" style="left:1045px;top:735px;width:8px;height:1px;background:repeating-linear-gradient(90deg,#a0a0a0 0 1px,transparent 1px 2px)"></div><div class="a" style="left:1054px;top:730px;width:11px;height:11px;border:1px solid #3a6ab0;border-radius:2px;background:linear-gradient(#fdfeff,#d8e6f4)"></div><svg class="a" style="left:1067px;top:729px" width="14" height="13"><rect x="0.5" y="0.5" width="13" height="12" fill="#fff" stroke="#2a6ad0"/><rect x="2" y="2" width="10" height="9" fill="#dff0fa"/><path d="M2 8 Q6 6 12 8 L12 11 L2 11Z" fill="#10a040"/><circle cx="8.5" cy="7" r="2" fill="#f06010"/><path d="M3 3 L6 5" stroke="#556" stroke-width="0.7"/></svg><div class="t" style="left:1086.4px;top:729.3px;color:#000;font-size:11px;font-weight:normal;letter-spacing:-0.157px;">Изображение 34</div><div class="a" style="left:1045px;top:751px;width:8px;height:1px;background:repeating-linear-gradient(90deg,#a0a0a0 0 1px,transparent 1px 2px)"></div><div class="a" style="left:1054px;top:746px;width:11px;height:11px;border:1px solid #3a6ab0;border-radius:2px;background:linear-gradient(#fdfeff,#d8e6f4)"></div><svg class="a" style="left:1067px;top:745px" width="14" height="13"><rect x="0.5" y="0.5" width="13" height="12" fill="#fff" stroke="#2a6ad0"/><rect x="2" y="2" width="10" height="9" fill="#dff0fa"/><path d="M2 8 Q6 6 12 8 L12 11 L2 11Z" fill="#10a040"/><circle cx="8.5" cy="7" r="2" fill="#f06010"/><path d="M3 3 L6 5" stroke="#556" stroke-width="0.7"/></svg><div class="t" style="left:1086.4px;top:745.3px;color:#000;font-size:11px;font-weight:normal;letter-spacing:-0.157px;">Изображение 35</div><div class="a" style="left:1045px;top:767px;width:8px;height:1px;background:repeating-linear-gradient(90deg,#a0a0a0 0 1px,transparent 1px 2px)"></div><div class="a" style="left:1054px;top:762px;width:11px;height:11px;border:1px solid #3a6ab0;border-radius:2px;background:linear-gradient(#fdfeff,#d8e6f4)"></div><svg class="a" style="left:1067px;top:761px" width="14" height="13"><rect x="0.5" y="0.5" width="13" height="12" fill="#fff" stroke="#2a6ad0"/><rect x="2" y="2" width="10" height="9" fill="#dff0fa"/><path d="M2 8 Q6 6 12 8 L12 11 L2 11Z" fill="#10a040"/><circle cx="8.5" cy="7" r="2" fill="#f06010"/><path d="M3 3 L6 5" stroke="#556" stroke-width="0.7"/></svg><div class="t" style="left:1086.4px;top:761.3px;color:#000;font-size:11px;font-weight:normal;letter-spacing:-0.157px;">Изображение 36</div><div class="a" style="left:1045px;top:783px;width:8px;height:1px;background:repeating-linear-gradient(90deg,#a0a0a0 0 1px,transparent 1px 2px)"></div><div class="a" style="left:1054px;top:778px;width:11px;height:11px;border:1px solid #3a6ab0;border-radius:2px;background:linear-gradient(#fdfeff,#d8e6f4)"></div><svg class="a" style="left:1067px;top:777px" width="14" height="13"><rect x="0.5" y="0.5" width="13" height="12" fill="#fff" stroke="#2a6ad0"/><rect x="2" y="2" width="10" height="9" fill="#dff0fa"/><path d="M2 8 Q6 6 12 8 L12 11 L2 11Z" fill="#10a040"/><circle cx="8.5" cy="7" r="2" fill="#f06010"/><path d="M3 3 L6 5" stroke="#556" stroke-width="0.7"/></svg><div class="t" style="left:1086.4px;top:777.3px;color:#000;font-size:11px;font-weight:normal;letter-spacing:-0.157px;">Изображение 37</div><div class="a" style="left:1045px;top:799px;width:8px;height:1px;background:repeating-linear-gradient(90deg,#a0a0a0 0 1px,transparent 1px 2px)"></div><div class="a" style="left:1054px;top:794px;width:11px;height:11px;border:1px solid #3a6ab0;border-radius:2px;background:linear-gradient(#fdfeff,#d8e6f4)"></div><svg class="a" style="left:1067px;top:793px" width="14" height="13"><rect x="0.5" y="0.5" width="13" height="12" fill="#fff" stroke="#2a6ad0"/><rect x="2" y="2" width="10" height="9" fill="#dff0fa"/><path d="M2 8 Q6 6 12 8 L12 11 L2 11Z" fill="#10a040"/><circle cx="8.5" cy="7" r="2" fill="#f06010"/><path d="M3 3 L6 5" stroke="#556" stroke-width="0.7"/></svg><div class="t" style="left:1086.4px;top:793.3px;color:#000;font-size:11px;font-weight:normal;letter-spacing:-0.157px;">Изображение 38</div><div class="a" style="left:1045px;top:815px;width:8px;height:1px;background:repeating-linear-gradient(90deg,#a0a0a0 0 1px,transparent 1px 2px)"></div><div class="a" style="left:1054px;top:810px;width:11px;height:11px;border:1px solid #3a6ab0;border-radius:2px;background:linear-gradient(#fdfeff,#d8e6f4)"></div><svg class="a" style="left:1067px;top:809px" width="14" height="13"><rect x="0.5" y="0.5" width="13" height="12" fill="#fff" stroke="#2a6ad0"/><rect x="2" y="2" width="10" height="9" fill="#dff0fa"/><path d="M2 8 Q6 6 12 8 L12 11 L2 11Z" fill="#10a040"/><circle cx="8.5" cy="7" r="2" fill="#f06010"/><path d="M3 3 L6 5" stroke="#556" stroke-width="0.7"/></svg><div class="t" style="left:1086.4px;top:809.3px;color:#000;font-size:11px;font-weight:normal;letter-spacing:-0.157px;">Изображение 39</div><div class="a" style="left:1045px;top:831px;width:8px;height:1px;background:repeating-linear-gradient(90deg,#a0a0a0 0 1px,transparent 1px 2px)"></div><div class="a" style="left:1054px;top:826px;width:11px;height:11px;border:1px solid #3a6ab0;border-radius:2px;background:linear-gradient(#fdfeff,#d8e6f4)"></div><svg class="a" style="left:1067px;top:825px" width="14" height="13"><rect x="0.5" y="0.5" width="13" height="12" fill="#fff" stroke="#2a6ad0"/><rect x="2" y="2" width="10" height="9" fill="#dff0fa"/><path d="M2 8 Q6 6 12 8 L12 11 L2 11Z" fill="#10a040"/><circle cx="8.5" cy="7" r="2" fill="#f06010"/><path d="M3 3 L6 5" stroke="#556" stroke-width="0.7"/></svg><div class="t" style="left:1086.4px;top:825.3px;color:#000;font-size:11px;font-weight:normal;letter-spacing:-0.157px;">Изображение 40</div><div class="a" style="left:1045px;top:847px;width:8px;height:1px;background:repeating-linear-gradient(90deg,#a0a0a0 0 1px,transparent 1px 2px)"></div><div class="a" style="left:1054px;top:842px;width:11px;height:11px;border:1px solid #3a6ab0;border-radius:2px;background:linear-gradient(#fdfeff,#d8e6f4)"></div><svg class="a" style="left:1067px;top:841px" width="14" height="13"><rect x="0.5" y="0.5" width="13" height="12" fill="#fff" stroke="#2a6ad0"/><rect x="2" y="2" width="10" height="9" fill="#dff0fa"/><path d="M2 8 Q6 6 12 8 L12 11 L2 11Z" fill="#10a040"/><circle cx="8.5" cy="7" r="2" fill="#f06010"/><path d="M3 3 L6 5" stroke="#556" stroke-width="0.7"/></svg><div class="t" style="left:1086.4px;top:841.3px;color:#000;font-size:11px;font-weight:normal;letter-spacing:-0.157px;">Изображение 41</div><div class="a" style="left:1045px;top:863px;width:8px;height:1px;background:repeating-linear-gradient(90deg,#a0a0a0 0 1px,transparent 1px 2px)"></div><div class="a" style="left:1054px;top:858px;width:11px;height:11px;border:1px solid #3a6ab0;border-radius:2px;background:linear-gradient(#fdfeff,#d8e6f4)"></div><svg class="a" style="left:1067px;top:857px" width="14" height="13"><rect x="0.5" y="0.5" width="13" height="12" fill="#fff" stroke="#2a6ad0"/><rect x="2" y="2" width="10" height="9" fill="#dff0fa"/><path d="M2 8 Q6 6 12 8 L12 11 L2 11Z" fill="#10a040"/><circle cx="8.5" cy="7" r="2" fill="#f06010"/><path d="M3 3 L6 5" stroke="#556" stroke-width="0.7"/></svg><div class="t" style="left:1086.4px;top:857.3px;color:#000;font-size:11px;font-weight:normal;letter-spacing:-0.157px;">Изображение 42</div><div class="a" style="left:1045px;top:879px;width:8px;height:1px;background:repeating-linear-gradient(90deg,#a0a0a0 0 1px,transparent 1px 2px)"></div><div class="a" style="left:1054px;top:874px;width:11px;height:11px;border:1px solid #3a6ab0;border-radius:2px;background:linear-gradient(#fdfeff,#d8e6f4)"></div><svg class="a" style="left:1067px;top:873px" width="14" height="13"><rect x="0.5" y="0.5" width="13" height="12" fill="#fff" stroke="#2a6ad0"/><rect x="2" y="2" width="10" height="9" fill="#dff0fa"/><path d="M2 8 Q6 6 12 8 L12 11 L2 11Z" fill="#10a040"/><circle cx="8.5" cy="7" r="2" fill="#f06010"/><path d="M3 3 L6 5" stroke="#556" stroke-width="0.7"/></svg><div class="t" style="left:1086.4px;top:873.3px;color:#000;font-size:11px;font-weight:normal;letter-spacing:-0.157px;">Изображение 43</div><div class="a" style="left:1045px;top:895px;width:8px;height:1px;background:repeating-linear-gradient(90deg,#a0a0a0 0 1px,transparent 1px 2px)"></div><div class="a" style="left:1054px;top:890px;width:11px;height:11px;border:1px solid #3a6ab0;border-radius:2px;background:linear-gradient(#fdfeff,#d8e6f4)"></div><svg class="a" style="left:1067px;top:889px" width="14" height="13"><rect x="0.5" y="0.5" width="13" height="12" fill="#fff" stroke="#2a6ad0"/><rect x="2" y="2" width="10" height="9" fill="#dff0fa"/><path d="M2 8 Q6 6 12 8 L12 11 L2 11Z" fill="#10a040"/><circle cx="8.5" cy="7" r="2" fill="#f06010"/><path d="M3 3 L6 5" stroke="#556" stroke-width="0.7"/></svg><div class="t" style="left:1086.4px;top:889.3px;color:#000;font-size:11px;font-weight:normal;letter-spacing:-0.157px;">Изображение 44</div><div class="a" style="left:1045px;top:911px;width:8px;height:1px;background:repeating-linear-gradient(90deg,#a0a0a0 0 1px,transparent 1px 2px)"></div><div class="a" style="left:1054px;top:906px;width:11px;height:11px;border:1px solid #3a6ab0;border-radius:2px;background:linear-gradient(#fdfeff,#d8e6f4)"></div><svg class="a" style="left:1067px;top:905px" width="14" height="13"><rect x="0.5" y="0.5" width="13" height="12" fill="#fff" stroke="#2a6ad0"/><rect x="2" y="2" width="10" height="9" fill="#dff0fa"/><path d="M2 8 Q6 6 12 8 L12 11 L2 11Z" fill="#10a040"/><circle cx="8.5" cy="7" r="2" fill="#f06010"/><path d="M3 3 L6 5" stroke="#556" stroke-width="0.7"/></svg><div class="t" style="left:1086.4px;top:905.3px;color:#000;font-size:11px;font-weight:normal;letter-spacing:-0.157px;">Изображение 45</div><div class="a" style="left:1045px;top:927px;width:8px;height:1px;background:repeating-linear-gradient(90deg,#a0a0a0 0 1px,transparent 1px 2px)"></div><div class="a" style="left:1054px;top:922px;width:11px;height:11px;border:1px solid #3a6ab0;border-radius:2px;background:linear-gradient(#fdfeff,#d8e6f4)"></div><svg class="a" style="left:1067px;top:921px" width="14" height="13"><rect x="0.5" y="0.5" width="13" height="12" fill="#fff" stroke="#2a6ad0"/><rect x="2" y="2" width="10" height="9" fill="#dff0fa"/><path d="M2 8 Q6 6 12 8 L12 11 L2 11Z" fill="#10a040"/><circle cx="8.5" cy="7" r="2" fill="#f06010"/><path d="M3 3 L6 5" stroke="#556" stroke-width="0.7"/></svg><div class="t" style="left:1086.4px;top:921.3px;color:#000;font-size:11px;font-weight:normal;letter-spacing:-0.157px;">Изображение 46</div>
<div class="a" style="left:1227px;top:146px;width:24px;height:791px;background:#bfdbff"></div>
<div class="a" style="left:1231px;top:151px;width:19px;height:132px;background:linear-gradient(90deg,#fff0c4,#fde29a 50%,#f9cc68);border:1px solid #f0d890"></div>
<svg class="a" style="left:1233px;top:152px" width="14" height="15"><path d="M1 1 H9 L13 5 V14 H1Z" fill="#fff" stroke="#6080b0" stroke-width="0.8"/><circle cx="7" cy="9" r="4.5" fill="#1a4ab0"/><rect x="6.2" y="8" width="1.6" height="4" fill="#fff"/><rect x="6.2" y="6" width="1.6" height="1.4" fill="#fff"/></svg>
<div class="a" style="left:1247px;top:174px;width:16px;height:100px;transform-origin:0 0;transform:rotate(90deg)"><div style="position:absolute;left:0;top:0;white-space:nowrap;line-height:13px;font-size:11px;color:#4a5668;letter-spacing:-0.2px">С войства файла</div></div>


<div class="a" style="left:0;top:937px;width:1253px;height:1px;background:#5a84bc"></div>
<div class="a" style="left:0;top:938px;width:1253px;height:21px;background:linear-gradient(#ffffff 0,#ffffff 1px,#d8e8fa 1px,#cde1f8 6px,#b5d0f0 8px,#bcd5f2 12px,#cfe3fa 20px,#a8c4ea 21px)"></div>
<div class="a" style="left:834px;top:938px;width:419px;height:21px;background:linear-gradient(#e8f2fd 0,#e8f2fd 1px,#bcd4f2 1px,#b2cdf0 6px,#9dbde8 8px,#a6c4ea 12px,#b8d2f2 20px,#98b8e4 21px);border-left:1px solid #8aaad6"></div>
<div class="a" style="left:0;top:959px;width:1253px;height:2px;background:#1e2228"></div>
<div class="t" style="left:11.5px;top:943px;color:#15428b;font-size:11px;font-weight:normal;letter-spacing:0.303px;">Готов</div>
<div class="t" style="left:849.7px;top:943px;color:#15428b;font-size:11px;font-weight:normal;letter-spacing:0.411px;">Обновить</div>
<div class="a" style="left:913px;top:940px;width:75px;height:18px;background:linear-gradient(#e6f0fb,#c4d8f1);border:1px solid #a6c2e6;border-radius:2px"></div>
<div class="a" style="left:941px;top:941px;width:1px;height:16px;background:#a6c2e6"></div>
<div class="a" style="left:966px;top:941px;width:1px;height:16px;background:#a6c2e6"></div>
<svg class="a" style="left:915px;top:941px" width="26" height="17"><rect x="2.5" y="0.5" width="10" height="10" fill="#fff" stroke="#606060" stroke-width="0.8"/><rect x="4" y="2" width="3" height="3" fill="#e02020"/><rect x="8" y="2" width="3" height="3" fill="#20a020"/><rect x="4" y="6" width="3" height="3" fill="#e08020"/><rect x="8" y="6" width="3" height="3" fill="#2040e0"/><rect x="13" y="3" width="4" height="9" fill="#b0b8c0"/><rect x="2" y="12" width="14" height="4" fill="#8a9aa6"/><path d="M19 7 L23 7 L21 9Z" fill="#506070"/></svg>
<svg class="a" style="left:945px;top:940px" width="18" height="18"><path d="M4 8 L4 3.5 Q5 2 6 3.5 L6 7 L6 2 Q7 0.5 8 2 L8 7 L8 1.5 Q9.5 0 10.5 1.5 L10.5 7 L10.5 3 Q11.5 1.5 12.5 3 L12.5 11 Q12.5 16 8.5 16.5 Q5 16.5 3 13 L1 9 Q1.5 7.5 3 8.5 Z" fill="#fff" stroke="#404040" stroke-width="0.8"/></svg>
<svg class="a" style="left:969px;top:941px" width="17" height="16"><rect x="1.5" y="1.5" width="14" height="13" fill="none" stroke="#1a3a9a" stroke-width="1.2" stroke-dasharray="2 1.2"/><path d="M4 4 L7 7 M4 4 L6.5 4 M4 4 L4 6.5 M13 4 L10 7 M13 4 L10.5 4 M13 4 L13 6.5 M4 12 L7 9 M4 12 L4 9.5 M4 12 L6.5 12 M13 12 L10 9 M13 12 L13 9.5 M13 12 L10.5 12" stroke="#1a3a9a" stroke-width="0.9"/></svg>
<div class="t" style="left:999.6px;top:943px;color:#15428b;font-size:11px;font-weight:normal;letter-spacing:-0.235px;">100%</div>
<svg class="a" style="left:1036px;top:940px" width="20" height="18"><circle cx="10" cy="9" r="7.5" fill="url(#zg)" stroke="#6a7e9a" stroke-width="1"/><defs><linearGradient id="zg" x1="0" y1="0" x2="0" y2="1"><stop offset="0" stop-color="#f4f8fc"/><stop offset="1" stop-color="#b8c8dc"/></linearGradient></defs><rect x="6" y="8" width="8" height="2" fill="#4a5e7a"/></svg>
<div class="a" style="left:1061px;top:949px;width:146px;height:1px;background:#6f86a6"></div>
<div class="a" style="left:1061px;top:950px;width:146px;height:1px;background:#f4f8fc"></div>
<svg class="a" style="left:1129px;top:941px" width="11" height="16"><path d="M1 1 H10 V10 L5.5 15 L1 10Z" fill="#f4f6fa" stroke="#6a7e9a" stroke-width="1"/><path d="M5.5 4 V10" stroke="#8a9ab0" stroke-width="1"/></svg>
<svg class="a" style="left:1212px;top:940px" width="20" height="18"><circle cx="10" cy="9" r="7.5" fill="url(#zg)" stroke="#6a7e9a" stroke-width="1"/><rect x="6" y="8" width="8" height="2" fill="#4a5e7a"/><rect x="9" y="5" width="2" height="8" fill="#4a5e7a"/></svg>
<svg class="a" style="left:1237px;top:943px" width="11" height="13"><g fill="#6a7e9a"><rect x="8" y="2" width="2" height="2"/><rect x="5" y="6" width="2" height="2"/><rect x="8" y="6" width="2" height="2"/><rect x="2" y="10" width="2" height="2"/><rect x="5" y="10" width="2" height="2"/><rect x="8" y="10" width="2" height="2"/></g></svg>

</body></html>
